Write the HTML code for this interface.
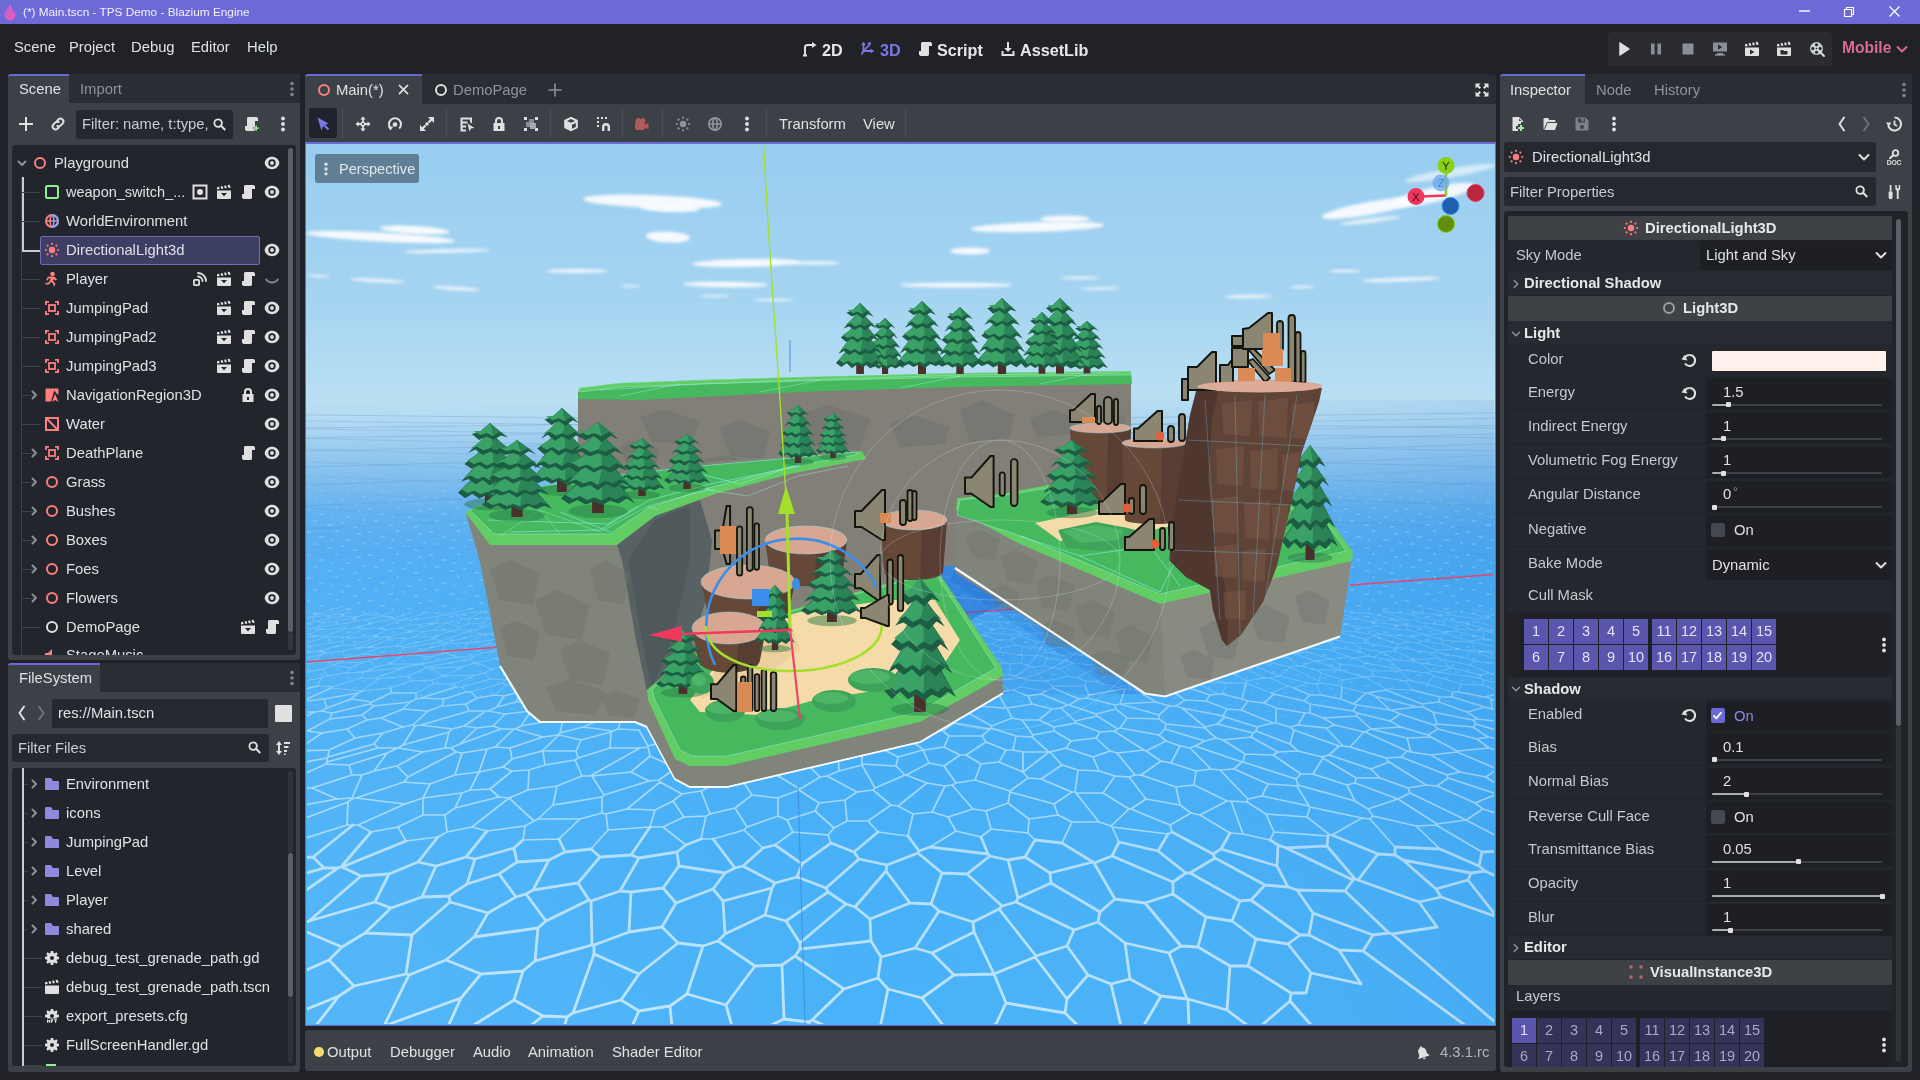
<!DOCTYPE html><html><head><meta charset="utf-8"><title>Blazium Engine</title><style>html,body{margin:0;padding:0}body{width:1920px;height:1080px;overflow:hidden;background:#202228;position:relative;font-family:"Liberation Sans",sans-serif}
.b{position:absolute;box-sizing:border-box}.g{font-size:14.500px;line-height:25px;text-align:center}.t{position:absolute;white-space:nowrap;line-height:20px;height:20px}.ic{position:absolute;display:block;overflow:visible}
#vp svg{position:absolute;left:1px;top:2px}#root{position:absolute;left:0;top:0;width:1920px;height:1080px;will-change:transform}</style></head><body><div id="root"><div class="b " style="left:0px;top:0px;width:1920px;height:24px;background:#6d6ad8;"></div>
<svg class="ic" style="left:1px;top:3px" width="16" height="18" viewBox="0 0 16 18"><path d="M8.500 0.500c.5 2.500-.5 4-2 5.500C4.500 8 3 10 3.500 12.500 4 15.500 6.500 17.500 9 17.500c3 0 5.500-2.500 5.500-5.500 0-2-1-3.500-2-4.500.2 1.500-.3 2.500-1 3C12 7 11 3 8.500.5z" fill="#e05cc0"/><path d="M8.500 5c.3 2-1 3-2 4.500C5.500 11 5.500 13 6.500 14.500 5 13 4.800 11 6 9.500 7 8 8 7 8.500 5z" fill="#9b4fd0"/></svg>
<div class="t " style="left:23px;top:2px;color:#f2f1fc;font-size:11.8px;">(*) Main.tscn - TPS Demo - Blazium Engine</div>
<svg class="ic" style="left:1797px;top:4px" width="110" height="16" viewBox="0 0 110 16"><path d="M2 7h11" stroke="#fff" stroke-width="1.400"/><path d="M47.500 5.500h7v7h-7zM49.500 5.500v-2h7v7h-2" fill="none" stroke="#fff" stroke-width="1.200"/><path d="M92.500 2.500l10 10M102.500 2.500l-10 10" stroke="#fff" stroke-width="1.200"/></svg>
<div class="t " style="left:14px;top:37px;color:#dfe1e4;font-size:14.8px;">Scene</div>
<div class="t " style="left:69px;top:37px;color:#dfe1e4;font-size:14.8px;">Project</div>
<div class="t " style="left:131px;top:37px;color:#dfe1e4;font-size:14.8px;">Debug</div>
<div class="t " style="left:191px;top:37px;color:#dfe1e4;font-size:14.8px;">Editor</div>
<div class="t " style="left:247px;top:37px;color:#dfe1e4;font-size:14.8px;">Help</div>
<svg class="ic" style="left:802.0px;top:41.0px" width="16" height="16" viewBox="0 0 16 16" ><path d="M3 15V6.500A2.500 2.500 0 0 1 5.500 4H11" fill="none" stroke="#e0e0e0" stroke-width="2"/><path d="M10 1l4.500 3L10 7zM1 13.500h4v2H1z" fill="#e0e0e0"/></svg>
<div class="t " style="left:822px;top:39.5px;color:#e6e7e9;font-size:16.2px;font-weight:bold">2D</div>
<svg class="ic" style="left:860.0px;top:41.0px" width="16" height="16" viewBox="0 0 16 16" ><g fill="none" stroke="#7b78e8" stroke-width="1.800"><path d="M3.500 2.500v7.500h8"/><path d="M3.500 10l-2 3.500M3.500 10L9.500 3.500"/></g><path d="M1.200 4L3.500.8 5.800 4zM10.500 7.700L14.500 10l-4 2.300zM7.200 2l4-1-1 4z" fill="#7b78e8"/></svg>
<div class="t " style="left:880px;top:39.5px;color:#7b78e8;font-size:16.2px;font-weight:bold">3D</div>
<svg class="ic" style="left:917.0px;top:41.0px" width="16" height="16" viewBox="0 0 16 16" ><path d="M6 1C4.9 1 4 1.9 4 3v7H2v2.2C2 13.7 3 15 4.5 15H10c1.1 0 2-.9 2-2V5h2.5V3c0-1.1-.9-2-2-2zm0 1.4h5.2c-.2.4-.2.8-.2 1.2V6H9v6.6c0 .6-.4 1-1 1s-1-.4-1-1V10H5.4V3c0-.3.3-.6.6-.6z" fill="#e0e0e0"/><path d="M6 1C4.9 1 4 1.9 4 3v7H2v2.5C2 13.9 3.1 15 4.5 15H10c1.1 0 2-.9 2-2V5h3V3c0-1.1-.9-2-2-2z" fill="#e0e0e0"/></svg>
<div class="t " style="left:937px;top:39.5px;color:#e6e7e9;font-size:16.2px;font-weight:bold">Script</div>
<svg class="ic" style="left:1000.0px;top:41.0px" width="16" height="16" viewBox="0 0 16 16" ><path d="M7 1h2v6h2.800L8 11 4.200 7H7zM1.500 10h2v3h9v-3h2v5h-13z" fill="#e0e0e0"/></svg>
<div class="t " style="left:1020px;top:39.5px;color:#e6e7e9;font-size:16.2px;font-weight:bold">AssetLib</div>
<div class="b " style="left:1608px;top:32px;width:224px;height:34px;background:#2a2c32;border-radius:4px"></div>
<svg class="ic" style="left:1615.5px;top:40.5px" width="16" height="16" viewBox="0 0 16 16" ><path d="M4 2l9 6-9 6z" fill="#e0e0e0" stroke="#e0e0e0" stroke-width="1.500" stroke-linejoin="round"/></svg>
<svg class="ic" style="left:1648.0px;top:40.5px" width="16" height="16" viewBox="0 0 16 16" ><path d="M3 2.500h3.600v11H3zM9.400 2.500H13v11H9.400z" fill="#8a8f96"/></svg>
<svg class="ic" style="left:1680.0px;top:40.5px" width="16" height="16" viewBox="0 0 16 16" ><rect x="2.500" y="2.500" width="11" height="11" rx="1" fill="#8a8f96"/></svg>
<svg class="ic" style="left:1712.0px;top:40.5px" width="16" height="16" viewBox="0 0 16 16" ><path d="M1 1.500h14v9H1zM6 3.500v5l4.500-2.500zM5 12h6v1.200h2v1.600H3v-1.600h2z" fill="#8a8f96" fill-rule="evenodd"/></svg>
<svg class="ic" style="left:1744.0px;top:40.5px" width="16" height="16" viewBox="0 0 16 16" ><path d="M1 6.500h14V14a1 1 0 0 1-1 1H2a1 1 0 0 1-1-1zM6 8.500v5l4.500-2.500z" fill="#e0e0e0" fill-rule="evenodd"/><path d="M1 5.500V3.200l2-.4.800 2.200zM4.500 2.500l2-.4.900 2.500-2 .5zM8 1.800l2-.4.900 2.500-2 .5zM11.500 1.100l2-.4L14.800 3.500l-2.300.6z" fill="#e0e0e0"/></svg>
<svg class="ic" style="left:1776.0px;top:40.5px" width="16" height="16" viewBox="0 0 16 16" ><path d="M1 6.500h14V14a1 1 0 0 1-1 1H2a1 1 0 0 1-1-1zM4.500 9v4.500h7V10H8L7 9z" fill="#e0e0e0" fill-rule="evenodd"/><path d="M1 5.500V3.200l2-.4.800 2.200zM4.500 2.500l2-.4.900 2.500-2 .5zM8 1.800l2-.4.900 2.500-2 .5zM11.500 1.100l2-.4L14.800 3.500l-2.300.6z" fill="#e0e0e0"/></svg>
<svg class="ic" style="left:1808.5px;top:40.5px" width="16" height="16" viewBox="0 0 16 16" ><circle cx="7.500" cy="7.500" r="6.500" fill="#c9ccd0"/><g fill="#202228"><circle cx="7.500" cy="3.800" r="1.500"/><circle cx="7.500" cy="11.200" r="1.500"/><circle cx="3.800" cy="7.500" r="1.500"/><circle cx="11.200" cy="7.500" r="1.500"/><circle cx="7.500" cy="7.500" r=".8"/></g><path d="M11.500 11.500l3.500 3.500" stroke="#e0e0e0" stroke-width="2" stroke-linecap="round"/></svg>
<div class="t " style="left:1842px;top:38px;color:#dc6a93;font-size:15.6px;font-weight:bold">Mobile</div>
<svg class="ic" style="left:1894.0px;top:40.5px" width="16" height="16" viewBox="0 0 16 16" ><path d="M3.500 6l4.500 4.500L12.500 6" fill="none" stroke="#dc6a93" stroke-width="2" stroke-linecap="round" stroke-linejoin="round"/></svg>
<div class="b " style="left:8px;top:74px;width:292px;height:586px;background:#3b4146;border-radius:3px"></div>
<div class="b " style="left:8px;top:74px;width:292px;height:29px;background:#2a2d33;border-radius:3px 3px 0 0"></div>
<div class="b " style="left:8px;top:74px;width:61px;height:29px;background:#3b4146;border-top:2px solid #6b69d6;box-sizing:border-box;border-radius:3px 0 0 0"></div>
<div class="t " style="left:19px;top:79px;color:#dfe1e4;font-size:14.8px;">Scene</div>
<div class="t " style="left:80px;top:79px;color:#8f949b;font-size:14.8px;">Import</div>
<svg class="ic" style="left:284.0px;top:81.0px" width="16" height="16" viewBox="0 0 16 16" ><g fill="#7f848b"><circle cx="8" cy="2.5" r="1.8"/><circle cx="8" cy="8" r="1.8"/><circle cx="8" cy="13.5" r="1.8"/></g></svg>
<svg class="ic" style="left:18.0px;top:116.0px" width="16" height="16" viewBox="0 0 16 16" ><path d="M7 1v6H1v2h6v6h2V9h6V7H9V1z" fill="#e0e0e0"/></svg>
<svg class="ic" style="left:50.0px;top:116.0px" width="16" height="16" viewBox="0 0 16 16" ><g fill="none" stroke="#e0e0e0" stroke-width="2" stroke-linecap="round"><path d="M7.2 4.6l1.4-1.4a3 3 0 0 1 4.2 4.2l-2 2a3 3 0 0 1-3.4.6"/><path d="M8.8 11.4l-1.4 1.4a3 3 0 0 1-4.2-4.2l2-2a3 3 0 0 1 3.4-.6"/></g></svg>
<div class="b " style="left:76px;top:110px;width:157px;height:29px;background:#25282e;border-radius:3px"></div>
<div class="t " style="left:82px;top:114px;color:#c8cbcf;font-size:14.8px;">Filter: name, t:type,</div>
<svg class="ic" style="left:211.5px;top:116.5px" width="15" height="15" viewBox="0 0 16 16" ><path d="M6.5 1.5a5 5 0 1 0 2.9 9.1l4 4 1.5-1.5-4-4A5 5 0 0 0 6.5 1.5zm0 2a3 3 0 0 1 0 6 3 3 0 0 1 0-6z" fill="#e0e0e0"/></svg>
<svg class="ic" style="left:243.0px;top:116.0px" width="16" height="16" viewBox="0 0 16 16" ><path d="M6 1C4.9 1 4 1.9 4 3v7H2v2.2C2 13.7 3 15 4.5 15H10c1.1 0 2-.9 2-2V5h2.5V3c0-1.1-.9-2-2-2zm0 1.4h5.2c-.2.4-.2.8-.2 1.2V6H9v6.6c0 .6-.4 1-1 1s-1-.4-1-1V10H5.4V3c0-.3.3-.6.6-.6z" fill="#e0e0e0"/><path d="M6 1C4.9 1 4 1.9 4 3v7H2v2.5C2 13.9 3.1 15 4.5 15H10c1.1 0 2-.9 2-2V5h3V3c0-1.1-.9-2-2-2z" fill="#e0e0e0"/><path d="M12.2 9.2v2h-2v1.8h2v2H14v-2h2v-1.800h-2v-2z" fill="#8eef97" stroke="#363b42" stroke-width=".3"/></svg>
<svg class="ic" style="left:275.0px;top:116.0px" width="16" height="16" viewBox="0 0 16 16" ><g fill="#e0e0e0"><circle cx="8" cy="2.5" r="1.9"/><circle cx="8" cy="8" r="1.9"/><circle cx="8" cy="13.5" r="1.9"/></g></svg>
<div class="b " style="left:12px;top:145px;width:284px;height:510px;background:#22252b;border-radius:3px"></div>
<div class="b " style="left:288px;top:148px;width:5px;height:484px;background:#5a5f66;border-radius:3px"></div>
<div class="b " style="left:288px;top:632px;width:5px;height:18px;background:#34383e;border-radius:3px"></div>
<div class="b " style="left:21px;top:177px;width:1px;height:478px;background:#3e434a;"></div>
<div class="b " style="left:21.5px;top:177px;width:2px;height:74px;background:#c9cbce;"></div>
<div class="b " style="left:22px;top:249.5px;width:18px;height:2px;background:#c9cbce;"></div>
<svg class="ic" style="left:14.0px;top:155.0px" width="16" height="16" viewBox="0 0 16 16" ><path d="M4.500 6.500l3.500 3.500L11.500 6.500" fill="none" stroke="#8c9097" stroke-width="2" stroke-linecap="round" stroke-linejoin="round"/></svg>
<svg class="ic" style="left:32.0px;top:155.0px" width="16" height="16" viewBox="0 0 16 16" ><circle cx="8" cy="8" r="5" fill="none" stroke="#fc7f7f" stroke-width="2"/></svg>
<div class="t " style="left:54px;top:153px;color:#dfe1e4;font-size:14.8px;">Playground</div>
<svg class="ic" style="left:263.5px;top:155.0px" width="16" height="16" viewBox="0 0 16 16" ><path d="M8 1.8C4.2 1.800 1.200 4.400.6 8c.6 3.600 3.600 6.200 7.400 6.200s6.800-2.600 7.400-6.200C14.800 4.400 11.800 1.800 8 1.800z" fill="#e0e0e0"/><circle cx="8" cy="8" r="3.700" fill="#22252b"/><circle cx="8" cy="8" r="1.9" fill="#e0e0e0"/></svg>
<div class="b " style="left:22px;top:192px;width:18px;height:1px;background:#3e434a;"></div>
<svg class="ic" style="left:44.0px;top:184.0px" width="16" height="16" viewBox="0 0 16 16" ><rect x="2" y="2" width="12" height="12" rx="1.500" fill="none" stroke="#8eef97" stroke-width="2"/></svg>
<div class="t " style="left:66px;top:182px;color:#dfe1e4;font-size:14.5px;">weapon_switch_...</div>
<svg class="ic" style="left:263.5px;top:184.0px" width="16" height="16" viewBox="0 0 16 16" ><path d="M8 1.8C4.2 1.800 1.200 4.400.6 8c.6 3.600 3.600 6.200 7.400 6.200s6.800-2.600 7.400-6.200C14.800 4.400 11.800 1.800 8 1.800z" fill="#e0e0e0"/><circle cx="8" cy="8" r="3.700" fill="#22252b"/><circle cx="8" cy="8" r="1.9" fill="#e0e0e0"/></svg>
<svg class="ic" style="left:239.5px;top:184.0px" width="16" height="16" viewBox="0 0 16 16" ><path d="M6 1C4.9 1 4 1.9 4 3v7H2v2.2C2 13.7 3 15 4.5 15H10c1.1 0 2-.9 2-2V5h2.5V3c0-1.1-.9-2-2-2zm0 1.4h5.2c-.2.4-.2.8-.2 1.2V6H9v6.6c0 .6-.4 1-1 1s-1-.4-1-1V10H5.4V3c0-.3.3-.6.6-.6z" fill="#e0e0e0"/><path d="M6 1C4.9 1 4 1.9 4 3v7H2v2.5C2 13.9 3.1 15 4.5 15H10c1.1 0 2-.9 2-2V5h3V3c0-1.1-.9-2-2-2z" fill="#e0e0e0"/></svg>
<svg class="ic" style="left:215.5px;top:184.0px" width="16" height="16" viewBox="0 0 16 16" ><path d="M1 6.500h14V14a1 1 0 0 1-1 1H2a1 1 0 0 1-1-1zM5 9l3 3.200L11 9z" fill="#e0e0e0" fill-rule="evenodd"/><path d="M1 5.500V3.200l2-.4.800 2.200zM4.500 2.500l2-.4.900 2.500-2 .5zM8 1.800l2-.4.900 2.500-2 .5zM11.500 1.100l2-.4L14.800 3.500l-2.300.6z" fill="#e0e0e0"/></svg>
<svg class="ic" style="left:191.5px;top:184.0px" width="16" height="16" viewBox="0 0 16 16" ><rect x="1.500" y="1.500" width="13" height="13" fill="none" stroke="#e0e0e0" stroke-width="2"/><circle cx="8" cy="8" r="3" fill="#e0e0e0"/></svg>
<div class="b " style="left:22px;top:221px;width:18px;height:1px;background:#3e434a;"></div>
<svg class="ic" style="left:44.0px;top:213.0px" width="16" height="16" viewBox="0 0 16 16" ><circle cx="8" cy="8" r="6" fill="none" stroke="#fc7f7f" stroke-width="2"/><path d="M8 2a6 6 0 0 1 0 12" fill="none" stroke="#8da5f3" stroke-width="2"/><path d="M2 8h6M8 2c-2.500 1.500-2.500 10.500 0 12" fill="none" stroke="#fc7f7f" stroke-width="1.600"/><path d="M8 8h6M8 2c2.500 1.500 2.500 10.500 0 12" fill="none" stroke="#8da5f3" stroke-width="1.600"/></svg>
<div class="t " style="left:66px;top:211px;color:#dfe1e4;font-size:14.8px;">WorldEnvironment</div>
<div class="b " style="left:40px;top:236px;width:220px;height:29px;background:#3c3e63;border:1px solid #6f6db2;box-sizing:border-box;border-radius:2px"></div>
<svg class="ic" style="left:44.0px;top:242.0px" width="16" height="16" viewBox="0 0 16 16" ><g fill="#fc7f7f" opacity="1"><circle cx="8" cy="8" r="3.200"/><circle cx="8" cy="1.800" r="1.100"/><circle cx="8" cy="14.200" r="1.100"/><circle cx="1.800" cy="8" r="1.100"/><circle cx="14.200" cy="8" r="1.100"/><circle cx="3.600" cy="3.600" r="1.100"/><circle cx="12.400" cy="3.600" r="1.100"/><circle cx="3.600" cy="12.400" r="1.100"/><circle cx="12.400" cy="12.400" r="1.100"/></g></svg>
<div class="t " style="left:66px;top:240px;color:#dfe1e4;font-size:14.8px;">DirectionalLight3d</div>
<svg class="ic" style="left:263.5px;top:242.0px" width="16" height="16" viewBox="0 0 16 16" ><path d="M8 1.8C4.2 1.800 1.200 4.400.6 8c.6 3.600 3.600 6.200 7.400 6.200s6.800-2.600 7.400-6.200C14.800 4.400 11.800 1.800 8 1.800z" fill="#e0e0e0"/><circle cx="8" cy="8" r="3.700" fill="#22252b"/><circle cx="8" cy="8" r="1.9" fill="#e0e0e0"/></svg>
<div class="b " style="left:22px;top:279px;width:18px;height:1px;background:#3e434a;"></div>
<svg class="ic" style="left:44.0px;top:271.0px" width="16" height="16" viewBox="0 0 16 16" ><g fill="#fc7f7f"><circle cx="8.500" cy="3" r="2.300"/><path d="M5 5.500l5.500.3 2.500 2.700-1.200 1.200-2-1.800-.8 2 2.500 2.600-1 2.500-1.600-.5.6-1.500-2.500-2-2 2.500H1.500v-1.700h2.700l1.800-2.600.5-2.200-1.800.6-1 2-1.500-.7 1.300-2.700z"/></g></svg>
<div class="t " style="left:66px;top:269px;color:#dfe1e4;font-size:14.8px;">Player</div>
<svg class="ic" style="left:263.5px;top:271.0px" width="16" height="16" viewBox="0 0 16 16" ><path d="M1 8.500c1.500 2.500 4 4 7 4s5.500-1.500 7-4l-1.600-1.200c-.5 1-1.300 1.800-2.200 2.400C10.200 10.300 9.100 10.500 8 10.500s-2.200-.2-3.200-.8C3.900 9.100 3.100 8.300 2.600 7.300z" fill="#7e848c"/></svg>
<svg class="ic" style="left:239.5px;top:271.0px" width="16" height="16" viewBox="0 0 16 16" ><path d="M6 1C4.9 1 4 1.9 4 3v7H2v2.2C2 13.7 3 15 4.5 15H10c1.1 0 2-.9 2-2V5h2.5V3c0-1.1-.9-2-2-2zm0 1.4h5.2c-.2.4-.2.8-.2 1.2V6H9v6.6c0 .6-.4 1-1 1s-1-.4-1-1V10H5.4V3c0-.3.3-.6.6-.6z" fill="#e0e0e0"/><path d="M6 1C4.9 1 4 1.9 4 3v7H2v2.5C2 13.9 3.1 15 4.5 15H10c1.1 0 2-.9 2-2V5h3V3c0-1.1-.9-2-2-2z" fill="#e0e0e0"/></svg>
<svg class="ic" style="left:215.5px;top:271.0px" width="16" height="16" viewBox="0 0 16 16" ><path d="M1 6.500h14V14a1 1 0 0 1-1 1H2a1 1 0 0 1-1-1zM5 9l3 3.200L11 9z" fill="#e0e0e0" fill-rule="evenodd"/><path d="M1 5.500V3.200l2-.4.800 2.200zM4.500 2.500l2-.4.900 2.500-2 .5zM8 1.800l2-.4.900 2.500-2 .5zM11.500 1.100l2-.4L14.800 3.500l-2.300.6z" fill="#e0e0e0"/></svg>
<svg class="ic" style="left:191.5px;top:271.0px" width="16" height="16" viewBox="0 0 16 16" ><g fill="none" stroke="#e0e0e0" stroke-width="1.800" stroke-linecap="round"><rect x="1.900" y="8.900" width="5.200" height="5.200" rx=".8"/><path d="M6 5.500A4.500 4.500 0 0 1 10.500 10M6 2a8 8 0 0 1 8 8"/></g></svg>
<div class="b " style="left:22px;top:308px;width:18px;height:1px;background:#3e434a;"></div>
<svg class="ic" style="left:44.0px;top:300.0px" width="16" height="16" viewBox="0 0 16 16" ><g fill="none" stroke="#fc7f7f" stroke-width="1.800"><path d="M1.900 5V1.900H5M11 1.900h3.100V5M14.100 11v3.100H11M5 14.100H1.900V11"/><rect x="5" y="5" width="6" height="6"/></g></svg>
<div class="t " style="left:66px;top:298px;color:#dfe1e4;font-size:14.8px;">JumpingPad</div>
<svg class="ic" style="left:263.5px;top:300.0px" width="16" height="16" viewBox="0 0 16 16" ><path d="M8 1.8C4.2 1.800 1.200 4.400.6 8c.6 3.600 3.600 6.200 7.400 6.200s6.800-2.600 7.400-6.200C14.800 4.400 11.800 1.800 8 1.800z" fill="#e0e0e0"/><circle cx="8" cy="8" r="3.700" fill="#22252b"/><circle cx="8" cy="8" r="1.9" fill="#e0e0e0"/></svg>
<svg class="ic" style="left:239.5px;top:300.0px" width="16" height="16" viewBox="0 0 16 16" ><path d="M6 1C4.9 1 4 1.9 4 3v7H2v2.2C2 13.7 3 15 4.5 15H10c1.1 0 2-.9 2-2V5h2.5V3c0-1.1-.9-2-2-2zm0 1.4h5.2c-.2.4-.2.8-.2 1.2V6H9v6.6c0 .6-.4 1-1 1s-1-.4-1-1V10H5.4V3c0-.3.3-.6.6-.6z" fill="#e0e0e0"/><path d="M6 1C4.9 1 4 1.9 4 3v7H2v2.5C2 13.9 3.1 15 4.5 15H10c1.1 0 2-.9 2-2V5h3V3c0-1.1-.9-2-2-2z" fill="#e0e0e0"/></svg>
<svg class="ic" style="left:215.5px;top:300.0px" width="16" height="16" viewBox="0 0 16 16" ><path d="M1 6.500h14V14a1 1 0 0 1-1 1H2a1 1 0 0 1-1-1zM5 9l3 3.200L11 9z" fill="#e0e0e0" fill-rule="evenodd"/><path d="M1 5.500V3.200l2-.4.800 2.200zM4.500 2.500l2-.4.900 2.500-2 .5zM8 1.800l2-.4.900 2.500-2 .5zM11.500 1.100l2-.4L14.800 3.500l-2.300.6z" fill="#e0e0e0"/></svg>
<div class="b " style="left:22px;top:337px;width:18px;height:1px;background:#3e434a;"></div>
<svg class="ic" style="left:44.0px;top:329.0px" width="16" height="16" viewBox="0 0 16 16" ><g fill="none" stroke="#fc7f7f" stroke-width="1.800"><path d="M1.900 5V1.900H5M11 1.900h3.100V5M14.100 11v3.100H11M5 14.100H1.900V11"/><rect x="5" y="5" width="6" height="6"/></g></svg>
<div class="t " style="left:66px;top:327px;color:#dfe1e4;font-size:14.8px;">JumpingPad2</div>
<svg class="ic" style="left:263.5px;top:329.0px" width="16" height="16" viewBox="0 0 16 16" ><path d="M8 1.8C4.2 1.800 1.200 4.400.6 8c.6 3.600 3.600 6.200 7.400 6.200s6.800-2.600 7.400-6.200C14.800 4.400 11.800 1.800 8 1.800z" fill="#e0e0e0"/><circle cx="8" cy="8" r="3.700" fill="#22252b"/><circle cx="8" cy="8" r="1.9" fill="#e0e0e0"/></svg>
<svg class="ic" style="left:239.5px;top:329.0px" width="16" height="16" viewBox="0 0 16 16" ><path d="M6 1C4.9 1 4 1.9 4 3v7H2v2.2C2 13.7 3 15 4.5 15H10c1.1 0 2-.9 2-2V5h2.5V3c0-1.1-.9-2-2-2zm0 1.4h5.2c-.2.4-.2.8-.2 1.2V6H9v6.6c0 .6-.4 1-1 1s-1-.4-1-1V10H5.4V3c0-.3.3-.6.6-.6z" fill="#e0e0e0"/><path d="M6 1C4.9 1 4 1.9 4 3v7H2v2.5C2 13.9 3.1 15 4.5 15H10c1.1 0 2-.9 2-2V5h3V3c0-1.1-.9-2-2-2z" fill="#e0e0e0"/></svg>
<svg class="ic" style="left:215.5px;top:329.0px" width="16" height="16" viewBox="0 0 16 16" ><path d="M1 6.500h14V14a1 1 0 0 1-1 1H2a1 1 0 0 1-1-1zM5 9l3 3.200L11 9z" fill="#e0e0e0" fill-rule="evenodd"/><path d="M1 5.500V3.200l2-.4.800 2.200zM4.500 2.500l2-.4.900 2.500-2 .5zM8 1.800l2-.4.900 2.500-2 .5zM11.500 1.100l2-.4L14.800 3.500l-2.300.6z" fill="#e0e0e0"/></svg>
<div class="b " style="left:22px;top:366px;width:18px;height:1px;background:#3e434a;"></div>
<svg class="ic" style="left:44.0px;top:358.0px" width="16" height="16" viewBox="0 0 16 16" ><g fill="none" stroke="#fc7f7f" stroke-width="1.800"><path d="M1.900 5V1.900H5M11 1.900h3.100V5M14.100 11v3.100H11M5 14.100H1.900V11"/><rect x="5" y="5" width="6" height="6"/></g></svg>
<div class="t " style="left:66px;top:356px;color:#dfe1e4;font-size:14.8px;">JumpingPad3</div>
<svg class="ic" style="left:263.5px;top:358.0px" width="16" height="16" viewBox="0 0 16 16" ><path d="M8 1.8C4.2 1.800 1.200 4.400.6 8c.6 3.600 3.600 6.200 7.400 6.200s6.800-2.600 7.400-6.200C14.800 4.400 11.800 1.800 8 1.800z" fill="#e0e0e0"/><circle cx="8" cy="8" r="3.700" fill="#22252b"/><circle cx="8" cy="8" r="1.9" fill="#e0e0e0"/></svg>
<svg class="ic" style="left:239.5px;top:358.0px" width="16" height="16" viewBox="0 0 16 16" ><path d="M6 1C4.9 1 4 1.9 4 3v7H2v2.2C2 13.7 3 15 4.5 15H10c1.1 0 2-.9 2-2V5h2.5V3c0-1.1-.9-2-2-2zm0 1.4h5.2c-.2.4-.2.8-.2 1.2V6H9v6.6c0 .6-.4 1-1 1s-1-.4-1-1V10H5.4V3c0-.3.3-.6.6-.6z" fill="#e0e0e0"/><path d="M6 1C4.9 1 4 1.9 4 3v7H2v2.5C2 13.9 3.1 15 4.5 15H10c1.1 0 2-.9 2-2V5h3V3c0-1.1-.9-2-2-2z" fill="#e0e0e0"/></svg>
<svg class="ic" style="left:215.5px;top:358.0px" width="16" height="16" viewBox="0 0 16 16" ><path d="M1 6.500h14V14a1 1 0 0 1-1 1H2a1 1 0 0 1-1-1zM5 9l3 3.200L11 9z" fill="#e0e0e0" fill-rule="evenodd"/><path d="M1 5.500V3.200l2-.4.800 2.200zM4.500 2.500l2-.4.900 2.500-2 .5zM8 1.800l2-.4.900 2.500-2 .5zM11.500 1.100l2-.4L14.800 3.500l-2.300.6z" fill="#e0e0e0"/></svg>
<div class="b " style="left:22px;top:395px;width:12px;height:1px;background:#3e434a;"></div>
<svg class="ic" style="left:26.0px;top:387.0px" width="16" height="16" viewBox="0 0 16 16" ><path d="M6.500 4.500L10 8 6.500 11.500" fill="none" stroke="#8c9097" stroke-width="2" stroke-linecap="round" stroke-linejoin="round"/></svg>
<svg class="ic" style="left:44.0px;top:387.0px" width="16" height="16" viewBox="0 0 16 16" ><path d="M1.500 1.500h13v6.200L13 7l-2.800-3.500L7 14.500H1.500z" fill="#fc7f7f"/><path d="M11 7l3.500 8-3.500-2-3 2z" fill="#fc7f7f"/></svg>
<div class="t " style="left:66px;top:385px;color:#dfe1e4;font-size:14.8px;">NavigationRegion3D</div>
<svg class="ic" style="left:263.5px;top:387.0px" width="16" height="16" viewBox="0 0 16 16" ><path d="M8 1.8C4.2 1.800 1.200 4.400.6 8c.6 3.600 3.600 6.200 7.400 6.200s6.800-2.600 7.400-6.200C14.800 4.400 11.800 1.800 8 1.800z" fill="#e0e0e0"/><circle cx="8" cy="8" r="3.700" fill="#22252b"/><circle cx="8" cy="8" r="1.9" fill="#e0e0e0"/></svg>
<svg class="ic" style="left:239.5px;top:387.0px" width="16" height="16" viewBox="0 0 16 16" ><path d="M8 1a4 4 0 0 0-4 4v2H2.500v8h11V7H12V5a4 4 0 0 0-4-4zm0 2a2 2 0 0 1 2 2v2H6V5a2 2 0 0 1 2-2zm-1 7h2v3H7z" fill="#e0e0e0" fill-rule="evenodd"/></svg>
<div class="b " style="left:22px;top:424px;width:18px;height:1px;background:#3e434a;"></div>
<svg class="ic" style="left:44.0px;top:416.0px" width="16" height="16" viewBox="0 0 16 16" ><g fill="none" stroke="#fc7f7f" stroke-width="2"><rect x="2" y="2" width="12" height="12"/><path d="M2.500 2.500l11 11"/></g></svg>
<div class="t " style="left:66px;top:414px;color:#dfe1e4;font-size:14.8px;">Water</div>
<svg class="ic" style="left:263.5px;top:416.0px" width="16" height="16" viewBox="0 0 16 16" ><path d="M8 1.8C4.2 1.800 1.200 4.400.6 8c.6 3.600 3.600 6.200 7.400 6.200s6.800-2.600 7.400-6.200C14.800 4.400 11.800 1.800 8 1.800z" fill="#e0e0e0"/><circle cx="8" cy="8" r="3.700" fill="#22252b"/><circle cx="8" cy="8" r="1.9" fill="#e0e0e0"/></svg>
<div class="b " style="left:22px;top:453px;width:12px;height:1px;background:#3e434a;"></div>
<svg class="ic" style="left:26.0px;top:445.0px" width="16" height="16" viewBox="0 0 16 16" ><path d="M6.500 4.500L10 8 6.500 11.500" fill="none" stroke="#8c9097" stroke-width="2" stroke-linecap="round" stroke-linejoin="round"/></svg>
<svg class="ic" style="left:44.0px;top:445.0px" width="16" height="16" viewBox="0 0 16 16" ><g fill="none" stroke="#fc7f7f" stroke-width="1.800"><path d="M1.900 5V1.900H5M11 1.900h3.100V5M14.100 11v3.100H11M5 14.100H1.900V11"/><rect x="5" y="5" width="6" height="6"/></g></svg>
<div class="t " style="left:66px;top:443px;color:#dfe1e4;font-size:14.8px;">DeathPlane</div>
<svg class="ic" style="left:263.5px;top:445.0px" width="16" height="16" viewBox="0 0 16 16" ><path d="M8 1.8C4.2 1.800 1.200 4.400.6 8c.6 3.600 3.600 6.200 7.400 6.200s6.800-2.600 7.400-6.200C14.800 4.400 11.800 1.800 8 1.800z" fill="#e0e0e0"/><circle cx="8" cy="8" r="3.700" fill="#22252b"/><circle cx="8" cy="8" r="1.9" fill="#e0e0e0"/></svg>
<svg class="ic" style="left:239.5px;top:445.0px" width="16" height="16" viewBox="0 0 16 16" ><path d="M6 1C4.9 1 4 1.9 4 3v7H2v2.2C2 13.7 3 15 4.5 15H10c1.1 0 2-.9 2-2V5h2.5V3c0-1.1-.9-2-2-2zm0 1.4h5.2c-.2.4-.2.8-.2 1.2V6H9v6.6c0 .6-.4 1-1 1s-1-.4-1-1V10H5.4V3c0-.3.3-.6.6-.6z" fill="#e0e0e0"/><path d="M6 1C4.9 1 4 1.9 4 3v7H2v2.5C2 13.9 3.1 15 4.5 15H10c1.1 0 2-.9 2-2V5h3V3c0-1.1-.9-2-2-2z" fill="#e0e0e0"/></svg>
<div class="b " style="left:22px;top:482px;width:12px;height:1px;background:#3e434a;"></div>
<svg class="ic" style="left:26.0px;top:474.0px" width="16" height="16" viewBox="0 0 16 16" ><path d="M6.500 4.500L10 8 6.500 11.500" fill="none" stroke="#8c9097" stroke-width="2" stroke-linecap="round" stroke-linejoin="round"/></svg>
<svg class="ic" style="left:44.0px;top:474.0px" width="16" height="16" viewBox="0 0 16 16" ><circle cx="8" cy="8" r="5" fill="none" stroke="#fc7f7f" stroke-width="2"/></svg>
<div class="t " style="left:66px;top:472px;color:#dfe1e4;font-size:14.8px;">Grass</div>
<svg class="ic" style="left:263.5px;top:474.0px" width="16" height="16" viewBox="0 0 16 16" ><path d="M8 1.8C4.2 1.800 1.200 4.400.6 8c.6 3.600 3.600 6.200 7.400 6.200s6.800-2.600 7.400-6.200C14.800 4.400 11.800 1.800 8 1.800z" fill="#e0e0e0"/><circle cx="8" cy="8" r="3.700" fill="#22252b"/><circle cx="8" cy="8" r="1.9" fill="#e0e0e0"/></svg>
<div class="b " style="left:22px;top:511px;width:12px;height:1px;background:#3e434a;"></div>
<svg class="ic" style="left:26.0px;top:503.0px" width="16" height="16" viewBox="0 0 16 16" ><path d="M6.500 4.500L10 8 6.500 11.500" fill="none" stroke="#8c9097" stroke-width="2" stroke-linecap="round" stroke-linejoin="round"/></svg>
<svg class="ic" style="left:44.0px;top:503.0px" width="16" height="16" viewBox="0 0 16 16" ><circle cx="8" cy="8" r="5" fill="none" stroke="#fc7f7f" stroke-width="2"/></svg>
<div class="t " style="left:66px;top:501px;color:#dfe1e4;font-size:14.8px;">Bushes</div>
<svg class="ic" style="left:263.5px;top:503.0px" width="16" height="16" viewBox="0 0 16 16" ><path d="M8 1.8C4.2 1.800 1.200 4.400.6 8c.6 3.600 3.600 6.200 7.400 6.200s6.800-2.600 7.400-6.200C14.800 4.400 11.800 1.800 8 1.800z" fill="#e0e0e0"/><circle cx="8" cy="8" r="3.700" fill="#22252b"/><circle cx="8" cy="8" r="1.9" fill="#e0e0e0"/></svg>
<div class="b " style="left:22px;top:540px;width:12px;height:1px;background:#3e434a;"></div>
<svg class="ic" style="left:26.0px;top:532.0px" width="16" height="16" viewBox="0 0 16 16" ><path d="M6.500 4.500L10 8 6.500 11.500" fill="none" stroke="#8c9097" stroke-width="2" stroke-linecap="round" stroke-linejoin="round"/></svg>
<svg class="ic" style="left:44.0px;top:532.0px" width="16" height="16" viewBox="0 0 16 16" ><circle cx="8" cy="8" r="5" fill="none" stroke="#fc7f7f" stroke-width="2"/></svg>
<div class="t " style="left:66px;top:530px;color:#dfe1e4;font-size:14.8px;">Boxes</div>
<svg class="ic" style="left:263.5px;top:532.0px" width="16" height="16" viewBox="0 0 16 16" ><path d="M8 1.8C4.2 1.800 1.200 4.400.6 8c.6 3.600 3.600 6.200 7.400 6.200s6.800-2.600 7.400-6.200C14.800 4.400 11.800 1.800 8 1.800z" fill="#e0e0e0"/><circle cx="8" cy="8" r="3.700" fill="#22252b"/><circle cx="8" cy="8" r="1.9" fill="#e0e0e0"/></svg>
<div class="b " style="left:22px;top:569px;width:12px;height:1px;background:#3e434a;"></div>
<svg class="ic" style="left:26.0px;top:561.0px" width="16" height="16" viewBox="0 0 16 16" ><path d="M6.500 4.500L10 8 6.500 11.500" fill="none" stroke="#8c9097" stroke-width="2" stroke-linecap="round" stroke-linejoin="round"/></svg>
<svg class="ic" style="left:44.0px;top:561.0px" width="16" height="16" viewBox="0 0 16 16" ><circle cx="8" cy="8" r="5" fill="none" stroke="#fc7f7f" stroke-width="2"/></svg>
<div class="t " style="left:66px;top:559px;color:#dfe1e4;font-size:14.8px;">Foes</div>
<svg class="ic" style="left:263.5px;top:561.0px" width="16" height="16" viewBox="0 0 16 16" ><path d="M8 1.8C4.2 1.800 1.200 4.400.6 8c.6 3.600 3.600 6.200 7.400 6.200s6.800-2.600 7.400-6.200C14.800 4.400 11.800 1.800 8 1.800z" fill="#e0e0e0"/><circle cx="8" cy="8" r="3.700" fill="#22252b"/><circle cx="8" cy="8" r="1.9" fill="#e0e0e0"/></svg>
<div class="b " style="left:22px;top:598px;width:12px;height:1px;background:#3e434a;"></div>
<svg class="ic" style="left:26.0px;top:590.0px" width="16" height="16" viewBox="0 0 16 16" ><path d="M6.500 4.500L10 8 6.500 11.500" fill="none" stroke="#8c9097" stroke-width="2" stroke-linecap="round" stroke-linejoin="round"/></svg>
<svg class="ic" style="left:44.0px;top:590.0px" width="16" height="16" viewBox="0 0 16 16" ><circle cx="8" cy="8" r="5" fill="none" stroke="#fc7f7f" stroke-width="2"/></svg>
<div class="t " style="left:66px;top:588px;color:#dfe1e4;font-size:14.8px;">Flowers</div>
<svg class="ic" style="left:263.5px;top:590.0px" width="16" height="16" viewBox="0 0 16 16" ><path d="M8 1.8C4.2 1.800 1.200 4.400.6 8c.6 3.600 3.600 6.200 7.400 6.200s6.800-2.600 7.400-6.200C14.800 4.400 11.800 1.800 8 1.800z" fill="#e0e0e0"/><circle cx="8" cy="8" r="3.700" fill="#22252b"/><circle cx="8" cy="8" r="1.9" fill="#e0e0e0"/></svg>
<div class="b " style="left:22px;top:627px;width:18px;height:1px;background:#3e434a;"></div>
<svg class="ic" style="left:44.0px;top:619.0px" width="16" height="16" viewBox="0 0 16 16" ><circle cx="8" cy="8" r="5" fill="none" stroke="#e0e0e0" stroke-width="2"/></svg>
<div class="t " style="left:66px;top:617px;color:#dfe1e4;font-size:14.8px;">DemoPage</div>
<svg class="ic" style="left:263.5px;top:619.0px" width="16" height="16" viewBox="0 0 16 16" ><path d="M6 1C4.9 1 4 1.9 4 3v7H2v2.2C2 13.7 3 15 4.5 15H10c1.1 0 2-.9 2-2V5h2.5V3c0-1.1-.9-2-2-2zm0 1.4h5.2c-.2.4-.2.8-.2 1.2V6H9v6.6c0 .6-.4 1-1 1s-1-.4-1-1V10H5.4V3c0-.3.3-.6.6-.6z" fill="#e0e0e0"/><path d="M6 1C4.9 1 4 1.9 4 3v7H2v2.5C2 13.9 3.1 15 4.5 15H10c1.1 0 2-.9 2-2V5h3V3c0-1.1-.9-2-2-2z" fill="#e0e0e0"/></svg>
<svg class="ic" style="left:239.5px;top:619.0px" width="16" height="16" viewBox="0 0 16 16" ><path d="M1 6.500h14V14a1 1 0 0 1-1 1H2a1 1 0 0 1-1-1zM5 9l3 3.200L11 9z" fill="#e0e0e0" fill-rule="evenodd"/><path d="M1 5.500V3.200l2-.4.800 2.200zM4.500 2.500l2-.4.900 2.500-2 .5zM8 1.800l2-.4.900 2.500-2 .5zM11.500 1.100l2-.4L14.800 3.500l-2.300.6z" fill="#e0e0e0"/></svg>
<div class="b" style="left:12px;top:645px;width:276px;height:10px;overflow:hidden"><div class="t" style="left:54px;top:0px;color:#dfe1e4;font-size:14.800px">StageMusic</div><svg class="ic" style="left:32px;top:3px" width="16" height="16" viewBox="0 0 16 16"><path d="M1 5h3l4-4v14l-4-4H1z" fill="#fc7f7f"/></svg></div>
<div class="b " style="left:22px;top:656px;width:18px;height:0px;background:#3e434a;"></div>
<div class="b " style="left:8px;top:663px;width:292px;height:409px;background:#3b4146;border-radius:3px"></div>
<div class="b " style="left:8px;top:663px;width:292px;height:29px;background:#2a2d33;border-radius:3px 3px 0 0"></div>
<div class="b " style="left:8px;top:663px;width:92px;height:29px;background:#3b4146;border-top:2px solid #6b69d6;box-sizing:border-box;border-radius:3px 0 0 0"></div>
<div class="t " style="left:19px;top:668px;color:#dfe1e4;font-size:14.8px;">FileSystem</div>
<svg class="ic" style="left:284.0px;top:670.0px" width="16" height="16" viewBox="0 0 16 16" ><g fill="#7f848b"><circle cx="8" cy="2.5" r="1.8"/><circle cx="8" cy="8" r="1.8"/><circle cx="8" cy="13.5" r="1.8"/></g></svg>
<svg class="ic" style="left:14.0px;top:705.0px" width="16" height="16" viewBox="0 0 16 16" ><path d="M10 1.5L5.5 8l4.500 6.500" fill="none" stroke="#e0e0e0" stroke-width="2" stroke-linecap="round" stroke-linejoin="round"/></svg>
<svg class="ic" style="left:33.0px;top:705.0px" width="16" height="16" viewBox="0 0 16 16" ><path d="M6 1.5L10.500 8 6 14.500" fill="none" stroke="#6d7279" stroke-width="2" stroke-linecap="round" stroke-linejoin="round"/></svg>
<div class="b " style="left:52px;top:699px;width:216px;height:29px;background:#25282e;border-radius:3px"></div>
<div class="t " style="left:58px;top:703px;color:#dfe1e4;font-size:14.8px;">res://Main.tscn</div>
<div class="b " style="left:275px;top:705px;width:17px;height:17px;background:#e0e0e0;border-radius:1px"></div>
<div class="b " style="left:12px;top:734px;width:256.5px;height:28px;background:#25282e;border-radius:3px"></div>
<div class="t " style="left:18px;top:737.5px;color:#c8cbcf;font-size:14.8px;">Filter Files</div>
<svg class="ic" style="left:246.5px;top:740.0px" width="15" height="15" viewBox="0 0 16 16" ><path d="M6.5 1.5a5 5 0 1 0 2.9 9.1l4 4 1.5-1.5-4-4A5 5 0 0 0 6.5 1.5zm0 2a3 3 0 0 1 0 6 3 3 0 0 1 0-6z" fill="#e0e0e0"/></svg>
<svg class="ic" style="left:275.0px;top:739.5px" width="16" height="16" viewBox="0 0 16 16" ><path d="M4 1L1 5h2v6H1l3 4 3-4H5V5h2z" fill="#e0e0e0"/><path d="M9 2h6v2H9zM9 6h4.500v2H9zM9 10h3v2H9zM9 13.500h1.600v1.600H9z" fill="#e0e0e0"/></svg>
<div class="b " style="left:12px;top:768px;width:284px;height:298px;background:#22252b;border-radius:3px"></div>
<div class="b " style="left:21.5px;top:768px;width:2px;height:298px;background:#c9cbce;"></div>
<div class="b " style="left:288px;top:771px;width:5px;height:82px;background:#2f3338;border-radius:3px"></div>
<div class="b " style="left:288px;top:853px;width:5px;height:144px;background:#5a5f66;border-radius:3px"></div>
<div class="b " style="left:288px;top:997px;width:5px;height:66px;background:#2f3338;border-radius:3px"></div>
<div class="b " style="left:24px;top:784px;width:4px;height:1px;background:#3e434a;"></div>
<svg class="ic" style="left:26.0px;top:776.0px" width="16" height="16" viewBox="0 0 16 16" ><path d="M6.500 4.500L10 8 6.500 11.500" fill="none" stroke="#8c9097" stroke-width="2" stroke-linecap="round" stroke-linejoin="round"/></svg>
<svg class="ic" style="left:44.0px;top:776.0px" width="16" height="16" viewBox="0 0 16 16" ><path d="M2 2a1 1 0 0 0-1 1v10a1 1 0 0 0 1 1h12a1 1 0 0 0 1-1V6a1 1 0 0 0-1-1H9L7.500 2.600A1.200 1.200 0 0 0 6.500 2z" fill="#8d89dc"/></svg>
<div class="t " style="left:66px;top:774px;color:#dfe1e4;font-size:14.8px;">Environment</div>
<div class="b " style="left:24px;top:813px;width:4px;height:1px;background:#3e434a;"></div>
<svg class="ic" style="left:26.0px;top:805.0px" width="16" height="16" viewBox="0 0 16 16" ><path d="M6.500 4.500L10 8 6.500 11.500" fill="none" stroke="#8c9097" stroke-width="2" stroke-linecap="round" stroke-linejoin="round"/></svg>
<svg class="ic" style="left:44.0px;top:805.0px" width="16" height="16" viewBox="0 0 16 16" ><path d="M2 2a1 1 0 0 0-1 1v10a1 1 0 0 0 1 1h12a1 1 0 0 0 1-1V6a1 1 0 0 0-1-1H9L7.500 2.600A1.200 1.200 0 0 0 6.500 2z" fill="#8d89dc"/></svg>
<div class="t " style="left:66px;top:803px;color:#dfe1e4;font-size:14.8px;">icons</div>
<div class="b " style="left:24px;top:842px;width:4px;height:1px;background:#3e434a;"></div>
<svg class="ic" style="left:26.0px;top:834.0px" width="16" height="16" viewBox="0 0 16 16" ><path d="M6.500 4.500L10 8 6.500 11.500" fill="none" stroke="#8c9097" stroke-width="2" stroke-linecap="round" stroke-linejoin="round"/></svg>
<svg class="ic" style="left:44.0px;top:834.0px" width="16" height="16" viewBox="0 0 16 16" ><path d="M2 2a1 1 0 0 0-1 1v10a1 1 0 0 0 1 1h12a1 1 0 0 0 1-1V6a1 1 0 0 0-1-1H9L7.500 2.600A1.200 1.200 0 0 0 6.500 2z" fill="#8d89dc"/></svg>
<div class="t " style="left:66px;top:832px;color:#dfe1e4;font-size:14.8px;">JumpingPad</div>
<div class="b " style="left:24px;top:871px;width:4px;height:1px;background:#3e434a;"></div>
<svg class="ic" style="left:26.0px;top:863.0px" width="16" height="16" viewBox="0 0 16 16" ><path d="M6.500 4.500L10 8 6.500 11.500" fill="none" stroke="#8c9097" stroke-width="2" stroke-linecap="round" stroke-linejoin="round"/></svg>
<svg class="ic" style="left:44.0px;top:863.0px" width="16" height="16" viewBox="0 0 16 16" ><path d="M2 2a1 1 0 0 0-1 1v10a1 1 0 0 0 1 1h12a1 1 0 0 0 1-1V6a1 1 0 0 0-1-1H9L7.500 2.600A1.200 1.200 0 0 0 6.500 2z" fill="#8d89dc"/></svg>
<div class="t " style="left:66px;top:861px;color:#dfe1e4;font-size:14.8px;">Level</div>
<div class="b " style="left:24px;top:900px;width:4px;height:1px;background:#3e434a;"></div>
<svg class="ic" style="left:26.0px;top:892.0px" width="16" height="16" viewBox="0 0 16 16" ><path d="M6.500 4.500L10 8 6.500 11.500" fill="none" stroke="#8c9097" stroke-width="2" stroke-linecap="round" stroke-linejoin="round"/></svg>
<svg class="ic" style="left:44.0px;top:892.0px" width="16" height="16" viewBox="0 0 16 16" ><path d="M2 2a1 1 0 0 0-1 1v10a1 1 0 0 0 1 1h12a1 1 0 0 0 1-1V6a1 1 0 0 0-1-1H9L7.500 2.600A1.200 1.200 0 0 0 6.500 2z" fill="#8d89dc"/></svg>
<div class="t " style="left:66px;top:890px;color:#dfe1e4;font-size:14.8px;">Player</div>
<div class="b " style="left:24px;top:929px;width:4px;height:1px;background:#3e434a;"></div>
<svg class="ic" style="left:26.0px;top:921.0px" width="16" height="16" viewBox="0 0 16 16" ><path d="M6.500 4.500L10 8 6.500 11.500" fill="none" stroke="#8c9097" stroke-width="2" stroke-linecap="round" stroke-linejoin="round"/></svg>
<svg class="ic" style="left:44.0px;top:921.0px" width="16" height="16" viewBox="0 0 16 16" ><path d="M2 2a1 1 0 0 0-1 1v10a1 1 0 0 0 1 1h12a1 1 0 0 0 1-1V6a1 1 0 0 0-1-1H9L7.500 2.600A1.200 1.200 0 0 0 6.500 2z" fill="#8d89dc"/></svg>
<div class="t " style="left:66px;top:919px;color:#dfe1e4;font-size:14.8px;">shared</div>
<div class="b " style="left:24px;top:958px;width:18px;height:1px;background:#3e434a;"></div>
<svg class="ic" style="left:44.0px;top:950.0px" width="16" height="16" viewBox="0 0 16 16" ><path d="M6.800 1l-.4 2-1 .4L3.700 2.300 2.300 3.700l1.100 1.700-.4 1L1 6.800v2.400l2 .4.400 1-1.100 1.700 1.400 1.400 1.700-1.100 1 .4.400 2h2.400l.4-2 1-.4 1.700 1.100 1.400-1.400-1.100-1.700.4-1 2-.4V6.800l-2-.4-.4-1 1.100-1.700-1.400-1.400-1.700 1.100-1-.4-.4-2zM8 6a2 2 0 0 1 0 4 2 2 0 0 1 0-4z" fill="#e0e0e0" fill-rule="evenodd"/></svg>
<div class="t " style="left:66px;top:948px;color:#dfe1e4;font-size:14.8px;">debug_test_grenade_path.gd</div>
<div class="b " style="left:24px;top:987px;width:18px;height:1px;background:#3e434a;"></div>
<svg class="ic" style="left:44.0px;top:979.0px" width="16" height="16" viewBox="0 0 16 16" ><path d="M1 6.500h14V14a1 1 0 0 1-1 1H2a1 1 0 0 1-1-1z" fill="#e0e0e0"/><path d="M1 5.500V3.200l2-.4.800 2.200zM4.500 2.500l2-.4.900 2.500-2 .5zM8 1.800l2-.4.900 2.500-2 .5zM11.500 1.100l2-.4L14.800 3.500l-2.300.6z" fill="#e0e0e0"/></svg>
<div class="t " style="left:66px;top:977px;color:#dfe1e4;font-size:14.8px;">debug_test_grenade_path.tscn</div>
<div class="b " style="left:24px;top:1016px;width:18px;height:1px;background:#3e434a;"></div>
<svg class="ic" style="left:44.0px;top:1008.0px" width="16" height="16" viewBox="0 0 16 16" ><path d="M6.800 1l-.4 2-1 .4L3.700 2.300 2.300 3.700l1.100 1.700-.4 1L1 6.800v2.400l2 .4.400 1-1.100 1.700 1.400 1.400 1.700-1.100 1 .4.400 2h2.400l.4-2 1-.4 1.700 1.100 1.400-1.400-1.100-1.700.4-1 2-.4V6.800l-2-.4-.4-1 1.100-1.700-1.400-1.400-1.700 1.100-1-.4-.4-2zM8 6a2 2 0 0 1 0 4 2 2 0 0 1 0-4z" fill="#e0e0e0" fill-rule="evenodd"/><path d="M2 10.500h12V15H2z" fill="#22252b"/><path d="M3 11.200l1.600 1.400 1.600-1.400v3.600H5v-1.600l-.4.400-.4-.4v1.600H3zM7 11.200h2.200v1H8v.4h1v1H8v1.200H7zM10 11.200h3.200v1h-1v2.600h-1.200v-2.600h-1z" fill="#e0e0e0"/></svg>
<div class="t " style="left:66px;top:1006px;color:#dfe1e4;font-size:14.8px;">export_presets.cfg</div>
<div class="b " style="left:24px;top:1045px;width:18px;height:1px;background:#3e434a;"></div>
<svg class="ic" style="left:44.0px;top:1037.0px" width="16" height="16" viewBox="0 0 16 16" ><path d="M6.800 1l-.4 2-1 .4L3.700 2.300 2.300 3.700l1.100 1.700-.4 1L1 6.800v2.400l2 .4.400 1-1.100 1.700 1.400 1.400 1.700-1.100 1 .4.400 2h2.400l.4-2 1-.4 1.700 1.100 1.400-1.400-1.100-1.700.4-1 2-.4V6.800l-2-.4-.4-1 1.100-1.700-1.400-1.400-1.700 1.100-1-.4-.4-2zM8 6a2 2 0 0 1 0 4 2 2 0 0 1 0-4z" fill="#e0e0e0" fill-rule="evenodd"/></svg>
<div class="t " style="left:66px;top:1035px;color:#dfe1e4;font-size:14.8px;">FullScreenHandler.gd</div>
<div class="b " style="left:24px;top:1065px;width:18px;height:1px;background:#3e434a;"></div>
<div class="b " style="left:46px;top:1064px;width:10px;height:1.5px;background:#8eef97;"></div>
<div class="b " style="left:305px;top:74px;width:1191px;height:30px;background:#2a2d33;border-radius:3px 3px 0 0"></div>
<div class="b " style="left:305px;top:74px;width:117px;height:30px;background:#3b4146;border-top:2px solid #6b69d6;box-sizing:border-box;border-radius:3px 0 0 0"></div>
<svg class="ic" style="left:316.0px;top:81.5px" width="16" height="16" viewBox="0 0 16 16" ><circle cx="8" cy="8" r="5" fill="none" stroke="#fc7f7f" stroke-width="2"/></svg>
<div class="t " style="left:336px;top:79.5px;color:#dfe1e4;font-size:14.8px;">Main(*)</div>
<svg class="ic" style="left:396.5px;top:83.0px" width="13" height="13" viewBox="0 0 16 16" ><path d="M3 3l10 10M13 3L3 13" stroke="#e0e0e0" stroke-width="2" stroke-linecap="round"/></svg>
<svg class="ic" style="left:432.5px;top:81.5px" width="16" height="16" viewBox="0 0 16 16" ><circle cx="8" cy="8" r="5" fill="none" stroke="#e0e0e0" stroke-width="2"/></svg>
<div class="t " style="left:453px;top:79.5px;color:#8f949b;font-size:14.8px;">DemoPage</div>
<svg class="ic" style="left:547.0px;top:81.5px" width="16" height="16" viewBox="0 0 16 16" ><path d="M8 1.500v13M1.500 8h13" stroke="#8a8f96" stroke-width="1.600"/></svg>
<svg class="ic" style="left:1474.0px;top:81.5px" width="16" height="16" viewBox="0 0 16 16" ><path d="M1.500 1.500h5L4.800 3.200 7 5.400 5.400 7 3.200 4.800 1.500 6.500zM14.500 1.500v5L12.800 4.800 10.600 7 9 5.400l2.200-2.200L9.500 1.500zM1.500 14.500v-5l1.700 1.700L5.400 9 7 10.600 4.800 12.800l1.700 1.700zM14.500 14.500h-5l1.700-1.700L9 10.600 10.600 9l2.200 2.200 1.700-1.700z" fill="#e0e0e0"/></svg>
<div class="b " style="left:305px;top:104px;width:1191px;height:38px;background:#3b4146;"></div>
<div class="b " style="left:309px;top:108px;width:28px;height:30px;background:#20222c;border-radius:3px"></div>
<svg class="ic" style="left:315.0px;top:115.5px" width="16" height="16" viewBox="0 0 16 16" ><path d="M2.500 1.500l4 13 2-5 5-2z" fill="#7b78e8"/><path d="M8 8l5.500 5.500" stroke="#7b78e8" stroke-width="2.200"/></svg>
<svg class="ic" style="left:355.0px;top:115.5px" width="16" height="16" viewBox="0 0 16 16" ><path d="M8 0.500L5.200 3.500h5.600zM8 15.500L5.200 12.500h5.600zM0.500 8L3.500 5.200v5.600zM15.500 8L12.500 5.200v5.600z" fill="#e0e0e0"/><path d="M8 3v10M3 8h10" stroke="#e0e0e0" stroke-width="1.800"/><circle cx="8" cy="8" r="2.600" fill="#e0e0e0"/><circle cx="8" cy="8" r="1.100" fill="#3b4146"/></svg>
<svg class="ic" style="left:386.5px;top:115.5px" width="16" height="16" viewBox="0 0 16 16" ><path d="M3.800 12.500A6 6 0 1 1 12.200 12.500" fill="none" stroke="#e0e0e0" stroke-width="2"/><path d="M0.800 10.500h5.500L3.500 14.500z" fill="#e0e0e0"/><circle cx="8" cy="8.500" r="2.300" fill="#e0e0e0"/></svg>
<svg class="ic" style="left:419.0px;top:115.5px" width="16" height="16" viewBox="0 0 16 16" ><path d="M9 1h6v6l-2.200-2.200-2.500 2.500-1.600-1.600 2.500-2.500zM7 15H1V9l2.200 2.200 2.500-2.500 1.600 1.600-2.500 2.500z" fill="#e0e0e0"/><circle cx="8" cy="8" r="1.800" fill="#e0e0e0"/></svg>
<svg class="ic" style="left:458.5px;top:115.5px" width="16" height="16" viewBox="0 0 16 16" ><path d="M1.500 1.500h11.500v6l-2-1.600V3.500H3.500v2h5v2h-5v2h3.500v2H3.500v2H7v2H1.500z" fill="#e0e0e0"/><path d="M8.500 7.500l2 8 1.500-3 3.500-.5z" fill="#e0e0e0"/></svg>
<svg class="ic" style="left:491.0px;top:115.5px" width="16" height="16" viewBox="0 0 16 16" ><path d="M8 1a4 4 0 0 0-4 4v2H2.500v8h11V7H12V5a4 4 0 0 0-4-4zm0 2a2 2 0 0 1 2 2v2H6V5a2 2 0 0 1 2-2zm-1 7h2v3H7z" fill="#e0e0e0" fill-rule="evenodd"/></svg>
<svg class="ic" style="left:523.0px;top:115.5px" width="16" height="16" viewBox="0 0 16 16" ><path d="M1 1h3v3H1zM12 1h3v3h-3zM1 12h3v3H1zM12 12h3v3h-3z" fill="#e0e0e0"/><path d="M6 3h5v5H8v3H3V6h3z" fill="#8a8f96"/><path d="M7 7h6v6H7z" fill="#b0b4b9" opacity=".9"/><path d="M5 1.500h6v1.200H5zM13.300 5h1.200v6h-1.200zM5 13.300h6v1.200H5zM1.500 5h1.200v6H1.500z" fill="#e0e0e0" opacity=".0"/></svg>
<svg class="ic" style="left:563.0px;top:115.5px" width="16" height="16" viewBox="0 0 16 16" ><path d="M8 .8L1.200 4v8L8 15.200 14.800 12V4zM8 3l4 1.900-4 1.900-4-1.900zM9 8.700l3.800-1.800v4L9 12.700z" fill="#e0e0e0" fill-rule="evenodd"/></svg>
<svg class="ic" style="left:596.0px;top:115.5px" width="16" height="16" viewBox="0 0 16 16" ><path d="M1 1h2v2H1zM1 5h2v2H1zM5 1h2v2H5zM1 9h2v2H1zM9 1h2v2H9z" fill="#e0e0e0"/><path d="M6 15v-4a4 4 0 0 1 8 0v4h-2.400v-4a1.600 1.600 0 0 0-3.200 0v4z" fill="#e0e0e0"/></svg>
<svg class="ic" style="left:634.0px;top:115.5px" width="16" height="16" viewBox="0 0 16 16" ><path d="M4.500 2a3 3 0 0 0-2.600 4.500A2 2 0 0 0 1 8.200V12a2 2 0 0 0 2 2h6a2 2 0 0 0 2-2v-.5l3.500 2V6.700L11 8.700v-.5a2 2 0 0 0-.5-1.400A3 3 0 0 0 9.500 2 3 3 0 0 0 7 3.300 3 3 0 0 0 4.500 2z" fill="#b05a5a"/></svg>
<svg class="ic" style="left:675.0px;top:115.5px" width="16" height="16" viewBox="0 0 16 16" ><g fill="#8f949a" opacity="1"><circle cx="8" cy="8" r="3.200"/><circle cx="8" cy="1.800" r="1.100"/><circle cx="8" cy="14.200" r="1.100"/><circle cx="1.800" cy="8" r="1.100"/><circle cx="14.200" cy="8" r="1.100"/><circle cx="3.600" cy="3.600" r="1.100"/><circle cx="12.400" cy="3.600" r="1.100"/><circle cx="3.600" cy="12.400" r="1.100"/><circle cx="12.400" cy="12.400" r="1.100"/></g></svg>
<svg class="ic" style="left:707.0px;top:115.5px" width="16" height="16" viewBox="0 0 16 16" ><g fill="none" stroke="#8f949a" stroke-width="1.700"><circle cx="8" cy="8" r="6.200"/><path d="M1.800 8h12.400M8 1.800c-3 2-3 10.400 0 12.400M8 1.800c3 2 3 10.400 0 12.400"/></g></svg>
<svg class="ic" style="left:738.5px;top:115.5px" width="16" height="16" viewBox="0 0 16 16" ><g fill="#e0e0e0"><circle cx="8" cy="2.5" r="1.9"/><circle cx="8" cy="8" r="1.9"/><circle cx="8" cy="13.5" r="1.9"/></g></svg>
<div class="b " style="left:342px;top:108px;width:1px;height:30px;background:#4a5057;"></div>
<div class="b " style="left:446px;top:108px;width:1px;height:30px;background:#4a5057;"></div>
<div class="b " style="left:550px;top:108px;width:1px;height:30px;background:#4a5057;"></div>
<div class="b " style="left:622px;top:108px;width:1px;height:30px;background:#4a5057;"></div>
<div class="b " style="left:662px;top:108px;width:1px;height:30px;background:#4a5057;"></div>
<div class="b " style="left:766px;top:108px;width:1px;height:30px;background:#4a5057;"></div>
<div class="b " style="left:905px;top:108px;width:1px;height:30px;background:#4a5057;"></div>
<div class="t " style="left:779px;top:113.5px;color:#dfe1e4;font-size:14.8px;">Transform</div>
<div class="t " style="left:863px;top:113.5px;color:#dfe1e4;font-size:14.8px;">View</div>
<div class="b" id="vp" style="left:305px;top:142px;width:1191px;height:884px;background:#6b69d6">
<svg width="1189" height="881" viewBox="306 144 1189 881">
<defs>
<linearGradient id="bg" x1="0" y1="144" x2="0" y2="1024" gradientUnits="userSpaceOnUse">
<stop offset="0" stop-color="#98cdf0"/><stop offset="0.177" stop-color="#a5d4f1"/><stop offset="0.2875" stop-color="#b9dff3"/>
<stop offset="0.314" stop-color="#add8f2"/><stop offset="0.344" stop-color="#95c9ef"/><stop offset="0.382" stop-color="#77baee"/><stop offset="0.419" stop-color="#5aaef0"/><stop offset="0.458" stop-color="#4daaf2"/><stop offset="0.495" stop-color="#49abf4"/><stop offset="0.575" stop-color="#46adf5"/><stop offset="0.8" stop-color="#47b0f7"/><stop offset="1" stop-color="#49b2f8"/>
</linearGradient>
<linearGradient id="hz" x1="307" y1="0" x2="1494" y2="0" gradientUnits="userSpaceOnUse"><stop offset="0" stop-color="#fff" stop-opacity=".06"/><stop offset="0.5" stop-color="#fff" stop-opacity="0"/><stop offset="1" stop-color="#1a60c0" stop-opacity=".08"/></linearGradient>
<pattern id="dots" width="61" height="23" patternUnits="userSpaceOnUse"><path d="M2 3h4M14 8h5M30 2h3M41 11h5M52 5h4M8 15h4M22 19h5M36 17h3M48 21h4M57 14h3M26 11h2" stroke="#d8eefc" stroke-width="1" opacity=".6"/></pattern>
<linearGradient id="dfade" x1="0" y1="450" x2="0" y2="760" gradientUnits="userSpaceOnUse"><stop offset="0" stop-color="#fff" stop-opacity="0"/><stop offset="0.25" stop-color="#fff" stop-opacity=".7"/><stop offset="0.6" stop-color="#fff" stop-opacity=".6"/><stop offset="1" stop-color="#fff" stop-opacity="0"/></linearGradient>
<mask id="dm" maskUnits="userSpaceOnUse" x="307" y="144" width="1187" height="880"><rect x="307" y="450" width="1187" height="310" fill="url(#dfade)"/></mask>
<linearGradient id="wfade" x1="0" y1="470" x2="0" y2="1024" gradientUnits="userSpaceOnUse">
<stop offset="0" stop-color="#fff" stop-opacity="0"/><stop offset="0.25" stop-color="#fff" stop-opacity="0.35"/><stop offset="0.5" stop-color="#fff" stop-opacity="0.8"/><stop offset="1" stop-color="#fff" stop-opacity="1"/>
</linearGradient>
<mask id="wm" maskUnits="userSpaceOnUse" x="307" y="144" width="1187" height="880"><rect x="307" y="470" width="1187" height="560" fill="url(#wfade)"/></mask>
<filter id="bl" x="-20%" y="-50%" width="140%" height="200%"><feGaussianBlur stdDeviation="1.400"/></filter>
<filter id="bl3" x="-20%" y="-20%" width="140%" height="140%"><feGaussianBlur stdDeviation="3"/></filter>
</defs>
<rect x="306" y="144" width="1189" height="881" fill="url(#bg)"/>
<g>
<ellipse cx="380.5" cy="237.0" rx="74.6" ry="4.5" fill="#fbfcfe" opacity="0.95" transform="rotate(3.1 380.5 237.0)" filter="url(#bl)"/>
<ellipse cx="415.0" cy="230.0" rx="35.1" ry="4.0" fill="#fbfcfe" opacity="0.95" transform="rotate(3.3 415.0 230.0)" filter="url(#bl)"/>
<ellipse cx="447.0" cy="251.0" rx="43.0" ry="2.0" fill="#fbfcfe" opacity="0.8" transform="rotate(-1.3 447.0 251.0)" filter="url(#bl)"/>
<ellipse cx="377.5" cy="280.5" rx="27.5" ry="1.8" fill="#fbfcfe" opacity="0.8" transform="rotate(3.1 377.5 280.5)" filter="url(#bl)"/>
<ellipse cx="456.5" cy="288.5" rx="23.5" ry="1.8" fill="#fbfcfe" opacity="0.8" transform="rotate(3.7 456.5 288.5)" filter="url(#bl)"/>
<ellipse cx="318.5" cy="276.0" rx="11.5" ry="1.5" fill="#fbfcfe" opacity="0.7" transform="rotate(5.0 318.5 276.0)" filter="url(#bl)"/>
<ellipse cx="652.5" cy="201.5" rx="69.5" ry="6.5" fill="#fbfcfe" opacity="0.95" transform="rotate(2.1 652.5 201.5)" filter="url(#bl)"/>
<ellipse cx="670.0" cy="208.0" rx="30.0" ry="4.0" fill="#fbfcfe" opacity="0.95" transform="rotate(1.9 670.0 208.0)" filter="url(#bl)"/>
<ellipse cx="668.0" cy="237.0" rx="22.0" ry="5.5" fill="#fbfcfe" opacity="0.95" transform="rotate(2.6 668.0 237.0)" filter="url(#bl)"/>
<ellipse cx="577.0" cy="271.0" rx="31.0" ry="2.0" fill="#fbfcfe" opacity="0.85" transform="rotate(0.0 577.0 271.0)" filter="url(#bl)"/>
<ellipse cx="746.0" cy="263.0" rx="54.0" ry="4.0" fill="#fbfcfe" opacity="0.95" transform="rotate(-1.1 746.0 263.0)" filter="url(#bl)"/>
<ellipse cx="815.0" cy="263.0" rx="25.0" ry="2.0" fill="#fbfcfe" opacity="0.8" transform="rotate(0.0 815.0 263.0)" filter="url(#bl)"/>
<ellipse cx="725.5" cy="284.5" rx="42.5" ry="2.8" fill="#fbfcfe" opacity="0.95" transform="rotate(0.7 725.5 284.5)" filter="url(#bl)"/>
<ellipse cx="773.5" cy="300.0" rx="19.5" ry="1.5" fill="#fbfcfe" opacity="0.7" transform="rotate(0.0 773.5 300.0)" filter="url(#bl)"/>
<ellipse cx="715.0" cy="296.0" rx="15.0" ry="1.5" fill="#fbfcfe" opacity="0.6" transform="rotate(0.0 715.0 296.0)" filter="url(#bl)"/>
<ellipse cx="630.0" cy="286.0" rx="10.0" ry="1.5" fill="#fbfcfe" opacity="0.6" transform="rotate(0.0 630.0 286.0)" filter="url(#bl)"/>
<ellipse cx="1037.5" cy="227.0" rx="66.5" ry="5.0" fill="#fbfcfe" opacity="0.95" transform="rotate(-1.7 1037.5 227.0)" filter="url(#bl)"/>
<ellipse cx="1065.0" cy="219.0" rx="25.0" ry="3.5" fill="#fbfcfe" opacity="0.95" transform="rotate(0.0 1065.0 219.0)" filter="url(#bl)"/>
<ellipse cx="970.0" cy="251.0" rx="20.0" ry="3.5" fill="#fbfcfe" opacity="0.95" transform="rotate(0.0 970.0 251.0)" filter="url(#bl)"/>
<ellipse cx="956.0" cy="285.0" rx="56.0" ry="2.5" fill="#fbfcfe" opacity="0.9" transform="rotate(0.0 956.0 285.0)" filter="url(#bl)"/>
<ellipse cx="1080.0" cy="278.0" rx="20.0" ry="1.5" fill="#fbfcfe" opacity="0.7" transform="rotate(0.0 1080.0 278.0)" filter="url(#bl)"/>
<ellipse cx="1100.0" cy="288.5" rx="20.0" ry="1.5" fill="#fbfcfe" opacity="0.7" transform="rotate(-1.4 1100.0 288.5)" filter="url(#bl)"/>
<ellipse cx="1248.5" cy="296.5" rx="23.5" ry="1.8" fill="#fbfcfe" opacity="0.8" transform="rotate(-1.2 1248.5 296.5)" filter="url(#bl)"/>
<ellipse cx="1302.5" cy="287.0" rx="12.5" ry="1.5" fill="#fbfcfe" opacity="0.7" transform="rotate(0.0 1302.5 287.0)" filter="url(#bl)"/>
<ellipse cx="1344.5" cy="271.0" rx="15.5" ry="1.5" fill="#fbfcfe" opacity="0.8" transform="rotate(0.0 1344.5 271.0)" filter="url(#bl)"/>
<ellipse cx="1401.0" cy="279.5" rx="39.0" ry="2.0" fill="#fbfcfe" opacity="0.85" transform="rotate(-2.2 1401.0 279.5)" filter="url(#bl)"/>
<ellipse cx="1371.0" cy="208.0" rx="49.8" ry="6.5" fill="#fbfcfe" opacity="0.95" transform="rotate(-10.4 1371.0 208.0)" filter="url(#bl)"/>
<ellipse cx="1432.5" cy="195.0" rx="43.7" ry="7.5" fill="#fbfcfe" opacity="0.9" transform="rotate(-13.2 1432.5 195.0)" filter="url(#bl)"/>
<ellipse cx="1450.5" cy="173.0" rx="46.2" ry="4.5" fill="#fbfcfe" opacity="0.6" transform="rotate(-10.0 1450.5 173.0)" filter="url(#bl)"/>
<ellipse cx="1370.0" cy="220.5" rx="30.2" ry="2.5" fill="#fbfcfe" opacity="0.7" transform="rotate(-6.7 1370.0 220.5)" filter="url(#bl)"/>
</g>
<g mask="url(#wm)" stroke="#b4e0fb" fill="none" stroke-linecap="round">
<path d="M1443 644l-22 -3M1443 644l15 5M1417 643l4 -2M1417 643l20 7M1458 649l-21 1M1343 624l-7 -4M973 637l-16 1M973 637l7 7M980 644l-4 3M978 635l-5 2M978 635l-18 -6M960 629l-5 -1M991 656l-15 2M991 656l15 7M1006 663l-18 4M993 653l-17 -6M993 653l-2 3M1010 664l-0 11M1010 664l11 -1M1032 667l-11 -4M1032 667l-16 9M1016 676l-6 -1M1010 664l-4 -1M1010 675l-16 0M950 623l5 5M950 623l-1 0M470 619l20 -1M470 619l-2 5M490 618l-8 5M468 624l14 -1M410 625l25 -2M410 625l1 -5M435 623l1 -0M436 623l3 -7M439 616l-28 4M1343 624l2 0M1345 624l-6 7M1301 633l29 7M1309 642l19 -0M1330 640l-2 2M1336 640l-6 0M1336 640l-1 -6M1336 620l2 -1M1417 643l-8 -1M1421 641l-9 -4M1409 642l-21 -7M1388 635l10 -0M1412 637l-14 -2M1443 644l-1 -4M1442 640l-17 -5M1425 635l-1 -1M1412 637l12 -3M300 645l12 1M326 637l-26 8M326 637l21 -0M347 637l3 1M350 638l-7 3M312 646l31 -5M1309 642l-9 3M1300 645l-9 -2M1072 645l8 1M1032 667l1 -0M1021 663l2 -8M1023 655l18 1M1033 667l11 -1M1044 666l3 -8M1047 658l-6 -2M1075 635l-22 2M1053 637l1 4M1072 645l-9 0M1063 645l-9 -4M978 635l5 -0M980 644l13 -0M993 644l5 -4M998 640l-15 -5M999 652l2 -4M999 652l22 3M1001 648l15 -3M1021 655l2 -8M1023 647l-7 -2M993 653l6 -1M993 644l8 4M1023 655l-2 -0M1010 640l-12 -0M1010 640l6 5M1033 647l4 -5M1033 647l-10 -0M1037 642l-16 -6M1010 640l11 -4M1052 686l1 2M1052 686l-6 -5M1046 691l-26 -4M1046 691l7 -3M1044 681l2 0M1044 681l-17 -1M1027 680l-7 7M1033 667l11 14M1016 676l11 4M1009 690l4 -0M1020 687l-7 3M993 676l16 14M1052 686l33 -0M1044 666l16 3M1046 681l22 -5M1068 676l-8 -7M1086 681l-1 5M1086 681l-9 -3M1068 676l9 2M1066 661l-19 -3M1066 661l7 2M1060 669l13 -6M470 619l-3 -0M468 624l-8 3M467 619l-5 0M462 619l-15 4M460 627l-13 -4M435 623l-24 8M436 623l10 -0M411 631l12 1M423 632l11 -2M434 630l12 -7M474 630l14 -4M474 630l-2 0M488 626l-6 -3M460 627l-4 3M472 630l-16 0M434 630l17 1M447 623l-1 -0M451 631l5 -1M490 618l6 -1M467 619l15 -7M482 612l16 -2M1207 674l12 -3M1246 683l0 0M1246 683l25 10M1222 694l5 -11M1227 683l19 0M948 615l6 -4M948 615l19 3M968 613l-7 -2M968 613l3 4M967 618l4 -1M950 623l8 -1M958 622l9 -4M1025 614l9 6M1025 614l-0 -0M1032 613l-7 1M1227 683l-2 -0M1225 683l-30 -1M1218 694l-23 -12M1439 658l-8 -5M1439 658l5 2M1444 660l26 5M1435 652l31 6M1435 652l-4 1M1470 665l4 -4M1466 658l8 3M1458 649l12 2M1470 651l-4 7M1437 650l-2 2M1504 664l-30 -3M1503 670l-13 4M1490 674l-1 -1M1489 673l-19 -8M1470 651l1 0M1510 664l-39 -13M1344 611l-4 2M308 651l4 -5M308 651l-43 6M308 651l2 1M310 652l-23 8M504 645l-14 7M504 645l-16 -1M488 644l-13 5M475 649l7 4M482 653l8 -1M410 625l-11 3M411 631l0 -0M399 628l12 3M401 620l1 0M401 620l-21 8M411 620l-9 0M380 628l7 2M399 628l-12 2M380 628l-17 1M363 629l-16 8M350 638l24 -2M387 630l-13 6M401 620l-8 -1M363 629l-6 -1M393 619l-22 4M357 628l14 -5M1333 647l-5 -5M1333 647l-2 3M1300 645l6 3M1306 648l25 2M1219 671l12 2M1232 666l-1 7M1207 674l18 9M1246 683l1 -2M1231 673l16 8M1255 656l3 4M1247 663l11 -3M1071 654l-5 2M1071 654l-10 -7M1066 656l-20 -4M1061 647l-15 3M1046 652l-0 -2M1085 650l-3 5M1085 650l-5 -4M1082 655l-11 -1M1063 645l-2 2M1066 661l-0 -5M1041 656l5 -4M1033 647l13 3M1037 642l17 -1M1043 633l-6 -0M1043 633l10 -4M1037 633l-7 -9M1030 624l22 3M1053 637l-10 -4M1022 634l15 -1M1022 634l-1 1M1021 636l0 -1M1034 620l-6 3M1028 623l2 1M1082 655l15 6M1077 678l19 -11M1073 663l21 2M1094 665l2 2M1097 661l1 1M1094 665l4 -3M1098 662l12 -0M423 632l-9 5M451 631l-17 6M434 637l-20 0M411 631l-24 6M391 638l-4 -1M391 638l15 1M414 637l-8 2M492 640l-25 3M492 640l-4 4M475 649l-10 0M465 649l2 -6M480 634l5 -0M480 634l-35 9M485 634l-19 9M445 643l0 1M466 643l-21 1M475 612l-18 3M474 608l-32 7M457 615l-15 0M442 615l-0 0M462 619l-5 -4M482 612l-7 -0M439 616l3 -1M515 651l-25 1M474 630l6 4M485 634l5 -0M490 634l10 -4M492 640l10 -3M467 643l-1 0M490 634l12 3M1025 614l-9 -5M992 614l2 0M992 614l-10 -3M1003 609l-5 5M998 614l-4 0M968 613l14 -2M971 617l0 0M971 617l21 -3M1025 614l-14 1M1011 615l-13 -1M1271 693l17 -7M1288 686l6 2M1157 688l-21 2M1157 688l15 3M1517 658l-38 -7M1508 652l-29 -1M1471 651l4 -1M1475 650l4 1M1442 640l29 2M1475 650l-4 -8M1409 642l-12 2M1431 653l-33 -6M1397 644l1 3M1489 673l-8 2M1444 660l5 7M1481 675l-29 -7M1449 667l3 1M1414 660l-0 1M1414 660l25 -2M1414 661l6 2M1449 667l-29 -4M1338 619l19 0M1340 613l16 6M1356 619l1 0M1344 611l15 2M1356 619l3 -6M1419 618l24 3M1419 618l-4 2M1415 620l9 3M1424 623l20 2M1444 625l-1 -4M1359 613l8 -0M1367 613l1 -0M1368 613l2 -2M1490 674l42 9M321 655l-34 7M321 655l-5 7M316 662l-29 6M474 663l2 0M474 663l-12 4M476 663l16 6M462 667l-17 9M445 676l30 -1M492 669l-7 4M475 675l10 -2M391 638l-21 9M370 647l8 1M406 639l-10 7M378 648l18 -2M374 636l4 1M387 637l-1 -0M378 637l8 -0M370 647l-13 1M386 637l-29 11M393 619l1 -1M371 623l-6 -3M365 620l19 -4M384 616l10 2M402 620l28 -8M394 618l19 -6M384 616l0 -1M384 615l10 -3M326 637l-1 -1M357 628l-12 1M345 629l-20 7M290 637l20 -3M292 641l21 -5M310 634l3 2M325 636l-12 0M312 617l-0 -0M312 617l-1 -0M312 617l2 5M314 622l-29 6M311 617l-34 10M311 617l-26 3M1255 656l33 2M1258 660l32 7M1290 667l8 -1M1288 658l10 8M1290 667l0 0M1290 667l29 14M1317 670l-16 -4M1317 670l4 3M1321 673l-2 8M1298 666l3 0M1316 684l5 11M1316 684l5 -1M1321 683l20 3M1342 687l-1 -1M1308 683l-14 5M1308 683l8 1M1290 667l-10 9M1319 681l2 2M1280 676l28 7M1321 673l22 7M1343 680l-2 6M1366 693l-24 -6M1331 659l-0 -0M1331 659l-16 2M1331 659l-24 -7M1315 661l0 0M1315 661l-20 -7M1307 652l-12 2M1306 648l1 4M1331 650l18 7M1349 657l-18 2M1288 654l7 0M1288 654l-0 4M1301 666l14 -5M1275 650l13 4M1247 663l32 13M1247 663l-8 3M1239 666l26 12M1279 676l-9 2M1270 678l-5 0M1247 663l0 -0M1280 676l-1 -0M1232 666l7 -0M1247 681l18 -3M1288 686l-18 -8M971 617l13 5M994 614l2 8M984 622l12 -0M1096 667l2 1M1098 668l31 4M434 639l-33 7M434 639l7 2M441 642l-37 6M441 642l-0 -1M404 648l-3 -2M434 637l0 2M396 646l5 0M472 630l-31 11M445 643l-4 -1M471 659l2 -2M471 659l-45 8M473 657l-16 -0M426 667l-4 -3M422 664l35 -7M473 657l9 -4M465 649l-20 4M457 657l-12 -4M445 644l-3 10M445 644l-37 10M408 654l22 3M430 657l12 -3M445 644l0 -0M445 653l-3 1M331 688l1 -1M331 688l31 3M362 691l16 -12M378 679l-2 -1M332 687l29 -9M376 678l-15 -0M442 615l-3 -4M1176 689l13 -1M1176 689l-10 -15M1189 688l1 -7M1195 682l-5 -1M1395 651l-13 1M1395 651l-1 -3M1394 648l-27 -5M1382 652l0 -0M1382 652l-22 -4M1367 643l-15 0M1360 648l-8 -5M1414 660l-19 -9M1414 661l-18 -1M1396 660l-14 -8M1398 647l-4 1M1336 640l16 3M1333 647l27 4M1360 651l0 -3M1363 639l12 -3M1363 639l-23 -7M1340 632l-0 -1M1340 631l17 1M1357 632l18 3M1375 635l0 1M1397 644l-22 -8M1367 643l-4 -4M1335 634l5 -2M1339 631l1 -0M1354 626l-9 -2M1354 626l3 6M1368 628l11 6M1368 628l-14 -2M1379 634l-4 1M1379 634l9 1M1502 693l-19 -8M1458 692l3 -8M1461 684l22 1M1529 690l-46 -10M1483 685l0 -5M1481 675l-1 3M1483 680l-3 -2M1452 668l-15 4M1480 678l-43 -6M1420 663l11 8M1437 672l-6 -1M1357 619l15 3M1367 613l11 7M1372 622l6 -2M1398 620l-30 -7M1398 620l-1 1M1378 620l19 1M1426 627l-2 -4M1426 627l-18 -1M1415 620l-8 -0M1407 620l-9 0M1408 626l-11 -5M1407 620l-26 -9M1413 615l9 -2M1413 615l-31 -4M1407 610l15 3M1419 618l-6 -3M1472 609l20 5M1460 611l21 5M1492 614l0 1M1481 616l11 -1M1423 613l-0 -6M1423 613l14 2M1437 615l13 -0M1427 608l20 5M1447 613l3 2M1422 613l1 -0M1443 621l4 -1M1447 620l-10 -5M1492 614l8 -0M318 686l3 -8M304 681l17 -3M332 687l-14 -1M346 673l-18 3M346 673l17 -1M328 676l-7 2M363 672l-2 6M323 669l5 7M323 669l-20 4M411 681l21 -1M411 681l-3 -5M408 676l18 -8M443 676l-11 4M443 676l-11 -8M426 668l6 0M362 691l29 -3M378 679l30 -3M391 688l20 -7M445 676l-2 0M475 675l-21 9M433 684l21 0M433 684l-1 -4M462 667l-30 1M471 659l3 4M426 667l-0 1M511 664l-8 3M503 667l-11 2M476 663l26 -6M408 654l-3 0M404 648l-5 6M405 654l-6 -0M378 648l-14 6M364 654l20 2M399 654l-15 2M333 665l18 3M333 665l5 -2M338 663l26 -1M351 668l13 -6M323 669l10 -4M346 673l5 -5M316 662l24 -1M340 661l-2 2M340 661l5 -3M345 658l19 -4M384 656l-15 5M369 661l-5 1M343 651l13 -3M343 651l-17 2M356 648l-2 -3M354 645l-12 -0M342 645l-22 6M326 653l-6 -2M345 658l-2 -7M357 648l-1 -0M321 655l5 -2M378 637l-24 8M343 641l-1 4M310 652l10 -1M384 615l-21 0M363 615l8 -3M363 615l-6 2M351 612l-9 2M342 614l1 2M357 617l-14 -1M312 617l30 -3M314 622l3 -1M343 616l-26 5M345 629l-1 -1M310 634l8 -4M344 628l-26 2M291 631l24 -3M315 628l3 2M976 624l5 -0M976 624l-1 2M981 624l12 6M975 626l11 7M993 630l-5 3M986 633l2 -0M958 622l18 2M984 622l-3 2M960 629l15 -3M983 635l3 -2M1021 635l-33 -2M999 622l3 6M999 622l17 0M1016 622l8 1M1024 623l-10 7M1014 630l-12 -2M996 622l3 0M993 630l9 -2M1011 615l5 7M1028 623l-4 0M1022 634l-8 -4M1097 682l26 7M1097 682l10 -7M1107 675l20 4M1127 679l3 10M1130 689l-5 0M1123 689l2 0M1086 681l11 1M1098 668l9 7M1137 676l-10 3M1136 690l-6 -1M420 664l-0 -0M420 664l-14 3M420 664l-31 -0M406 667l-43 5M389 664l-12 3M363 672l14 -5M422 664l-2 -0M430 657l-10 7M376 678l30 -11M405 654l-16 10M363 672l0 0M369 661l8 6M1458 611l-11 2M1426 627l17 5M1444 625l14 4M1443 632l12 -1M1458 629l-3 2M1454 621l-7 -1M1454 621l19 9M1458 629l15 1M1471 642l1 -0M1503 648l-31 -6M1425 635l19 -2M1444 633l26 8M1472 642l-2 -1M1386 690l-0 -1M1386 689l26 1M1377 626l17 3M1377 626l-4 -4M1373 622l34 4M1394 629l14 1M1408 630l-1 -4M1368 628l9 -2M1398 635l-4 -6M1372 622l1 0M1408 626l-1 0M1424 634l-16 -4M1444 633l-1 -1M1459 622l-5 -1M1459 622l19 -0M1450 615l27 4M1477 619l1 3M1481 616l2 2M1477 619l6 -1M1491 630l7 -2M1491 630l-32 -8M1478 622l20 6M1492 615l18 4M433 684l-17 9M466 692l-4 -5M462 687l-6 -0M490 679l-5 -6M490 679l-28 8M454 684l2 3M280 615l25 -3M305 612l2 -0M354 621l-6 2M354 621l0 -3M348 623l-30 4M354 618l-31 5M323 623l-5 4M365 620l-11 1M344 628l4 -5M357 617l-3 1M315 628l3 -1M317 621l6 2M1511 643l-26 -4M1514 641l-28 -10M1486 631l-3 0M1483 631l1 7M1484 638l1 1M1470 641l15 -2M1490 631l31 5M1490 631l-4 0M1490 631l1 -1M1473 630l10 1M1455 631l29 7M1331 659l9 5M1315 661l25 9M1340 664l0 6M1343 680l21 -3M1386 689l-21 -12M1364 677l1 0M1317 670l23 0M1364 677l-24 -7M1340 670l0 0M1360 651l7 5M1349 657l6 1M1355 658l12 -2M1396 660l-8 -0M1382 652l-8 5M1388 660l-14 -3M1367 656l7 1M1412 690l-6 -9M1365 677l8 -1M1406 681l-33 -5M1483 618l19 4M522 675l-17 5M505 680l-2 3M525 686l-19 -1M506 685l-3 -2M490 679l15 1M471 692l32 -9M495 695l11 -10M515 693l10 -7M312 617l2 -2M353 609l-39 6M305 612l10 2M314 615l1 -1M1453 692l-26 -8M1406 681l3 -1M1427 684l-18 -4M1461 684l-27 -8M1427 684l7 -8M1431 671l-3 2M1428 673l6 3M315 614l30 -8M1400 671l1 -1M1400 671l-28 0M1365 663l34 6M1365 663l-1 4M1399 669l2 1M1364 667l8 4M1409 680l-9 -9M1428 673l-27 -3M1373 676l-1 -5M1355 658l10 5M1388 660l11 9M1340 664l24 3" stroke-width="0.9" opacity=".8"/>
<path d="M1497 769l-11 8M1497 769l-40 -17M1457 752l-26 3M1431 755l29 17M1460 772l26 5M1486 777l18 12M1475 803l22 -9M1475 803l-38 -17M1437 786l11 -8M1448 778l49 16M1483 809l51 16M1483 809l-8 -6M1447 775l1 3M1447 775l13 -3M1438 729l39 10M1438 729l-4 -4M1434 725l3 -1M1437 724l36 3M1473 727l15 10M1488 737l-11 2M1457 751l-26 -14M1457 751l32 -3M1489 748l-12 -9M1438 729l-10 6M1428 735l3 2M1483 809l-17 11M1466 820l0 0M1466 820l46 24M1364 732l-29 -7M1364 732l-14 15M1343 746l7 1M1343 746l-17 -18M1326 728l9 -3M802 759l18 18M820 777l-20 12M800 789l-32 -19M1407 738l-36 -9M1407 738l4 14M1407 751l4 1M1407 751l-42 -19M1365 732l6 -3M1428 735l-27 -8M1431 737l-24 1M1401 727l-30 2M1371 729l0 0M1457 751l0 1M1431 755l-20 -3M1401 757l46 18M1401 757l6 -6M1386 758l15 -1M1386 758l-36 -11M1364 732l1 -0M1489 748l36 11M1488 737l27 5M1231 801l16 1M1231 801l12 33M1274 832l-8 -18M1274 832l-4 8M1243 834l27 6M1266 814l-19 -12M1386 758l3 4M1437 786l-11 -1M1426 785l-37 -23M1466 820l-56 -27M1426 785l-18 3M1410 793l-2 -5M1437 824l29 -4M1437 824l-1 1M1436 825l46 27M1227 801l-33 -16M1227 801l4 0M1194 785l2 -14M1196 771l15 -2M1248 799l-1 3M1248 799l-28 -29M1220 770l-9 -1M1161 761l10 2M1161 761l-15 -10M1171 763l9 -17M1146 751l20 -10M1166 741l14 5M1196 771l-25 -8M1211 769l-21 -21M1190 748l-10 -2M1110 751l-14 -13M1110 751l-17 6M1071 741l25 -3M1071 741l-5 7M1093 757l-27 -9M1033 735l21 -4M1033 735l-11 -15M1039 720l-17 -0M1039 720l15 7M1054 727l-0 4M1127 718l32 1M1127 718l-7 10M1120 728l39 7M1165 729l-6 6M1165 729l1 -5M1166 724l-7 -5M606 814l2 16M606 814l21 -5M627 809l28 1M608 830l42 -3M655 810l-5 17M1398 799l0 -0M1398 799l-30 10M1398 799l-43 -16M1368 809l-13 -8M1355 801l-8 -16M1347 785l8 -2M1437 824l-39 -25M1410 793l-12 6M1373 816l43 10M1373 816l-5 -7M1436 825l-20 1M1356 778l24 0M1356 778l-33 -20M1329 755l-7 2M1329 755l42 14M1371 769l9 9M1322 757l1 1M1408 788l-28 -10M1355 783l1 -5M1313 774l10 -16M1313 774l34 11M1339 746l-10 9M1339 746l4 0M1389 762l-18 7M1416 826l24 23M1373 816l-3 3M1370 819l25 28M1310 807l-3 10M1310 807l52 11M1362 818l-30 17M1307 817l23 18M1330 835l2 0M1309 806l-47 -10M1309 806l1 1M1266 814l41 3M1262 796l-14 3M1370 819l-8 -1M1328 836l-54 -4M1328 836l2 -1M1069 705l27 9M1069 705l10 -6M1079 699l8 -1M1087 698l28 7M1096 714l20 -5M1115 705l1 4M1127 718l-11 -9M1159 719l-0 -4M1120 704l39 11M1120 704l-5 1M1068 705l-27 -11M1068 705l1 -0M1041 694l5 -3M1079 699l-26 -11M1032 704l-4 -8M1032 704l-25 4M1006 708l1 -0M1006 708l-8 -15M1028 696l-15 -6M998 693l11 -3M1061 708l7 -3M1061 708l-9 1M1052 709l-20 -5M1041 694l-13 2M1012 718l-5 -10M1012 718l10 2M1052 709l-13 11M992 726l20 -8M992 726l-24 -13M968 713l6 -7M974 706l32 2M1075 721l22 -5M1075 721l1 2M1076 723l24 9M1100 732l14 -1M1097 716l21 13M1118 729l-4 2M1061 708l14 13M1096 714l1 2M1054 727l22 -4M1071 741l-17 -10M1096 738l4 -6M1144 750l-30 -19M1144 750l-27 3M1117 753l-7 -2M1120 728l-2 1M1144 750l2 1M1159 735l7 6M1087 698l2 -3M1089 695l-4 -9M1165 729l40 12M1190 748l5 -2M1205 741l-10 5M1166 724l39 4M1205 728l11 10M1205 741l11 -3M1227 801l-27 14M1243 834l-13 -1M1200 815l30 18M1050 752l16 -4M1050 752l-1 0M1032 737l17 15M1032 737l1 -2M1049 752l-0 0M954 723l-11 8M954 723l36 6M949 736l33 -0M949 736l-6 -5M982 736l8 -7M992 726l-1 2M1032 737l-16 -1M1016 736l-25 -8M954 723l-1 -8M953 715l15 -2M991 728l-1 1M1276 708l29 5M1276 708l0 15M1305 713l-7 12M1276 723l14 4M1298 725l-8 2M1339 746l-45 -16M1326 728l-28 -3M1294 730l-4 -3M1264 703l10 -9M1264 703l-16 -2M1248 701l-6 -2M1242 699l4 -16M1274 694l-3 -1M1273 723l-32 -13M1273 723l3 0M1241 710l7 -9M1276 708l-12 -5M1222 694l20 5M1335 725l-12 -7M1305 713l5 -0M1323 718l-13 -5M1371 729l-14 -13M1323 718l34 -2M1294 730l-4 14M1273 723l-16 4M1257 727l-1 4M1290 744l-34 -13M1322 757l-24 -6M1290 744l8 7M1309 806l-12 -20M1262 796l6 -12M1297 786l-29 -2M1355 801l-57 -16M1297 786l1 -1M1220 770l14 -1M1268 784l-34 -15M1195 746l47 16M1234 769l8 -7M608 830l-17 19M650 827l-0 -0M606 814l-4 -1M559 839l21 -20M602 813l-22 6M742 780l10 15M742 780l-20 1M752 795l-17 13M735 808l-25 6M722 781l-21 10M710 814l-9 -23M627 809l33 -27M655 810l18 -9M660 782l22 12M673 801l9 -7M1222 694l-4 -0M1522 718l-30 -9M1535 711l-44 -12M1492 709l-1 -10M1502 693l-17 4M1491 699l-6 -2M1517 724l-39 -5M1519 737l-43 -13M1478 719l-5 1M1476 724l-3 -4M1467 712l11 7M1467 712l18 -5M1492 709l-7 -2M1473 727l3 -3M1423 707l10 5M1423 707l-1 -3M1433 712l40 8M1467 712l-28 -10M1422 704l17 -2M1437 724l-4 -12M742 780l6 -4M1417 707l-42 -11M1417 707l6 0M1422 704l-36 -14M1375 696l-8 -3M1386 690l-19 3M929 763l-23 12M929 763l-6 -13M896 766l2 -9M896 766l9 9M905 775l1 -0M898 757l25 -7M960 755l-16 -8M960 755l-16 11M944 747l-20 3M944 766l-15 -3M924 750l-1 -0M974 706l-3 -2M945 786l-13 26M945 786l-18 -3M927 783l-29 23M932 812l-19 2M913 814l-15 -8M944 766l12 17M906 775l21 8M956 783l-4 2M952 785l-7 1M905 775l-30 13M875 788l-2 2M873 790l18 15M891 805l7 1M1194 785l-18 2M1161 761l-20 14M1141 775l35 12M1117 753l18 22M1141 775l-6 -0M878 832l30 4M868 821l10 11M868 821l23 -16M913 814l-5 22M1049 752l-26 20M1049 752l-26 -0M1023 752l0 20M1016 736l-3 14M1023 752l-10 -2M1182 708l23 19M1182 708l41 8M1223 716l2 1M1225 717l-8 7M1205 727l12 -3M1205 728l0 -1M1159 715l10 -9M1176 706l-7 0M1176 706l6 2M1241 710l-14 -1M1227 709l-4 7M1257 727l-32 -10M1253 733l3 -2M1253 733l-36 -9M1120 704l0 0M1169 706l-13 -4M1120 704l36 -2M1298 751l-20 1M1253 733l-2 4M1278 752l-27 -15M1216 738l7 2M1223 740l28 -3M1274 694l30 7M1294 688l16 7M1310 695l-6 6M1310 713l0 -9M1304 701l6 3M1227 709l-21 -8M1218 694l-8 1M1206 701l4 -6M1176 706l9 -6M1206 701l-21 -1M1156 702l-20 -12M1185 700l-13 -9M543 751l2 14M543 751l33 0M575 760l-30 5M575 760l3 -2M576 751l2 7M398 827l-27 5M398 827l8 14M857 792l16 -2M857 792l-12 8M868 821l-21 -0M847 821l-2 -21M831 843l-3 -8M828 835l-35 -3M775 845l18 -13M847 821l-13 7M834 828l-6 7M778 798l0 18M778 798l21 -8M799 790l20 13M778 816l9 4M787 820l28 -9M819 803l-4 8M752 795l26 3M747 827l-12 -19M747 827l31 -11M800 789l-1 1M820 777l7 -1M857 792l-30 -16M845 800l-26 3M747 827l-3 3M744 830l19 18M793 832l-6 -12M834 828l-19 -17M1341 699l-20 -4M1341 699l1 -12M1310 695l11 -0M1366 693l-12 11M1354 704l-13 -5M952 785l21 24M932 812l16 5M948 817l25 -8M930 847l26 -16M948 817l8 14M1093 757l6 14M1050 752l12 13M1099 771l-21 -1M1062 765l16 5M1099 771l16 5M1076 793l-1 -1M1076 793l27 -0M1075 792l3 -22M1115 776l-12 17M1135 775l-6 2M1115 776l14 1M986 742l20 8M986 742l-20 13M1006 750l-7 12M999 762l-18 2M966 755l15 9M982 736l4 6M1013 750l-7 0M960 755l6 0M944 747l5 -11M1023 772l-24 -10M1023 772l0 -0M975 780l-19 3M975 780l6 -16M1273 755l-28 -1M1273 755l28 19M1301 774l-5 5M1296 779l-53 -17M1243 762l2 -8M1278 752l-5 3M1223 740l22 14M1313 774l-12 0M1298 785l-2 -6M1242 762l1 -0M559 839l-36 1M686 845l-23 -18M701 839l5 -23M706 816l-22 1M663 827l21 -10M650 827l13 -0M744 830l-31 9M710 814l-4 2M713 839l-12 -0M701 791l-19 3M673 801l11 16M1357 705l-4 6M1357 705l33 5M1390 721l-33 -8M1390 721l10 -7M1357 713l-4 -2M1400 714l-9 -4M1391 710l-1 -0M1354 704l3 1M1310 704l43 7M1375 696l15 14M1367 693l-1 -0M1401 727l-11 -6M1357 716l-0 -3M1434 725l-34 -11M1417 707l-26 3M1210 695l-21 -7M1172 691l4 -2M1485 707l-33 -10M1485 697l-27 -5M1458 692l-5 0M1453 692l-1 5M1439 702l1 -5M1440 697l12 -0M318 686l-36 8M351 699l7 -6M351 699l-24 9M327 708l-3 -9M358 693l-34 6M331 688l-24 11M307 699l-24 -0M362 691l-0 0M362 691l-4 2M324 699l-17 2M307 699l-0 2M321 711l-6 1M321 711l6 -3M315 712l-30 -0M307 701l-22 11M307 731l-6 1M307 731l23 -12M321 711l11 2M315 712l-28 13M330 719l2 -6M509 798l25 23M509 798l19 -8M528 790l29 -4M557 786l-4 19M553 805l-15 14M538 819l-4 2M582 776l-7 -16M582 776l-25 10M545 765l-16 5M529 770l-1 20M602 797l-49 8M602 797l2 -2M604 795l-12 -19M582 776l8 -0M590 776l2 -0M602 813l0 -16M580 819l-42 -0M525 826l-2 14M525 826l9 -5M403 745l12 -19M403 745l46 -13M415 726l6 -1M421 725l31 4M449 732l3 -3M398 827l25 -12M371 832l-13 -7M405 804l-47 21M405 804l18 -6M423 815l-0 -17M306 838l41 -13M347 825l6 0M358 825l-5 0M405 804l-49 -6M348 802l4 -3M348 802l-1 23M356 798l-4 1M306 838l-28 3M348 802l-79 30M282 809l55 -10M337 799l15 -1M352 798l-0 1M421 725l48 -14M452 729l12 -3M464 726l22 -15M469 711l17 0M415 726l-2 -1M428 711l-15 14M428 711l14 -5M469 711l-3 -7M442 706l24 -2M595 712l-32 8M561 711l0 8M563 720l-2 -1M533 711l-2 0M531 711l-10 15M521 726l40 -7M1089 695l34 -6M1120 704l5 -15M1072 792l-31 -13M1072 792l-18 12M1054 804l-44 -12M1028 778l-18 13M1028 778l13 1M1010 791l0 1M1075 792l-3 0M1062 765l-21 14M1076 793l23 29M1072 822l27 0M1072 822l-14 -7M1058 815l-4 -11M1029 819l29 -4M1029 819l-21 -16M1008 803l2 -11M975 780l35 11M1023 772l5 6M986 811l-13 -2M986 811l22 -8M1176 787l4 18M1129 777l17 22M1146 799l34 6M1200 815l-9 -2M1191 813l-11 -8M472 827l-25 5M472 827l15 4M438 837l9 -5M509 798l-37 29M509 798l0 -0M525 826l-38 5M406 841l32 -4M423 815l22 -0M445 815l2 17M1028 833l7 7M1028 833l-37 -4M991 829l-10 8M1072 822l-10 21M1029 819l-1 14M986 811l5 18M956 831l25 6M322 733l-26 18M322 733l25 -4M347 729l8 9M355 738l-26 12M329 750l-33 1M322 733l-15 -2M282 809l26 -21M337 799l-25 -11M312 788l-4 0M308 788l-18 -3M404 782l4 -5M404 782l26 2M408 777l48 -25M430 784l25 -9M455 775l7 -22M462 753l-6 -1M356 798l48 -16M423 798l-0 0M423 798l7 -14M397 766l26 -14M397 766l11 11M423 752l22 -4M445 748l6 0M451 748l5 4M487 749l-8 23M487 749l-25 4M479 772l-24 3M1440 697l-28 -7M391 688l0 5M416 693l-25 0M351 699l21 3M391 693l-19 9M332 713l38 -9M372 702l-2 2M604 795l45 -14M592 776l39 -4M631 772l18 9M660 782l-1 -2M659 780l-10 1M578 758l32 -10M590 776l50 -28M610 748l30 0M501 729l-41 15M501 729l-8 -3M460 744l17 -16M493 726l-16 2M445 748l4 -16M451 748l9 -4M464 726l13 2M505 714l-17 -3M505 714l-12 12M488 711l-2 0M543 751l-1 0M542 751l-30 8M529 770l-17 1M512 759l-9 8M512 771l-9 -4M514 729l-19 18M514 729l1 -0M515 729l28 8M543 737l-33 11M510 748l-15 -1M487 749l8 -2M501 729l13 -0M531 711l-26 3M521 726l-6 3M512 759l-2 -11M479 772l0 -0M479 772l24 -5M504 696l-7 11M504 696l11 -3M521 693l-6 0M521 693l-5 9M516 702l-19 5M495 695l9 1M495 695l-18 3M488 711l9 -4M466 704l11 -6M466 692l-22 7M456 687l-35 11M421 698l23 1M471 692l-5 0M471 692l6 6M442 706l2 -7M416 699l0 -6M416 699l5 -1M516 702l19 -2M533 711l9 -9M1170 825l-39 -16M1170 825l2 7M1172 832l-4 2M1168 834l-56 -7M1111 826l1 1M1111 826l18 -17M1129 809l2 -0M1146 799l-15 10M1191 813l-21 12M1119 842l-7 -15M1099 822l12 4M1103 793l26 16M403 745l-5 3M423 752l-25 -4M398 748l0 -0M403 709l-22 9M403 709l7 -7M410 702l-36 4M374 706l-12 9M362 715l5 5M367 720l14 -2M428 711l-25 -2M413 725l-10 2M403 727l-22 -9M416 699l-6 3M370 704l4 2M330 719l32 -4M347 729l20 -9M355 738l28 -5M383 733l20 -6M607 717l9 -0M583 727l30 4M583 727l-23 6M560 733l-2 2M581 740l30 -8M581 740l-22 -5M559 735l-1 -0M611 732l2 -1M607 717l-24 10M618 729l-5 2M618 729l3 -9M616 717l5 3M563 720l-3 13M543 737l15 -2M576 751l5 -11M610 748l1 -16M542 751l17 -16M621 720l33 -6M631 772l19 -16M640 748l8 -1M648 747l2 9M659 780l17 -12M650 756l26 12M455 808l7 -15M455 808l44 -11M499 797l-9 -8M490 789l-20 1M462 793l8 -3M445 815l10 -7M423 798l39 -5M509 798l-10 -1M512 771l-22 18M479 772l-9 18M838 751l1 20M862 748l0 16M839 771l23 -6M862 764l-0 1M827 776l12 -5M875 788l-13 -23M896 766l-34 -2M943 731l-21 -4M327 762l51 -14M327 762l0 -4M327 758l1 -1M328 757l46 -13M374 744l4 4M279 767l48 -9M289 781l37 -17M326 764l1 -2M329 750l-1 7M383 733l-9 11M398 748l-20 -0M387 753l-38 12M387 753l-13 18M349 765l3 10M352 775l10 -0M362 775l12 -4M326 764l23 1M398 748l-11 5M397 766l-23 5M312 788l40 -13M352 798l10 -23M656 744l-8 2M648 746l-9 -16M648 747l0 -1M618 729l21 1M898 757l-23 -12M924 750l-20 -14" stroke-width="1.700"/>
<path d="M1506 851l-24 1M1035 957l-41 17M1035 957l32 42M1006 1003l-12 -29M1006 1003l59 10M994 974l-0 0M1067 999l-2 14M1104 1051l-39 -38M996 1024l59 63M996 1024l10 -21M1485 871l-6 -5M1485 871l-14 2M1479 866l-39 -17M1471 873l-68 -13M1440 849l-45 -2M1395 847l-0 8M1403 860l-8 -5M1664 956l-179 -85M1482 852l-3 14M1441 897l56 20M1441 897l-5 -8M1436 889l32 -9M1497 917l-29 -37M1419 902l18 25M1419 902l22 -5M1378 854l17 1M1378 854l-20 26M1358 880l61 22M1403 860l33 29M1471 873l-3 7M1378 854l-46 -19M1270 840l8 5M1278 845l-1 21M1277 866l-56 -17M1230 833l-9 16M591 849l9 8M650 827l-19 28M600 857l31 -2M591 849l-26 3M565 852l-6 -13M1161 996l-25 43M1161 996l-31 -17M1111 984l19 -5M1111 984l13 55M1088 975l23 9M1088 975l-21 24M1327 846l-41 2M1327 846l28 33M1286 848l67 32M1355 879l-2 1M1328 836l-1 10M1278 845l8 3M1358 880l-3 -1M1277 866l11 21M1345 891l8 -11M1345 891l-48 -1M1288 887l9 3M1437 927l-45 7M1392 934l-3 -1M1389 933l-44 -42M854 852l24 -20M854 852l5 7M859 859l28 6M887 865l31 -12M908 836l11 15M919 851l-1 2M910 903l-24 -32M910 903l-40 16M886 871l-31 36M870 919l-15 -12M600 857l-22 26M549 860l16 -8M549 860l-16 30M533 890l45 -7M1088 975l-21 -29M1035 957l1 -1M1036 956l31 -10M1125 943l5 36M1125 943l-27 -21M1098 922l-24 8M1067 946l7 -16M1098 922l2 -10M1100 912l-49 -29M1016 902l58 28M1016 902l2 -4M1051 883l-33 15M887 865l-1 6M918 853l24 20M910 903l21 1M931 904l11 -31M1016 902l-14 4M1036 956l-37 -47M999 909l3 -3M289 1060l50 -64M237 1038l102 -42M375 902l-66 19M375 902l14 -28M309 921l52 -45M361 876l28 -2M341 867l30 -35M341 867l1 -0M342 867l64 -26M263 886l61 -18M272 914l66 -46M324 868l14 -0M309 921l-9 4M341 867l-3 1M361 876l-19 -9M1125 943l44 10M1161 996l26 3M1187 999l-18 -46M1115 899l-15 13M1115 899l30 4M1145 903l36 43M1169 953l12 -7M1145 903l28 -9M1198 947l-17 -1M1198 947l8 -30M1206 917l-33 -23M1389 933l-16 2M1297 890l16 23M1313 913l60 22M1689 1188l-326 -237M1689 1188l-297 -254M1363 951l10 -16M831 843l-29 21M802 864l-27 -19M854 852l-23 -9M763 848l12 -3M930 847l-11 4M1265 885l-14 15M1265 885l-50 -27M1251 900l-11 1M1240 901l-50 -28M1215 858l-25 15M1221 849l-8 5M1265 885l23 2M1215 858l-2 -4M996 1024l-38 19M994 974l-40 1M922 998l32 -23M922 998l34 44M859 859l-33 29M802 864l-5 13M797 877l29 11M549 860l-32 2M517 862l-18 12M499 874l17 23M533 890l-7 4M516 897l10 -3M517 862l-3 -14M514 848l9 -8M499 874l-32 10M467 884l8 -25M514 848l-39 11M686 845l15 -6M631 855l8 3M639 858l38 -6M677 852l9 -7M763 848l-20 18M797 877l-22 6M775 883l-32 -17M713 839l22 29M743 866l-8 2M677 852l2 14M679 866l46 7M735 868l-10 5M1112 856l7 -14M1112 856l61 26M1119 842l39 9M1158 851l28 22M1173 882l13 -9M1115 899l-21 -36M1094 863l18 -7M1173 894l0 -12M1206 917l26 4M1232 921l8 -20M1190 873l-4 -0M1094 863l-1 -1M1051 883l-1 -10M1050 873l43 -11M974 932l-42 21M974 932l-1 -10M973 922l-34 -11M939 911l-24 37M915 948l17 5M994 974l-20 -42M954 975l-22 -22M999 909l-26 13M931 904l8 7M942 873l25 1M967 874l35 32M871 941l10 16M871 941l-1 -22M881 957l34 -9M881 957l-3 21M922 998l-34 -9M888 989l-10 -11M313 857l40 -32M313 857l-24 1M289 858l17 -20M324 868l-11 -11M1187 999l1 0M1188 999l2 59M1291 993l-1 8M1291 993l-43 -27M1290 1001l-35 30M1248 966l-18 -0M1230 966l-3 44M1255 1031l-28 -21M1306 993l-15 0M1417 1146l-127 -145M1198 947l32 19M1256 939l-24 -18M1256 939l-8 27M1188 999l39 11M1300 935l-12 9M1300 935l9 -0M1309 935l30 15M1288 944l23 29M1339 950l22 34M1361 984l-50 -11M1256 939l32 5M1251 900l49 35M1313 913l-4 22M1363 951l-24 -1M1306 993l5 -20M812 1054l-3 -32M876 1048l-64 -28M809 1022l3 -2M784 1019l-21 10M784 1019l25 3M844 989l34 -11M844 989l-32 31M888 989l-12 59M855 907l-9 -3M826 888l2 4M846 904l-18 -12M775 883l-3 5M772 888l-49 13M725 873l-12 16M713 889l10 12M487 831l-21 26M438 837l-20 25M466 857l-30 9M436 866l-18 -4M475 859l-9 -2M389 874l29 -12M422 897l14 -31M422 897l27 -1M467 884l-18 12M422 897l-31 11M391 908l-16 -6M1025 857l10 -17M1025 857l-17 3M981 837l7 17M1008 860l-18 -4M990 856l-2 -2M1050 873l-25 -16M1062 843l31 19M1062 843l-27 -3M1018 898l-10 -38M930 847l58 7M967 874l23 -18M1213 854l-41 -22M1158 851l10 -17M639 974l-18 26M639 974l39 -31M639 1011l-18 -11M639 1011l31 -5M670 1006l17 -12M687 994l16 -48M678 943l25 3M594 954l45 20M594 954l-21 59M573 1013l48 -13M676 1070l-6 -64M622 1048l17 -37M732 1026l-6 -21M726 1005l-39 -11M589 900l-43 21M589 900l2 1M591 901l1 44M538 928l8 -7M538 928l-3 33M535 961l57 -16M578 883l11 17M526 894l20 27M639 858l-19 33M620 891l-29 10M662 927l14 -24M662 927l-33 5M629 932l2 -40M676 903l-13 -15M663 888l-32 4M594 954l-0 -9M594 945l35 -13M678 943l-16 -16M594 945l-2 -0M620 891l11 1M679 866l-16 22M713 889l-37 14M755 966l-37 -25M755 966l27 -1M782 965l13 -9M786 921l14 22M786 921l-21 -6M795 956l5 -7M765 915l-40 19M800 949l-0 -6M725 934l-7 7M726 1005l29 -39M703 946l15 -5M784 1019l-2 -54M844 989l-49 -33M846 904l-46 39M828 892l-42 29M772 888l-7 27M871 941l-71 8M723 901l2 33M457 1082l86 -66M560 1043l7 -26M543 1016l24 1M573 1013l-6 4M535 961l-12 10M514 1000l9 -29M514 1000l29 16M379 1035l5 -9M384 1026l77 -28M461 998l-16 35M514 1000l-53 33M523 971l-42 3M481 974l-20 24M384 1026l25 -51M481 974l-35 -14M409 975l37 -15M538 928l-64 9M446 960l28 -23M516 897l-28 16M474 937l14 -24M449 896l1 6M450 902l38 11M354 986l-25 -26M354 986l52 -12M406 974l6 -39M412 935l-47 -2M329 960l13 -13M365 933l-23 14M291 977l38 -17M339 996l15 -10M409 975l-3 -1M450 902l-38 33M391 908l-26 25M302 930l40 17" stroke-width="2.800" stroke="#bfe4fb"/>
</g>
<rect x="307" y="400" width="1187" height="624" fill="url(#hz)"/>
<rect x="307" y="450" width="1187" height="310" fill="url(#dots)" mask="url(#dm)"/>
<g stroke="#3d5f8c" stroke-width=".8" fill="none">
<path d="M305 428L2900 395" opacity="0.22"/>
<path d="M1496 428L-1500 395" opacity="0.22"/>
<path d="M305 438L2900 395" opacity="0.20"/>
<path d="M1496 438L-1500 395" opacity="0.20"/>
<path d="M305 451L2900 395" opacity="0.18"/>
<path d="M1496 451L-1500 395" opacity="0.18"/>
<path d="M305 467L2900 395" opacity="0.17"/>
<path d="M1496 467L-1500 395" opacity="0.17"/>
<path d="M305 485L2900 395" opacity="0.15"/>
<path d="M1496 485L-1500 395" opacity="0.15"/>
<path d="M305 506L2900 395" opacity="0.13"/>
<path d="M1496 506L-1500 395" opacity="0.13"/>
<path d="M305 529L2900 395" opacity="0.11"/>
<path d="M1496 529L-1500 395" opacity="0.11"/>
<path d="M305 555L2900 395" opacity="0.09"/>
<path d="M1496 555L-1500 395" opacity="0.09"/>
<path d="M305 583L2900 395" opacity="0.08"/>
<path d="M1496 583L-1500 395" opacity="0.08"/>
<path d="M305 614L2900 395" opacity="0.06"/>
<path d="M1496 614L-1500 395" opacity="0.06"/>
<path d="M305 648L2900 395" opacity="0.04"/>
<path d="M1496 648L-1500 395" opacity="0.04"/>
</g>
<path d="M307 662L500 647M947 614L1030 608M1350 585L1494 574.500" stroke="#e8466a" stroke-width="1.300"/>
<path d="M798 786L805 1024" stroke="#3f86e0" stroke-width="1.200" opacity=".7"/>
<polygon points="936.0,566.0 958.0,566.0 1152.0,694.0 1003.0,694.0 1001.0,671.0 953.0,629.0 938.0,585.0" fill="#2468d0" opacity=".14"/>
<polygon points="936.0,566.0 958.0,566.0 1010.0,600.0 953.0,629.0 938.0,585.0" fill="#1f5fc8" opacity=".4"/>
<polygon points="958.0,566.0 1152.0,694.0 1120.0,694.0 950.0,580.0" fill="#1f5fc8" opacity=".18"/>
<polygon points="578.0,392.0 1131.0,376.0 1131.0,560.0 578.0,560.0" fill="#817f77" />
<polygon points="640.0,417.0 664.0,410.0 700.0,420.5 691.0,445.0 652.0,441.5" fill="#6b706a" opacity=".45"/>
<polygon points="720.0,428.0 740.0,420.0 770.0,432.0 762.5,460.0 730.0,456.0" fill="#6b706a" opacity=".45"/>
<polygon points="800.0,414.0 828.0,405.0 870.0,418.5 859.5,450.0 814.0,445.5" fill="#6b706a" opacity=".45"/>
<polygon points="890.0,423.0 914.0,415.0 950.0,427.0 941.0,455.0 902.0,451.0" fill="#6b706a" opacity=".45"/>
<polygon points="960.0,410.0 982.0,400.0 1015.0,415.0 1006.8,450.0 971.0,445.0" fill="#6b706a" opacity=".45"/>
<polygon points="1030.0,419.0 1054.0,410.0 1090.0,423.5 1081.0,455.0 1042.0,450.5" fill="#6b706a" opacity=".45"/>
<polygon points="1090.0,412.0 1104.0,400.0 1125.0,418.0 1119.8,460.0 1097.0,454.0" fill="#6b706a" opacity=".45"/>
<polygon points="700.0,461.0 724.0,455.0 760.0,464.0 751.0,485.0 712.0,482.0" fill="#6b706a" opacity=".45"/>
<polygon points="900.0,467.0 928.0,460.0 970.0,470.5 959.5,495.0 914.0,491.5" fill="#6b706a" opacity=".45"/>
<polygon points="1000.0,468.0 1024.0,460.0 1060.0,472.0 1051.0,500.0 1012.0,496.0" fill="#6b706a" opacity=".45"/>
<polygon points="620.0,446.0 636.0,440.0 660.0,449.0 654.0,470.0 628.0,467.0" fill="#6b706a" opacity=".45"/>
<polygon points="579.0,388.0 620.0,383.0 700.0,380.0 800.0,377.0 960.0,373.0 1131.0,371.0 1132.0,384.0 960.0,387.0 800.0,392.0 700.0,397.0 640.0,400.0 578.0,399.0" fill="#46b85e" />
<polygon points="579.0,388.0 620.0,383.0 700.0,380.0 800.0,377.0 960.0,373.0 1131.0,371.0 1131.0,375.0 960.0,377.0 800.0,381.0 700.0,384.0 620.0,387.0 580.0,392.0" fill="#62cc65" stroke="#a6f2ee" stroke-width=".8" stroke-opacity=".55"/>
<rect x="1083.6" y="365.5" width="6.7" height="8.5" fill="#4a2f2b"/>
<polygon points="1087.0,343.6 1098.5,356.4 1108.0,368.3 1103.3,366.3 1098.7,369.2 1094.0,366.8 1089.3,369.6 1084.7,366.8 1080.0,369.2 1075.3,366.4 1070.7,368.6 1066.0,365.4 1075.5,356.4" fill="#1c5d44" />
<polygon points="1087.0,343.6 1097.5,356.0 1105.5,365.4 1101.4,363.8 1097.3,366.1 1093.2,364.5 1089.1,366.8 1084.9,364.9 1080.8,366.4 1076.7,364.1 1072.6,365.7 1068.5,363.4 1076.5,356.0" fill="#2b8457" />
<polygon points="1087.0,343.6 1089.5,356.4 1089.1,366.8 1084.9,364.9 1080.8,366.4 1076.7,364.1 1072.6,365.7 1068.5,363.4 1076.5,356.0" fill="#3aa167" />
<polygon points="1087.0,338.0 1097.4,348.9 1105.9,358.4 1101.2,356.6 1096.5,359.5 1091.7,357.2 1087.0,360.1 1082.3,357.6 1077.5,359.9 1072.8,356.6 1068.1,358.4 1076.6,348.9" fill="#1c5d44" />
<polygon points="1087.0,338.0 1096.5,348.5 1103.7,356.0 1099.5,354.5 1095.3,356.8 1091.2,355.3 1087.0,357.6 1082.8,355.3 1078.7,356.8 1074.5,354.5 1070.3,356.0 1077.5,348.5" fill="#2b8457" />
<polygon points="1087.0,338.0 1089.3,348.9 1087.0,357.6 1082.8,355.3 1078.7,356.8 1074.5,354.5 1070.3,356.0 1077.5,348.5" fill="#3aa167" />
<polygon points="1087.0,332.3 1096.2,341.4 1103.8,349.3 1099.0,346.9 1094.2,350.6 1089.4,347.9 1084.6,350.6 1079.8,347.4 1075.0,350.0 1070.2,347.1 1077.8,341.4" fill="#1c5d44" />
<polygon points="1087.0,332.3 1095.4,341.1 1101.8,346.7 1097.5,345.2 1093.3,347.6 1089.1,346.1 1084.9,348.1 1080.7,345.7 1076.5,347.1 1072.2,344.8 1078.6,341.1" fill="#2b8457" />
<polygon points="1087.0,332.3 1089.0,341.4 1089.1,346.1 1084.9,348.1 1080.7,345.7 1076.5,347.1 1072.2,344.8 1078.6,341.1" fill="#3aa167" />
<polygon points="1087.0,326.7 1094.9,333.9 1101.5,340.5 1096.6,338.2 1091.8,340.8 1087.0,339.7 1082.2,341.7 1077.4,338.5 1072.5,339.8 1079.1,333.9" fill="#1c5d44" />
<polygon points="1087.0,326.7 1094.2,333.6 1099.7,337.4 1095.5,336.0 1091.2,338.4 1087.0,337.0 1082.8,338.4 1078.5,336.0 1074.3,337.4 1079.8,333.6" fill="#2b8457" />
<polygon points="1087.0,326.7 1088.7,333.9 1087.0,337.0 1082.8,338.4 1078.5,336.0 1074.3,337.4 1079.8,333.6" fill="#3aa167" />
<polygon points="1087.0,321.0 1093.5,326.5 1098.9,331.1 1094.1,328.7 1089.4,331.9 1084.6,329.9 1079.9,331.4 1075.1,328.4 1080.5,326.5" fill="#1c5d44" />
<polygon points="1087.0,321.0 1092.9,326.1 1097.5,328.0 1093.3,326.8 1089.1,329.3 1084.9,327.4 1080.7,328.7 1076.5,326.1 1081.1,326.1" fill="#2b8457" />
<polygon points="1087.0,321.0 1088.4,326.5 1089.1,329.3 1084.9,327.4 1080.7,328.7 1076.5,326.1 1081.1,326.1" fill="#3aa167" />
<rect x="1056.0" y="361.8" width="8.0" height="12.2" fill="#4a2f2b"/>
<polygon points="1060.0,330.4 1073.8,348.8 1085.0,365.4 1079.4,361.8 1073.9,367.2 1068.3,363.6 1062.8,368.1 1057.2,364.5 1051.7,367.5 1046.1,363.2 1040.6,366.7 1035.0,362.0 1046.2,348.8" fill="#1c5d44" />
<polygon points="1060.0,330.4 1072.5,348.2 1082.0,361.6 1077.1,359.4 1072.2,362.6 1067.3,360.4 1062.4,363.6 1057.6,360.9 1052.7,363.1 1047.8,359.9 1042.9,362.1 1038.0,358.9 1047.5,348.2" fill="#2b8457" />
<polygon points="1060.0,330.4 1063.0,348.8 1062.4,363.6 1057.6,360.9 1052.7,363.1 1047.8,359.9 1042.9,362.1 1038.0,358.9 1047.5,348.2" fill="#3aa167" />
<polygon points="1060.0,322.3 1072.4,338.0 1082.5,352.9 1076.9,348.8 1071.3,353.6 1065.6,349.8 1060.0,355.0 1054.4,350.9 1048.7,353.0 1043.1,349.2 1037.5,351.5 1047.6,338.0" fill="#1c5d44" />
<polygon points="1060.0,322.3 1071.3,337.5 1079.8,348.2 1074.9,346.1 1069.9,349.4 1065.0,347.2 1060.0,350.5 1055.0,347.2 1050.1,349.4 1045.1,346.1 1040.2,348.2 1048.7,337.5" fill="#2b8457" />
<polygon points="1060.0,322.3 1062.7,338.0 1060.0,350.5 1055.0,347.2 1050.1,349.4 1045.1,346.1 1040.2,348.2 1048.7,337.5" fill="#3aa167" />
<polygon points="1060.0,314.2 1071.0,327.3 1080.0,338.8 1074.3,335.2 1068.6,340.6 1062.9,337.0 1057.1,340.2 1051.4,336.4 1045.7,340.2 1040.0,334.6 1049.0,327.3" fill="#1c5d44" />
<polygon points="1060.0,314.2 1070.0,326.8 1077.6,334.8 1072.6,332.8 1067.5,336.1 1062.5,334.1 1057.5,336.8 1052.5,333.4 1047.4,335.5 1042.4,332.1 1050.0,326.8" fill="#2b8457" />
<polygon points="1060.0,314.2 1062.4,327.3 1062.5,334.1 1057.5,336.8 1052.5,333.4 1047.4,335.5 1042.4,332.1 1050.0,326.8" fill="#3aa167" />
<polygon points="1060.0,306.1 1069.5,316.6 1077.2,325.4 1071.5,322.8 1065.7,326.7 1060.0,324.1 1054.3,326.4 1048.5,323.2 1042.8,325.5 1050.5,316.6" fill="#1c5d44" />
<polygon points="1060.0,306.1 1068.6,316.0 1075.1,321.5 1070.1,319.5 1065.0,323.0 1060.0,321.0 1055.0,323.0 1049.9,319.5 1044.9,321.5 1051.4,316.0" fill="#2b8457" />
<polygon points="1060.0,306.1 1062.1,316.6 1060.0,321.0 1055.0,323.0 1049.9,319.5 1044.9,321.5 1051.4,316.0" fill="#3aa167" />
<polygon points="1060.0,298.0 1067.8,305.8 1074.1,312.1 1068.5,309.7 1062.8,313.7 1057.2,309.7 1051.5,312.9 1045.9,308.0 1052.2,305.8" fill="#1c5d44" />
<polygon points="1060.0,298.0 1067.1,305.3 1072.4,308.1 1067.5,306.3 1062.5,309.9 1057.5,307.2 1052.5,309.0 1047.6,305.4 1052.9,305.3" fill="#2b8457" />
<polygon points="1060.0,298.0 1061.7,305.8 1062.5,309.9 1057.5,307.2 1052.5,309.0 1047.6,305.4 1052.9,305.3" fill="#3aa167" />
<rect x="882.0" y="365.0" width="6.1" height="9.0" fill="#4a2f2b"/>
<polygon points="885.0,341.9 895.5,355.4 904.0,368.3 899.8,365.9 895.6,368.6 891.3,366.6 887.1,369.0 882.9,366.1 878.7,368.8 874.4,366.1 870.2,368.6 866.0,364.7 874.5,355.4" fill="#1c5d44" />
<polygon points="885.0,341.9 894.5,355.0 901.7,364.9 898.0,363.2 894.3,365.6 890.6,364.0 886.9,366.4 883.1,364.3 879.4,366.0 875.7,363.6 872.0,365.2 868.3,362.8 875.5,355.0" fill="#2b8457" />
<polygon points="885.0,341.9 887.3,355.4 886.9,366.4 883.1,364.3 879.4,366.0 875.7,363.6 872.0,365.2 868.3,362.8 875.5,355.0" fill="#3aa167" />
<polygon points="885.0,335.9 894.4,347.5 902.1,357.6 897.9,355.8 893.6,359.3 889.3,356.6 885.0,359.6 880.7,356.9 876.4,359.2 872.1,355.2 867.9,357.8 875.6,347.5" fill="#1c5d44" />
<polygon points="885.0,335.9 893.6,347.1 900.1,355.0 896.3,353.4 892.5,355.8 888.8,354.2 885.0,356.7 881.2,354.2 877.5,355.8 873.7,353.4 869.9,355.0 876.4,347.1" fill="#2b8457" />
<polygon points="885.0,335.9 887.1,347.5 885.0,356.7 881.2,354.2 877.5,355.8 873.7,353.4 869.9,355.0 876.4,347.1" fill="#3aa167" />
<polygon points="885.0,329.9 893.3,339.6 900.2,347.7 895.8,346.3 891.5,348.7 887.2,347.1 882.8,350.0 878.5,346.6 874.2,348.6 869.8,345.3 876.7,339.6" fill="#1c5d44" />
<polygon points="885.0,329.9 892.6,339.2 898.4,345.1 894.5,343.6 890.7,346.1 886.9,344.6 883.1,346.6 879.3,344.1 875.5,345.6 871.6,343.1 877.4,339.2" fill="#2b8457" />
<polygon points="885.0,329.9 886.8,339.6 886.9,344.6 883.1,346.6 879.3,344.1 875.5,345.6 871.6,343.1 877.4,339.2" fill="#3aa167" />
<polygon points="885.0,324.0 892.2,331.7 898.1,338.7 893.7,335.7 889.4,339.5 885.0,337.0 880.6,339.6 876.3,336.0 871.9,338.0 877.8,331.7" fill="#1c5d44" />
<polygon points="885.0,324.0 891.5,331.3 896.5,335.3 892.7,333.8 888.8,336.4 885.0,335.0 881.2,336.4 877.3,333.8 873.5,335.3 878.5,331.3" fill="#2b8457" />
<polygon points="885.0,324.0 886.6,331.7 885.0,335.0 881.2,336.4 877.3,333.8 873.5,335.3 878.5,331.3" fill="#3aa167" />
<polygon points="885.0,318.0 890.9,323.8 895.7,328.8 891.4,326.2 887.1,329.6 882.9,327.1 878.6,328.8 874.3,325.6 879.1,323.8" fill="#1c5d44" />
<polygon points="885.0,318.0 890.4,323.4 894.5,325.4 890.7,324.1 886.9,326.8 883.1,324.8 879.3,326.1 875.5,323.4 879.6,323.4" fill="#2b8457" />
<polygon points="885.0,318.0 886.3,323.8 886.9,326.8 883.1,324.8 879.3,326.1 875.5,323.4 879.6,323.4" fill="#3aa167" />
<rect x="956.3" y="363.3" width="7.4" height="10.7" fill="#4a2f2b"/>
<polygon points="960.0,335.6 972.6,351.8 983.0,366.1 977.9,363.7 972.8,368.1 967.7,364.3 962.6,368.1 957.4,365.7 952.3,367.4 947.2,364.2 942.1,366.8 937.0,363.4 947.4,351.8" fill="#1c5d44" />
<polygon points="960.0,335.6 971.5,351.3 980.2,363.1 975.7,361.1 971.2,364.0 966.7,362.0 962.2,364.9 957.8,362.4 953.3,364.4 948.8,361.5 944.3,363.5 939.8,360.7 948.5,351.3" fill="#2b8457" />
<polygon points="960.0,335.6 962.8,351.8 962.2,364.9 957.8,362.4 953.3,364.4 948.8,361.5 944.3,363.5 939.8,360.7 948.5,351.3" fill="#3aa167" />
<polygon points="960.0,328.4 971.4,342.3 980.7,355.1 975.6,352.0 970.4,355.2 965.2,352.8 960.0,356.6 954.8,353.6 949.6,356.3 944.4,352.5 939.3,355.3 948.6,342.3" fill="#1c5d44" />
<polygon points="960.0,328.4 970.4,341.8 978.3,351.3 973.7,349.4 969.1,352.3 964.6,350.4 960.0,353.3 955.4,350.4 950.9,352.3 946.3,349.4 941.7,351.3 949.6,341.8" fill="#2b8457" />
<polygon points="960.0,328.4 962.5,342.3 960.0,353.3 955.4,350.4 950.9,352.3 946.3,349.4 941.7,351.3 949.6,341.8" fill="#3aa167" />
<polygon points="960.0,321.3 970.1,332.8 978.4,343.1 973.1,340.9 967.9,343.7 962.6,342.1 957.4,344.5 952.1,341.4 946.9,344.1 941.6,339.9 949.9,332.8" fill="#1c5d44" />
<polygon points="960.0,321.3 969.2,332.4 976.2,339.5 971.5,337.6 966.9,340.6 962.3,338.8 957.7,341.2 953.1,338.2 948.5,340.1 943.8,337.1 950.8,332.4" fill="#2b8457" />
<polygon points="960.0,321.3 962.2,332.8 962.3,338.8 957.7,341.2 953.1,338.2 948.5,340.1 943.8,337.1 950.8,332.4" fill="#3aa167" />
<polygon points="960.0,314.1 968.7,323.4 975.8,331.9 970.6,328.9 965.3,332.4 960.0,329.9 954.7,332.6 949.4,328.8 944.2,331.8 951.3,323.4" fill="#1c5d44" />
<polygon points="960.0,314.1 967.9,322.9 973.9,327.7 969.3,325.9 964.6,329.0 960.0,327.3 955.4,329.0 950.7,325.9 946.1,327.7 952.1,322.9" fill="#2b8457" />
<polygon points="960.0,314.1 961.9,323.4 960.0,327.3 955.4,329.0 950.7,325.9 946.1,327.7 952.1,322.9" fill="#3aa167" />
<polygon points="960.0,307.0 967.2,313.9 973.0,319.1 967.8,317.3 962.6,320.9 957.4,318.3 952.2,320.7 947.0,316.8 952.8,313.9" fill="#1c5d44" />
<polygon points="960.0,307.0 966.5,313.4 971.4,315.9 966.9,314.3 962.3,317.5 957.7,315.1 953.1,316.7 948.6,313.5 953.5,313.4" fill="#2b8457" />
<polygon points="960.0,307.0 961.6,313.9 962.3,317.5 957.7,315.1 953.1,316.7 948.6,313.5 953.5,313.4" fill="#3aa167" />
<rect x="1038.6" y="364.1" width="6.7" height="9.9" fill="#4a2f2b"/>
<polygon points="1042.0,338.4 1053.5,353.4 1063.0,366.7 1058.3,364.2 1053.7,367.6 1049.0,364.9 1044.3,368.9 1039.7,365.6 1035.0,367.9 1030.3,365.0 1025.7,368.0 1021.0,363.6 1030.5,353.4" fill="#1c5d44" />
<polygon points="1042.0,338.4 1052.5,353.0 1060.5,363.9 1056.4,362.1 1052.3,364.7 1048.2,362.9 1044.1,365.5 1039.9,363.3 1035.8,365.1 1031.7,362.5 1027.6,364.3 1023.5,361.6 1031.5,353.0" fill="#2b8457" />
<polygon points="1042.0,338.4 1044.5,353.4 1044.1,365.5 1039.9,363.3 1035.8,365.1 1031.7,362.5 1027.6,364.3 1023.5,361.6 1031.5,353.0" fill="#3aa167" />
<polygon points="1042.0,331.8 1052.4,344.7 1060.9,356.0 1056.2,354.3 1051.5,357.7 1046.7,354.3 1042.0,357.9 1037.3,354.5 1032.5,356.7 1027.8,354.0 1023.1,356.1 1031.6,344.7" fill="#1c5d44" />
<polygon points="1042.0,331.8 1051.5,344.2 1058.7,353.0 1054.5,351.2 1050.3,353.9 1046.2,352.1 1042.0,354.8 1037.8,352.1 1033.7,353.9 1029.5,351.2 1025.3,353.0 1032.5,344.2" fill="#2b8457" />
<polygon points="1042.0,331.8 1044.3,344.7 1042.0,354.8 1037.8,352.1 1033.7,353.9 1029.5,351.2 1025.3,353.0 1032.5,344.2" fill="#3aa167" />
<polygon points="1042.0,325.2 1051.2,335.9 1058.8,344.8 1054.0,343.4 1049.2,346.7 1044.4,343.6 1039.6,346.8 1034.8,343.9 1030.0,345.9 1025.2,342.5 1032.8,335.9" fill="#1c5d44" />
<polygon points="1042.0,325.2 1050.4,335.5 1056.8,342.1 1052.5,340.4 1048.3,343.1 1044.1,341.4 1039.9,343.7 1035.7,340.9 1031.5,342.6 1027.2,339.8 1033.6,335.5" fill="#2b8457" />
<polygon points="1042.0,325.2 1044.0,335.9 1044.1,341.4 1039.9,343.7 1035.7,340.9 1031.5,342.6 1027.2,339.8 1033.6,335.5" fill="#3aa167" />
<polygon points="1042.0,318.6 1049.9,327.1 1056.5,334.1 1051.6,332.7 1046.8,335.7 1042.0,333.1 1037.2,335.6 1032.4,332.4 1027.5,334.5 1034.1,327.1" fill="#1c5d44" />
<polygon points="1042.0,318.6 1049.2,326.7 1054.7,331.1 1050.5,329.5 1046.2,332.4 1042.0,330.8 1037.8,332.4 1033.5,329.5 1029.3,331.1 1034.8,326.7" fill="#2b8457" />
<polygon points="1042.0,318.6 1043.7,327.1 1042.0,330.8 1037.8,332.4 1033.5,329.5 1029.3,331.1 1034.8,326.7" fill="#3aa167" />
<polygon points="1042.0,312.0 1048.5,318.4 1053.9,323.7 1049.1,321.0 1044.4,325.4 1039.6,321.7 1034.9,324.4 1030.1,321.0 1035.5,318.4" fill="#1c5d44" />
<polygon points="1042.0,312.0 1047.9,317.9 1052.5,320.2 1048.3,318.7 1044.1,321.7 1039.9,319.5 1035.7,321.0 1031.5,318.0 1036.1,317.9" fill="#2b8457" />
<polygon points="1042.0,312.0 1043.4,318.4 1044.1,321.7 1039.9,319.5 1035.7,321.0 1031.5,318.0 1036.1,317.9" fill="#3aa167" />
<rect x="856.2" y="362.6" width="7.7" height="11.4" fill="#4a2f2b"/>
<polygon points="860.0,333.3 873.2,350.4 884.0,366.4 878.7,363.0 873.3,367.6 868.0,363.8 862.7,367.4 857.3,364.3 852.0,368.3 846.7,363.2 841.3,366.9 836.0,363.1 846.8,350.4" fill="#1c5d44" />
<polygon points="860.0,333.3 872.0,349.9 881.1,362.4 876.4,360.3 871.7,363.4 867.0,361.3 862.3,364.3 857.7,361.8 853.0,363.8 848.3,360.8 843.6,362.9 838.9,359.9 848.0,349.9" fill="#2b8457" />
<polygon points="860.0,333.3 862.9,350.4 862.3,364.3 857.7,361.8 853.0,363.8 848.3,360.8 843.6,362.9 838.9,359.9 848.0,349.9" fill="#3aa167" />
<polygon points="860.0,325.7 871.9,340.4 881.6,353.7 876.2,350.7 870.8,354.3 865.4,352.5 860.0,355.4 854.6,351.8 849.2,354.9 843.8,350.9 838.4,353.9 848.1,340.4" fill="#1c5d44" />
<polygon points="860.0,325.7 870.8,339.9 879.0,349.9 874.3,347.9 869.5,351.0 864.8,349.0 860.0,352.0 855.2,349.0 850.5,351.0 845.7,347.9 841.0,349.9 849.2,339.9" fill="#2b8457" />
<polygon points="860.0,325.7 862.6,340.4 860.0,352.0 855.2,349.0 850.5,351.0 845.7,347.9 841.0,349.9 849.2,339.9" fill="#3aa167" />
<polygon points="860.0,318.1 870.5,330.4 879.2,340.9 873.7,338.2 868.2,342.0 862.7,339.3 857.3,342.5 851.8,338.4 846.3,341.9 840.8,337.6 849.5,330.4" fill="#1c5d44" />
<polygon points="860.0,318.1 869.6,329.9 876.9,337.4 872.0,335.5 867.2,338.6 862.4,336.7 857.6,339.2 852.8,336.1 848.0,338.0 843.1,334.9 850.4,329.9" fill="#2b8457" />
<polygon points="860.0,318.1 862.3,330.4 862.4,336.7 857.6,339.2 852.8,336.1 848.0,338.0 843.1,334.9 850.4,329.9" fill="#3aa167" />
<polygon points="860.0,310.6 869.1,320.3 876.5,328.6 871.0,325.4 865.5,330.2 860.0,326.9 854.5,330.1 849.0,326.5 843.5,328.6 850.9,320.3" fill="#1c5d44" />
<polygon points="860.0,310.6 868.3,319.8 874.5,324.9 869.7,323.1 864.8,326.3 860.0,324.5 855.2,326.3 850.3,323.1 845.5,324.9 851.7,319.8" fill="#2b8457" />
<polygon points="860.0,310.6 862.0,320.3 860.0,324.5 855.2,326.3 850.3,323.1 845.5,324.9 851.7,319.8" fill="#3aa167" />
<polygon points="860.0,303.0 867.5,310.3 873.6,316.6 868.1,314.3 862.7,318.5 857.3,314.3 851.9,316.5 846.4,312.8 852.5,310.3" fill="#1c5d44" />
<polygon points="860.0,303.0 866.8,309.8 871.9,312.4 867.2,310.7 862.4,314.1 857.6,311.6 852.8,313.3 848.1,309.9 853.2,309.8" fill="#2b8457" />
<polygon points="860.0,303.0 861.6,310.3 862.4,314.1 857.6,311.6 852.8,313.3 848.1,309.9 853.2,309.8" fill="#3aa167" />
<rect x="918.0" y="362.3" width="8.0" height="11.7" fill="#4a2f2b"/>
<polygon points="922.0,332.1 935.8,349.8 947.0,365.4 941.4,363.1 935.9,366.3 930.3,364.1 924.8,367.9 919.2,364.3 913.7,366.9 908.1,363.9 902.6,367.1 897.0,363.1 908.2,349.8" fill="#1c5d44" />
<polygon points="922.0,332.1 934.5,349.3 944.0,362.1 939.1,359.9 934.2,363.1 929.3,360.9 924.4,364.0 919.6,361.4 914.7,363.5 909.8,360.4 904.9,362.6 900.0,359.5 909.5,349.3" fill="#2b8457" />
<polygon points="922.0,332.1 925.0,349.8 924.4,364.0 919.6,361.4 914.7,363.5 909.8,360.4 904.9,362.6 900.0,359.5 909.5,349.3" fill="#3aa167" />
<polygon points="922.0,324.4 934.4,339.5 944.5,352.7 938.9,350.8 933.3,354.4 927.6,351.1 922.0,354.7 916.4,351.3 910.7,354.3 905.1,350.2 899.5,353.8 909.6,339.5" fill="#1c5d44" />
<polygon points="922.0,324.4 933.3,338.9 941.8,349.2 936.9,347.2 931.9,350.3 927.0,348.3 922.0,351.4 917.0,348.3 912.1,350.3 907.1,347.2 902.2,349.2 910.7,338.9" fill="#2b8457" />
<polygon points="922.0,324.4 924.7,339.5 922.0,351.4 917.0,348.3 912.1,350.3 907.1,347.2 902.2,349.2 910.7,338.9" fill="#3aa167" />
<polygon points="922.0,316.6 933.0,329.2 942.0,340.5 936.3,337.4 930.6,342.0 924.9,338.2 919.1,341.8 913.4,338.6 907.7,341.1 902.0,336.5 911.0,329.2" fill="#1c5d44" />
<polygon points="922.0,316.6 932.0,328.6 939.6,336.4 934.6,334.4 929.5,337.6 924.5,335.6 919.5,338.3 914.5,335.0 909.4,337.0 904.4,333.8 912.0,328.6" fill="#2b8457" />
<polygon points="922.0,316.6 924.4,329.2 924.5,335.6 919.5,338.3 914.5,335.0 909.4,337.0 904.4,333.8 912.0,328.6" fill="#3aa167" />
<polygon points="922.0,308.8 931.5,318.8 939.2,327.1 933.5,324.2 927.7,328.8 922.0,326.2 916.3,328.9 910.5,324.9 904.8,327.7 912.5,318.8" fill="#1c5d44" />
<polygon points="922.0,308.8 930.6,318.3 937.1,323.5 932.1,321.6 927.0,325.0 922.0,323.1 917.0,325.0 911.9,321.6 906.9,323.5 913.4,318.3" fill="#2b8457" />
<polygon points="922.0,308.8 924.1,318.8 922.0,323.1 917.0,325.0 911.9,321.6 906.9,323.5 913.4,318.3" fill="#3aa167" />
<polygon points="922.0,301.0 929.8,308.5 936.1,315.0 930.5,312.5 924.8,315.8 919.2,313.1 913.5,315.0 907.9,311.0 914.2,308.5" fill="#1c5d44" />
<polygon points="922.0,301.0 929.1,308.0 934.4,310.7 929.5,308.9 924.5,312.4 919.5,309.8 914.5,311.6 909.6,308.1 914.9,308.0" fill="#2b8457" />
<polygon points="922.0,301.0 923.7,308.5 924.5,312.4 919.5,309.8 914.5,311.6 909.6,308.1 914.9,308.0" fill="#3aa167" />
<rect x="997.8" y="361.8" width="8.3" height="12.2" fill="#4a2f2b"/>
<polygon points="1002.0,330.4 1016.3,348.8 1028.0,364.9 1022.2,362.6 1016.4,367.2 1010.7,364.1 1004.9,367.1 999.1,364.5 993.3,367.6 987.6,363.7 981.8,366.2 976.0,361.6 987.7,348.8" fill="#1c5d44" />
<polygon points="1002.0,330.4 1015.0,348.2 1024.9,361.6 1019.8,359.4 1014.7,362.6 1009.6,360.4 1004.5,363.6 999.5,360.9 994.4,363.1 989.3,359.9 984.2,362.1 979.1,358.9 989.0,348.2" fill="#2b8457" />
<polygon points="1002.0,330.4 1005.1,348.8 1004.5,363.6 999.5,360.9 994.4,363.1 989.3,359.9 984.2,362.1 979.1,358.9 989.0,348.2" fill="#3aa167" />
<polygon points="1002.0,322.3 1014.9,338.0 1025.4,352.8 1019.6,348.7 1013.7,353.9 1007.9,350.2 1002.0,354.2 996.1,350.8 990.3,352.8 984.4,348.9 978.6,352.7 989.1,338.0" fill="#1c5d44" />
<polygon points="1002.0,322.3 1013.7,337.5 1022.6,348.2 1017.5,346.1 1012.3,349.4 1007.2,347.2 1002.0,350.5 996.8,347.2 991.7,349.4 986.5,346.1 981.4,348.2 990.3,337.5" fill="#2b8457" />
<polygon points="1002.0,322.3 1004.8,338.0 1002.0,350.5 996.8,347.2 991.7,349.4 986.5,346.1 981.4,348.2 990.3,337.5" fill="#3aa167" />
<polygon points="1002.0,314.2 1013.4,327.3 1022.8,338.3 1016.8,335.5 1010.9,339.8 1005.0,336.9 999.0,341.1 993.1,336.3 987.2,339.3 981.2,335.7 990.6,327.3" fill="#1c5d44" />
<polygon points="1002.0,314.2 1012.4,326.8 1020.3,334.8 1015.1,332.8 1009.8,336.1 1004.6,334.1 999.4,336.8 994.2,333.4 988.9,335.5 983.7,332.1 991.6,326.8" fill="#2b8457" />
<polygon points="1002.0,314.2 1004.5,327.3 1004.6,334.1 999.4,336.8 994.2,333.4 988.9,335.5 983.7,332.1 991.6,326.8" fill="#3aa167" />
<polygon points="1002.0,306.1 1011.8,316.6 1019.9,325.0 1013.9,323.0 1008.0,326.4 1002.0,323.6 996.0,326.8 990.1,322.3 984.1,324.9 992.2,316.6" fill="#1c5d44" />
<polygon points="1002.0,306.1 1010.9,316.0 1017.7,321.5 1012.5,319.5 1007.2,323.0 1002.0,321.0 996.8,323.0 991.5,319.5 986.3,321.5 993.1,316.0" fill="#2b8457" />
<polygon points="1002.0,306.1 1004.1,316.6 1002.0,321.0 996.8,323.0 991.5,319.5 986.3,321.5 993.1,316.0" fill="#3aa167" />
<polygon points="1002.0,298.0 1010.1,305.8 1016.7,311.5 1010.8,309.7 1004.9,314.1 999.1,310.5 993.2,313.7 987.3,308.2 993.9,305.8" fill="#1c5d44" />
<polygon points="1002.0,298.0 1009.4,305.3 1014.9,308.1 1009.8,306.3 1004.6,309.9 999.4,307.2 994.2,309.0 989.1,305.4 994.6,305.3" fill="#2b8457" />
<polygon points="1002.0,298.0 1003.8,305.8 1004.6,309.9 999.4,307.2 994.2,309.0 989.1,305.4 994.6,305.3" fill="#3aa167" />
<path d="M790 340V372" stroke="#4f8fe0" stroke-width="1"/>
<polygon points="600.0,478.0 700.0,466.0 780.0,458.0 864.0,450.0 866.0,470.0 790.0,484.0 715.0,500.0 700.0,520.0 578.0,520.0 578.0,480.0" fill="#6b706a" />
<polygon points="466.0,514.0 480.0,562.0 500.0,665.0 527.0,710.0 540.0,721.0 635.0,721.0 647.0,726.0 675.0,778.0 690.0,786.0 727.0,786.0 920.0,741.0 1002.0,692.0 1001.0,671.0 953.0,629.0 940.0,585.0 938.0,566.0 1131.0,560.0 1131.0,430.0 866.0,450.0 600.0,470.0" fill="#81847a" />
<polygon points="866.0,452.0 1131.0,430.0 1131.0,566.0 938.0,566.0 930.0,580.0 900.0,600.0 700.0,600.0 660.0,560.0 655.0,514.0 715.0,492.0 790.0,472.0" fill="#817f77" />
<polygon points="655.0,516.0 700.0,500.0 712.0,540.0 706.0,600.0 690.0,650.0 668.0,680.0 648.0,696.0 636.0,640.0 622.0,560.0 617.0,545.0" fill="#586264" />
<polygon points="655.0,520.0 690.0,506.0 690.0,560.0 672.0,640.0 652.0,688.0 642.0,640.0 628.0,560.0" fill="#4b5659" opacity=".7"/>
<polygon points="490.0,569.0 510.0,560.0 540.0,573.5 532.5,605.0 500.0,600.5" fill="#6b706a" opacity=".4"/>
<polygon points="535.0,600.0 557.0,590.0 590.0,605.0 581.8,640.0 546.0,635.0" fill="#6b706a" opacity=".4"/>
<polygon points="500.0,628.0 516.0,620.0 540.0,632.0 534.0,660.0 508.0,656.0" fill="#6b706a" opacity=".4"/>
<polygon points="560.0,649.0 580.0,640.0 610.0,653.5 602.5,685.0 570.0,680.5" fill="#6b706a" opacity=".4"/>
<polygon points="590.0,569.0 606.0,560.0 630.0,573.5 624.0,605.0 598.0,600.5" fill="#6b706a" opacity=".4"/>
<polygon points="545.0,687.0 569.0,680.0 605.0,690.5 596.0,715.0 557.0,711.5" fill="#6b706a" opacity=".4"/>
<polygon points="600.0,695.6 616.0,690.0 640.0,698.4 634.0,718.0 608.0,715.2" fill="#6b706a" opacity=".4"/>
<polygon points="465.0,512.0 520.0,490.0 600.0,477.0 700.0,466.0 780.0,459.0 862.0,451.0 866.0,459.0 790.0,474.0 715.0,494.0 655.0,516.0 617.0,545.0 490.0,545.0" fill="#62cc65" />
<polygon points="470.0,510.0 520.0,490.0 600.0,477.0 700.0,466.0 780.0,459.0 858.0,452.0 855.0,455.0 785.0,468.0 708.0,488.0 648.0,508.0 610.0,534.0 494.0,534.0" fill="#46b85e" stroke="#a6f2ee" stroke-width=".8" stroke-opacity=".55"/>
<g stroke="#8ff0e8" stroke-width=".8" fill="none" opacity=".7"><path d="M488 520l120 4 30-18M510 532l90-2 50-30 60-16 90-18M560 512l50 20M700 474l40 10 60-20"/></g>
<g stroke="#a6f2ee" stroke-width=".8" fill="none" opacity=".5"><path d="M500 536l40-26 60 22 48-26 60-16 40 6 50-20 50-10M540 510l20 24M648 506l10 4M700 488l14 2M600 390l100-6 100-4 160-5 160-2M620 396l60-12M760 392l60-12M900 388l60-12M1040 384l50-10M665 700l30 52 34 2 88-20 100-24 78-44M700 756l40-30 60 10 80-30M960 508l66 28 136 56 180-42M1066 556l60-30 40 60M1200 584l60-50 60 20"/></g>
<ellipse cx="562.0" cy="490.3" rx="24.8" ry="5.6" fill="#2a7d48" opacity=".5"/>
<rect x="557.0" y="478.6" width="9.9" height="13.4" fill="#4a2f2b"/>
<polygon points="562.0,443.8 579.0,464.1 593.0,483.4 586.1,479.3 579.2,483.2 572.3,480.6 565.4,484.5 558.6,480.6 551.7,483.8 544.8,480.1 537.9,483.2 531.0,479.2 545.0,464.1" fill="#1c5d44" />
<polygon points="562.0,443.8 577.5,463.5 589.3,478.3 583.2,475.8 577.2,479.4 571.1,476.9 565.0,480.5 559.0,477.5 552.9,480.0 546.8,476.4 540.8,478.9 534.7,475.3 546.5,463.5" fill="#2b8457" />
<polygon points="562.0,443.8 565.7,464.1 565.0,480.5 559.0,477.5 552.9,480.0 546.8,476.4 540.8,478.9 534.7,475.3 546.5,463.5" fill="#3aa167" />
<polygon points="562.0,434.9 577.4,452.3 590.0,467.2 583.0,465.0 576.0,468.7 569.0,466.4 562.0,470.7 555.0,466.5 548.0,468.5 541.0,465.0 534.0,468.2 546.6,452.3" fill="#1c5d44" />
<polygon points="562.0,434.9 576.0,451.7 586.6,463.5 580.5,461.1 574.3,464.8 568.2,462.4 562.0,466.0 555.8,462.4 549.7,464.8 543.5,461.1 537.4,463.5 548.0,451.7" fill="#2b8457" />
<polygon points="562.0,434.9 565.4,452.3 562.0,466.0 555.8,462.4 549.7,464.8 543.5,461.1 537.4,463.5 548.0,451.7" fill="#3aa167" />
<polygon points="562.0,425.9 575.6,440.4 586.8,452.8 579.7,450.0 572.6,454.3 565.5,451.8 558.5,455.7 551.4,450.1 544.3,454.4 537.2,448.6 548.4,440.4" fill="#1c5d44" />
<polygon points="562.0,425.9 574.4,439.8 583.8,448.7 577.6,446.4 571.3,450.2 565.1,447.9 558.9,450.9 552.7,447.1 546.4,449.4 540.2,445.7 549.6,439.8" fill="#2b8457" />
<polygon points="562.0,425.9 565.0,440.4 565.1,447.9 558.9,450.9 552.7,447.1 546.4,449.4 540.2,445.7 549.6,439.8" fill="#3aa167" />
<polygon points="562.0,417.0 573.7,428.5 583.3,438.9 576.2,435.5 569.1,439.9 562.0,436.4 554.9,440.7 547.8,434.7 540.7,439.0 550.3,428.5" fill="#1c5d44" />
<polygon points="562.0,417.0 572.7,427.9 580.8,433.9 574.5,431.8 568.3,435.6 562.0,433.4 555.7,435.6 549.5,431.8 543.2,433.9 551.3,427.9" fill="#2b8457" />
<polygon points="562.0,417.0 564.6,428.5 562.0,433.4 555.7,435.6 549.5,431.8 543.2,433.9 551.3,427.9" fill="#3aa167" />
<polygon points="562.0,408.0 571.6,416.7 579.5,423.0 572.5,420.3 565.5,425.8 558.5,421.0 551.5,425.1 544.5,419.4 552.4,416.7" fill="#1c5d44" />
<polygon points="562.0,408.0 570.8,416.0 577.4,419.2 571.3,417.1 565.1,421.2 558.9,418.1 552.7,420.2 546.6,416.1 553.2,416.0" fill="#2b8457" />
<polygon points="562.0,408.0 564.1,416.7 565.1,421.2 558.9,418.1 552.7,420.2 546.6,416.1 553.2,416.0" fill="#3aa167" />
<ellipse cx="798.0" cy="461.8" rx="16.0" ry="3.6" fill="#2a7d48" opacity=".5"/>
<rect x="794.8" y="453.7" width="6.4" height="9.3" fill="#4a2f2b"/>
<polygon points="798.0,429.7 809.0,443.8 818.0,456.3 813.6,454.3 809.1,457.0 804.7,455.4 800.2,457.8 795.8,455.7 791.3,458.2 786.9,454.0 782.4,457.0 778.0,453.3 787.0,443.8" fill="#1c5d44" />
<polygon points="798.0,429.7 808.0,443.3 815.6,453.5 811.7,451.8 807.8,454.3 803.9,452.6 800.0,455.1 796.0,453.0 792.1,454.7 788.2,452.2 784.3,453.9 780.4,451.4 788.0,443.3" fill="#2b8457" />
<polygon points="798.0,429.7 800.4,443.8 800.0,455.1 796.0,453.0 792.1,454.7 788.2,452.2 784.3,453.9 780.4,451.4 788.0,443.3" fill="#3aa167" />
<polygon points="798.0,423.6 807.9,435.6 816.0,446.8 811.5,443.8 807.0,447.0 802.5,445.0 798.0,448.4 793.5,444.8 789.0,447.8 784.5,444.5 780.0,446.9 788.1,435.6" fill="#1c5d44" />
<polygon points="798.0,423.6 807.0,435.1 813.9,443.3 809.9,441.7 805.9,444.2 802.0,442.5 798.0,445.1 794.0,442.5 790.1,444.2 786.1,441.7 782.1,443.3 789.0,435.1" fill="#2b8457" />
<polygon points="798.0,423.6 800.2,435.6 798.0,445.1 794.0,442.5 790.1,444.2 786.1,441.7 782.1,443.3 789.0,435.1" fill="#3aa167" />
<polygon points="798.0,417.4 806.8,427.4 814.0,435.7 809.4,433.8 804.8,437.6 800.3,434.7 795.7,437.9 791.2,434.8 786.6,436.3 782.0,433.1 789.2,427.4" fill="#1c5d44" />
<polygon points="798.0,417.4 806.0,426.9 812.1,433.1 808.0,431.5 804.0,434.1 800.0,432.5 796.0,434.6 792.0,432.0 788.0,433.6 783.9,431.0 790.0,426.9" fill="#2b8457" />
<polygon points="798.0,417.4 799.9,427.4 800.0,432.5 796.0,434.6 792.0,432.0 788.0,433.6 783.9,431.0 790.0,426.9" fill="#3aa167" />
<polygon points="798.0,411.2 805.6,419.2 811.8,426.5 807.2,423.5 802.6,427.6 798.0,425.2 793.4,426.7 788.8,423.7 784.2,426.4 790.4,419.2" fill="#1c5d44" />
<polygon points="798.0,411.2 804.9,418.8 810.1,422.9 806.1,421.4 802.0,424.1 798.0,422.6 794.0,424.1 789.9,421.4 785.9,422.9 791.1,418.8" fill="#2b8457" />
<polygon points="798.0,411.2 799.7,419.2 798.0,422.6 794.0,424.1 789.9,421.4 785.9,422.9 791.1,418.8" fill="#3aa167" />
<polygon points="798.0,405.0 804.2,411.0 809.3,415.6 804.8,413.3 800.3,416.9 795.7,413.8 791.2,417.0 786.7,412.6 791.8,411.0" fill="#1c5d44" />
<polygon points="798.0,405.0 803.7,410.6 808.0,412.7 804.0,411.3 800.0,414.1 796.0,412.0 792.0,413.4 788.0,410.6 792.3,410.6" fill="#2b8457" />
<polygon points="798.0,405.0 799.4,411.0 800.0,414.1 796.0,412.0 792.0,413.4 788.0,410.6 792.3,410.6" fill="#3aa167" />
<ellipse cx="833.0" cy="457.1" rx="13.6" ry="3.1" fill="#2a7d48" opacity=".5"/>
<rect x="830.3" y="450.8" width="5.4" height="7.2" fill="#4a2f2b"/>
<polygon points="833.0,432.2 842.4,443.1 850.0,452.8 846.2,451.1 842.4,454.0 838.7,451.9 834.9,454.4 831.1,451.9 827.3,453.9 823.6,451.3 819.8,453.7 816.0,450.5 823.6,443.1" fill="#1c5d44" />
<polygon points="833.0,432.2 841.5,442.7 848.0,450.7 844.6,449.3 841.3,451.3 838.0,449.9 834.7,451.9 831.3,450.2 828.0,451.6 824.7,449.6 821.4,451.0 818.0,449.0 824.5,442.7" fill="#2b8457" />
<polygon points="833.0,432.2 835.0,443.1 834.7,451.9 831.3,450.2 828.0,451.6 824.7,449.6 821.4,451.0 818.0,449.0 824.5,442.7" fill="#3aa167" />
<polygon points="833.0,427.4 841.4,436.7 848.3,444.9 844.5,443.1 840.7,445.8 836.8,444.1 833.0,446.8 829.2,444.1 825.3,446.1 821.5,443.2 817.7,444.9 824.6,436.7" fill="#1c5d44" />
<polygon points="833.0,427.4 840.7,436.4 846.5,442.7 843.1,441.5 839.7,443.4 836.4,442.1 833.0,444.1 829.6,442.1 826.3,443.4 822.9,441.5 819.5,442.7 825.3,436.4" fill="#2b8457" />
<polygon points="833.0,427.4 834.8,436.7 833.0,444.1 829.6,442.1 826.3,443.4 822.9,441.5 819.5,442.7 825.3,436.4" fill="#3aa167" />
<polygon points="833.0,422.6 840.5,430.4 846.6,437.3 842.7,435.5 838.8,438.2 834.9,436.3 831.1,438.2 827.2,436.0 823.3,437.5 819.4,434.8 825.5,430.4" fill="#1c5d44" />
<polygon points="833.0,422.6 839.8,430.0 844.9,434.8 841.5,433.6 838.1,435.6 834.7,434.4 831.3,436.0 827.9,434.0 824.5,435.2 821.1,433.2 826.2,430.0" fill="#2b8457" />
<polygon points="833.0,422.6 834.6,430.4 834.7,434.4 831.3,436.0 827.9,434.0 824.5,435.2 821.1,433.2 826.2,430.0" fill="#3aa167" />
<polygon points="833.0,417.8 839.4,424.0 844.7,429.3 840.8,427.7 836.9,430.4 833.0,428.8 829.1,430.4 825.2,428.0 821.3,429.4 826.6,424.0" fill="#1c5d44" />
<polygon points="833.0,417.8 838.9,423.7 843.3,426.9 839.9,425.7 836.4,427.8 833.0,426.6 829.6,427.8 826.1,425.7 822.7,426.9 827.1,423.7" fill="#2b8457" />
<polygon points="833.0,417.8 834.4,424.0 833.0,426.6 829.6,427.8 826.1,425.7 822.7,426.9 827.1,423.7" fill="#3aa167" />
<polygon points="833.0,413.0 838.3,417.6 842.6,421.3 838.8,419.9 834.9,422.4 831.1,420.7 827.2,421.7 823.4,419.0 827.7,417.6" fill="#1c5d44" />
<polygon points="833.0,413.0 837.8,417.3 841.5,419.0 838.1,417.9 834.7,420.1 831.3,418.4 827.9,419.5 824.5,417.4 828.2,417.3" fill="#2b8457" />
<polygon points="833.0,413.0 834.2,417.6 834.7,420.1 831.3,418.4 827.9,419.5 824.5,417.4 828.2,417.3" fill="#3aa167" />
<ellipse cx="642.0" cy="494.8" rx="18.4" ry="4.1" fill="#2a7d48" opacity=".5"/>
<rect x="638.3" y="486.7" width="7.4" height="9.3" fill="#4a2f2b"/>
<polygon points="642.0,462.7 654.6,476.8 665.0,489.3 659.9,487.3 654.8,490.2 649.7,488.4 644.6,491.2 639.4,488.8 634.3,490.4 629.2,487.6 624.1,490.0 619.0,487.4 629.4,476.8" fill="#1c5d44" />
<polygon points="642.0,462.7 653.5,476.3 662.2,486.5 657.7,484.8 653.2,487.3 648.7,485.6 644.2,488.1 639.8,486.0 635.3,487.7 630.8,485.2 626.3,486.9 621.8,484.4 630.5,476.3" fill="#2b8457" />
<polygon points="642.0,462.7 644.8,476.8 644.2,488.1 639.8,486.0 635.3,487.7 630.8,485.2 626.3,486.9 621.8,484.4 630.5,476.3" fill="#3aa167" />
<polygon points="642.0,456.6 653.4,468.6 662.7,479.2 657.6,477.5 652.4,480.7 647.2,477.8 642.0,481.2 636.8,478.0 631.6,480.3 626.4,477.0 621.3,479.4 630.6,468.6" fill="#1c5d44" />
<polygon points="642.0,456.6 652.4,468.1 660.3,476.3 655.7,474.7 651.1,477.2 646.6,475.5 642.0,478.1 637.4,475.5 632.9,477.2 628.3,474.7 623.7,476.3 631.6,468.1" fill="#2b8457" />
<polygon points="642.0,456.6 644.5,468.6 642.0,478.1 637.4,475.5 632.9,477.2 628.3,474.7 623.7,476.3 631.6,468.1" fill="#3aa167" />
<polygon points="642.0,450.4 652.1,460.4 660.4,469.1 655.1,466.3 649.9,469.8 644.6,468.2 639.4,470.3 634.1,467.7 628.9,470.0 623.6,466.6 631.9,460.4" fill="#1c5d44" />
<polygon points="642.0,450.4 651.2,459.9 658.2,466.1 653.5,464.5 648.9,467.1 644.3,465.5 639.7,467.6 635.1,465.0 630.5,466.6 625.8,464.0 632.8,459.9" fill="#2b8457" />
<polygon points="642.0,450.4 644.2,460.4 644.3,465.5 639.7,467.6 635.1,465.0 630.5,466.6 625.8,464.0 632.8,459.9" fill="#3aa167" />
<polygon points="642.0,444.2 650.7,452.2 657.8,458.8 652.6,456.8 647.3,459.9 642.0,457.9 636.7,459.7 631.4,457.1 626.2,459.5 633.3,452.2" fill="#1c5d44" />
<polygon points="642.0,444.2 649.9,451.8 655.9,455.9 651.3,454.4 646.6,457.1 642.0,455.6 637.4,457.1 632.7,454.4 628.1,455.9 634.1,451.8" fill="#2b8457" />
<polygon points="642.0,444.2 643.9,452.2 642.0,455.6 637.4,457.1 632.7,454.4 628.1,455.9 634.1,451.8" fill="#3aa167" />
<polygon points="642.0,438.0 649.2,444.0 655.0,448.7 649.8,446.4 644.6,449.9 639.4,447.6 634.2,449.3 629.0,445.7 634.8,444.0" fill="#1c5d44" />
<polygon points="642.0,438.0 648.5,443.6 653.4,445.7 648.9,444.3 644.3,447.1 639.7,445.0 635.1,446.4 630.6,443.6 635.5,443.6" fill="#2b8457" />
<polygon points="642.0,438.0 643.6,444.0 644.3,447.1 639.7,445.0 635.1,446.4 630.6,443.6 635.5,443.6" fill="#3aa167" />
<ellipse cx="687.0" cy="487.9" rx="18.4" ry="4.1" fill="#2a7d48" opacity=".5"/>
<rect x="683.3" y="480.2" width="7.4" height="8.8" fill="#4a2f2b"/>
<polygon points="687.0,457.5 699.6,470.8 710.0,483.3 704.9,480.9 699.8,483.3 694.7,481.6 689.6,483.9 684.4,481.6 679.3,483.9 674.2,480.5 669.1,483.8 664.0,480.2 674.4,470.8" fill="#1c5d44" />
<polygon points="687.0,457.5 698.5,470.4 707.2,480.0 702.7,478.4 698.2,480.8 693.7,479.1 689.2,481.5 684.8,479.5 680.3,481.1 675.8,478.8 671.3,480.4 666.8,478.0 675.5,470.4" fill="#2b8457" />
<polygon points="687.0,457.5 689.8,470.8 689.2,481.5 684.8,479.5 680.3,481.1 675.8,478.8 671.3,480.4 666.8,478.0 675.5,470.4" fill="#3aa167" />
<polygon points="687.0,451.6 698.4,463.0 707.7,473.4 702.6,471.0 697.4,473.6 692.2,471.3 687.0,475.3 681.8,472.4 676.6,474.1 671.4,471.2 666.3,472.8 675.6,463.0" fill="#1c5d44" />
<polygon points="687.0,451.6 697.4,462.6 705.3,470.3 700.7,468.8 696.1,471.2 691.6,469.6 687.0,472.0 682.4,469.6 677.9,471.2 673.3,468.8 668.7,470.3 676.6,462.6" fill="#2b8457" />
<polygon points="687.0,451.6 689.5,463.0 687.0,472.0 682.4,469.6 677.9,471.2 673.3,468.8 668.7,470.3 676.6,462.6" fill="#3aa167" />
<polygon points="687.0,445.7 697.1,455.2 705.4,464.1 700.1,461.1 694.9,464.3 689.6,462.3 684.4,465.4 679.1,462.4 673.9,464.3 668.6,461.1 676.9,455.2" fill="#1c5d44" />
<polygon points="687.0,445.7 696.2,454.8 703.2,460.7 698.5,459.2 693.9,461.6 689.3,460.1 684.7,462.1 680.1,459.6 675.5,461.1 670.8,458.7 677.8,454.8" fill="#2b8457" />
<polygon points="687.0,445.7 689.2,455.2 689.3,460.1 684.7,462.1 680.1,459.6 675.5,461.1 670.8,458.7 677.8,454.8" fill="#3aa167" />
<polygon points="687.0,439.9 695.7,447.4 702.8,453.7 697.6,451.4 692.3,454.6 687.0,453.3 681.7,455.0 676.4,451.5 671.2,454.3 678.3,447.4" fill="#1c5d44" />
<polygon points="687.0,439.9 694.9,447.0 700.9,451.0 696.3,449.6 691.6,452.1 687.0,450.7 682.4,452.1 677.7,449.6 673.1,451.0 679.1,447.0" fill="#2b8457" />
<polygon points="687.0,439.9 688.9,447.4 687.0,450.7 682.4,452.1 677.7,449.6 673.1,451.0 679.1,447.0" fill="#3aa167" />
<polygon points="687.0,434.0 694.2,439.7 700.0,444.2 694.8,442.0 689.6,445.3 684.4,442.7 679.2,444.9 674.0,441.6 679.8,439.7" fill="#1c5d44" />
<polygon points="687.0,434.0 693.5,439.3 698.4,441.3 693.9,440.0 689.3,442.6 684.7,440.6 680.1,442.0 675.6,439.3 680.5,439.3" fill="#2b8457" />
<polygon points="687.0,434.0 688.6,439.7 689.3,442.6 684.7,440.6 680.1,442.0 675.6,439.3 680.5,439.3" fill="#3aa167" />
<ellipse cx="490.0" cy="504.3" rx="25.6" ry="5.8" fill="#2a7d48" opacity=".5"/>
<rect x="484.9" y="492.7" width="10.2" height="13.3" fill="#4a2f2b"/>
<polygon points="490.0,458.4 507.6,478.5 522.0,497.1 514.9,494.1 507.8,498.4 500.7,493.7 493.6,499.1 486.4,495.2 479.3,498.5 472.2,493.9 465.1,498.2 458.0,492.7 472.4,478.5" fill="#1c5d44" />
<polygon points="490.0,458.4 506.0,477.9 518.2,492.5 511.9,490.0 505.6,493.6 499.4,491.1 493.1,494.7 486.9,491.7 480.6,494.1 474.4,490.6 468.1,493.0 461.8,489.5 474.0,477.9" fill="#2b8457" />
<polygon points="490.0,458.4 493.8,478.5 493.1,494.7 486.9,491.7 480.6,494.1 474.4,490.6 468.1,493.0 461.8,489.5 474.0,477.9" fill="#3aa167" />
<polygon points="490.0,449.6 505.9,466.7 518.9,482.5 511.6,479.4 504.4,482.7 497.2,479.9 490.0,485.4 482.8,480.1 475.6,484.2 468.4,478.9 461.1,481.7 474.1,466.7" fill="#1c5d44" />
<polygon points="490.0,449.6 504.4,466.1 515.4,477.8 509.0,475.5 502.7,479.1 496.3,476.7 490.0,480.3 483.7,476.7 477.3,479.1 471.0,475.5 464.6,477.8 475.6,466.1" fill="#2b8457" />
<polygon points="490.0,449.6 493.5,466.7 490.0,480.3 483.7,476.7 477.3,479.1 471.0,475.5 464.6,477.8 475.6,466.1" fill="#3aa167" />
<polygon points="490.0,440.7 504.1,455.0 515.6,466.9 508.3,464.5 501.0,468.4 493.7,465.7 486.3,469.2 479.0,465.1 471.7,468.8 464.4,463.9 475.9,455.0" fill="#1c5d44" />
<polygon points="490.0,440.7 502.8,454.4 512.5,463.2 506.1,461.0 499.6,464.7 493.2,462.4 486.8,465.4 480.4,461.7 473.9,463.9 467.5,460.3 477.2,454.4" fill="#2b8457" />
<polygon points="490.0,440.7 493.1,455.0 493.2,462.4 486.8,465.4 480.4,461.7 473.9,463.9 467.5,460.3 477.2,454.4" fill="#3aa167" />
<polygon points="490.0,431.9 502.1,443.3 512.0,452.4 504.7,449.4 497.3,454.6 490.0,451.7 482.7,455.0 475.3,449.4 468.0,452.9 477.9,443.3" fill="#1c5d44" />
<polygon points="490.0,431.9 501.0,442.7 509.4,448.6 502.9,446.5 496.5,450.3 490.0,448.1 483.5,450.3 477.1,446.5 470.6,448.6 479.0,442.7" fill="#2b8457" />
<polygon points="490.0,431.9 492.6,443.3 490.0,448.1 483.5,450.3 477.1,446.5 470.6,448.6 479.0,442.7" fill="#3aa167" />
<polygon points="490.0,423.0 500.0,431.5 508.1,437.6 500.9,435.5 493.6,439.8 486.4,436.5 479.1,439.9 471.9,434.1 480.0,431.5" fill="#1c5d44" />
<polygon points="490.0,423.0 499.0,431.0 505.9,434.0 499.6,432.0 493.2,436.0 486.8,433.0 480.4,435.0 474.1,431.0 481.0,431.0" fill="#2b8457" />
<polygon points="490.0,423.0 492.2,431.5 493.2,436.0 486.8,433.0 480.4,435.0 474.1,431.0 481.0,431.0" fill="#3aa167" />
<ellipse cx="517.0" cy="515.5" rx="28.0" ry="6.3" fill="#2a7d48" opacity=".5"/>
<rect x="511.4" y="504.7" width="11.2" height="12.3" fill="#4a2f2b"/>
<polygon points="517.0,472.8 536.2,491.5 552.0,508.8 544.2,505.7 536.4,508.9 528.7,506.1 520.9,510.4 513.1,507.3 505.3,509.9 497.6,505.3 489.8,509.1 482.0,504.6 497.8,491.5" fill="#1c5d44" />
<polygon points="517.0,472.8 534.5,490.9 547.8,504.4 541.0,502.2 534.1,505.5 527.3,503.2 520.4,506.5 513.6,503.7 506.7,506.0 499.9,502.7 493.0,504.9 486.2,501.7 499.5,490.9" fill="#2b8457" />
<polygon points="517.0,472.8 521.2,491.5 520.4,506.5 513.6,503.7 506.7,506.0 499.9,502.7 493.0,504.9 486.2,501.7 499.5,490.9" fill="#3aa167" />
<polygon points="517.0,464.6 534.4,480.6 548.6,494.7 540.7,491.6 532.8,495.4 524.9,492.7 517.0,497.5 509.1,492.7 501.2,495.4 493.3,492.5 485.4,495.5 499.6,480.6" fill="#1c5d44" />
<polygon points="517.0,464.6 532.8,480.0 544.8,490.9 537.8,488.7 530.9,492.0 523.9,489.8 517.0,493.2 510.1,489.8 503.1,492.0 496.2,488.7 489.2,490.9 501.2,480.0" fill="#2b8457" />
<polygon points="517.0,464.6 520.8,480.6 517.0,493.2 510.1,489.8 503.1,492.0 496.2,488.7 489.2,490.9 501.2,480.0" fill="#3aa167" />
<polygon points="517.0,456.4 532.4,469.7 545.0,481.1 537.0,477.9 529.0,482.0 521.0,479.9 513.0,483.6 505.0,478.8 497.0,482.2 489.0,478.3 501.6,469.7" fill="#1c5d44" />
<polygon points="517.0,456.4 531.0,469.1 541.6,477.3 534.6,475.2 527.5,478.6 520.5,476.5 513.5,479.3 506.5,475.9 499.4,478.0 492.4,474.6 503.0,469.1" fill="#2b8457" />
<polygon points="517.0,456.4 520.4,469.7 520.5,476.5 513.5,479.3 506.5,475.9 499.4,478.0 492.4,474.6 503.0,469.1" fill="#3aa167" />
<polygon points="517.0,448.2 530.2,458.8 541.1,468.5 533.1,465.7 525.0,470.1 517.0,466.5 509.0,470.0 500.9,465.4 492.9,468.3 503.8,458.8" fill="#1c5d44" />
<polygon points="517.0,448.2 529.0,458.3 538.2,463.8 531.1,461.8 524.1,465.3 517.0,463.3 509.9,465.3 502.9,461.8 495.8,463.8 505.0,458.3" fill="#2b8457" />
<polygon points="517.0,448.2 519.9,458.8 517.0,463.3 509.9,465.3 502.9,461.8 495.8,463.8 505.0,458.3" fill="#3aa167" />
<polygon points="517.0,440.0 527.9,447.9 536.8,454.7 528.9,451.2 521.0,455.8 513.0,452.9 505.1,454.9 497.2,450.8 506.1,447.9" fill="#1c5d44" />
<polygon points="517.0,440.0 526.9,447.4 534.4,450.2 527.5,448.4 520.5,452.1 513.5,449.3 506.5,451.1 499.6,447.5 507.1,447.4" fill="#2b8457" />
<polygon points="517.0,440.0 519.4,447.9 520.5,452.1 513.5,449.3 506.5,451.1 499.6,447.5 507.1,447.4" fill="#3aa167" />
<ellipse cx="598.0" cy="511.2" rx="29.6" ry="6.7" fill="#2a7d48" opacity=".5"/>
<rect x="592.1" y="498.4" width="11.8" height="14.6" fill="#4a2f2b"/>
<polygon points="598.0,460.8 618.4,482.8 635.0,503.5 626.8,498.6 618.6,503.4 610.3,500.7 602.1,504.9 593.9,501.6 585.7,504.4 577.4,499.9 569.2,503.9 561.0,498.4 577.6,482.8" fill="#1c5d44" />
<polygon points="598.0,460.8 616.5,482.2 630.6,498.1 623.3,495.5 616.1,499.4 608.9,496.7 601.6,500.6 594.4,497.3 587.1,500.0 579.9,496.1 572.7,498.8 565.4,494.9 579.5,482.2" fill="#2b8457" />
<polygon points="598.0,460.8 602.4,482.8 601.6,500.6 594.4,497.3 587.1,500.0 579.9,496.1 572.7,498.8 565.4,494.9 579.5,482.2" fill="#3aa167" />
<polygon points="598.0,451.1 616.4,470.0 631.4,487.0 623.0,482.7 614.7,487.8 606.3,484.1 598.0,490.3 589.7,485.1 581.3,487.7 573.0,482.9 564.6,487.2 579.6,470.0" fill="#1c5d44" />
<polygon points="598.0,451.1 614.7,469.3 627.4,482.1 620.0,479.5 612.7,483.5 605.3,480.9 598.0,484.9 590.7,480.9 583.3,483.5 576.0,479.5 568.6,482.1 581.3,469.3" fill="#2b8457" />
<polygon points="598.0,451.1 602.0,470.0 598.0,484.9 590.7,480.9 583.3,483.5 576.0,479.5 568.6,482.1 581.3,469.3" fill="#3aa167" />
<polygon points="598.0,441.4 614.3,457.1 627.6,470.7 619.1,467.6 610.7,472.7 602.2,468.4 593.8,472.6 585.3,467.5 576.9,472.1 568.4,466.8 581.7,457.1" fill="#1c5d44" />
<polygon points="598.0,441.4 612.8,456.4 624.0,466.1 616.6,463.6 609.1,467.7 601.7,465.2 594.3,468.5 586.9,464.4 579.4,466.9 572.0,462.8 583.2,456.4" fill="#2b8457" />
<polygon points="598.0,441.4 601.5,457.1 601.7,465.2 594.3,468.5 586.9,464.4 579.4,466.9 572.0,462.8 583.2,456.4" fill="#3aa167" />
<polygon points="598.0,431.7 612.0,444.2 623.5,454.5 615.0,451.0 606.5,456.3 598.0,453.3 589.5,456.5 581.0,451.5 572.5,455.1 584.0,444.2" fill="#1c5d44" />
<polygon points="598.0,431.7 610.7,443.6 620.4,450.1 612.9,447.7 605.5,451.9 598.0,449.6 590.5,451.9 583.1,447.7 575.6,450.1 585.3,443.6" fill="#2b8457" />
<polygon points="598.0,431.7 601.1,444.2 598.0,449.6 590.5,451.9 583.1,447.7 575.6,450.1 585.3,443.6" fill="#3aa167" />
<polygon points="598.0,422.0 609.5,431.4 618.9,439.6 610.6,435.7 602.2,441.9 593.8,436.3 585.4,440.3 577.1,435.1 586.5,431.4" fill="#1c5d44" />
<polygon points="598.0,422.0 608.5,430.7 616.4,434.1 609.0,431.9 601.7,436.3 594.3,433.0 587.0,435.2 579.6,430.8 587.5,430.7" fill="#2b8457" />
<polygon points="598.0,422.0 600.5,431.4 601.7,436.3 594.3,433.0 587.0,435.2 579.6,430.8 587.5,430.7" fill="#3aa167" />
<path d="M500 666L527 711L540 722L635 722L647 727L675 779L690 787L727 787L920 742L1003 693" fill="none" stroke="#f4f9fd" stroke-width="2.200" stroke-linejoin="round"/>
<polygon points="956.0,503.0 1160.0,598.0 1352.0,556.0 1340.0,636.0 1165.0,696.0 1145.0,693.0 956.0,573.0" fill="#81847a" />
<polygon points="1160.0,600.0 1352.0,556.0 1340.0,636.0 1165.0,696.0" fill="#898b81" />
<polygon points="965.0,536.0 979.0,530.0 1000.0,539.0 994.8,560.0 972.0,557.0" fill="#6b706a" opacity=".35"/>
<polygon points="1000.0,556.8 1015.2,550.0 1038.0,560.2 1032.3,584.0 1007.6,580.6" fill="#6b706a" opacity=".35"/>
<polygon points="1035.0,582.2 1051.0,575.0 1075.0,585.8 1069.0,611.0 1043.0,607.4" fill="#6b706a" opacity=".35"/>
<polygon points="1075.0,607.6 1091.0,600.0 1115.0,611.4 1109.0,638.0 1083.0,634.2" fill="#6b706a" opacity=".35"/>
<polygon points="1115.0,632.6 1130.2,625.0 1153.0,636.4 1147.3,663.0 1122.6,659.2" fill="#6b706a" opacity=".35"/>
<polygon points="990.0,590.0 1002.0,585.0 1020.0,592.5 1015.5,610.0 996.0,607.5" fill="#6b706a" opacity=".35"/>
<polygon points="1040.0,625.6 1054.0,620.0 1075.0,628.4 1069.8,648.0 1047.0,645.2" fill="#6b706a" opacity=".35"/>
<polygon points="1090.0,655.6 1106.0,650.0 1130.0,658.4 1124.0,678.0 1098.0,675.2" fill="#6b706a" opacity=".35"/>
<polygon points="1200.0,628.0 1216.0,620.0 1240.0,632.0 1234.0,660.0 1208.0,656.0" fill="#6b706a" opacity=".35"/>
<polygon points="1250.0,612.6 1266.0,605.0 1290.0,616.4 1284.0,643.0 1258.0,639.2" fill="#6b706a" opacity=".35"/>
<polygon points="1295.0,597.0 1309.0,590.0 1330.0,600.5 1324.8,625.0 1302.0,621.5" fill="#6b706a" opacity=".35"/>
<polygon points="1180.0,656.0 1194.0,650.0 1215.0,659.0 1209.8,680.0 1187.0,677.0" fill="#6b706a" opacity=".35"/>
<path d="M955 568L1145 693.500L1165 696.500L1340 636.500" fill="none" stroke="#f4f9fd" stroke-width="2.200" stroke-linejoin="round"/>
<polygon points="957.0,498.0 1000.0,494.0 1131.0,470.0 1200.0,470.0 1330.0,520.0 1353.0,552.0 1352.0,561.0 1160.0,604.0 1020.0,544.0 956.0,510.0" fill="#62cc65" />
<polygon points="960.0,500.0 1000.0,496.0 1131.0,474.0 1200.0,474.0 1326.0,522.0 1346.0,551.0 1160.0,594.0 1024.0,537.0 957.0,515.0" fill="#46b85e" stroke="#a6f2ee" stroke-width=".8" stroke-opacity=".55"/>
<polygon points="1035.0,523.0 1100.0,509.0 1180.0,506.0 1180.0,524.0 1120.0,537.0 1060.0,541.0" fill="#f4dba8" />
<g stroke="#8ff0e8" stroke-width=".8" fill="none" opacity=".7"><path d="M1020 536l60 20 80 36 20-40M1080 556l70-10 30 40M1290 560l40-12-30-20"/></g>
<polygon points="1058.0,530.0 1096.0,522.0 1128.0,528.0 1150.0,534.0 1140.0,546.0 1100.0,551.0 1066.0,548.0" fill="#3fa55a" />
<polygon points="1062.0,531.0 1096.0,525.0 1124.0,530.0 1118.0,540.0 1080.0,543.0" fill="#4db566" />
<path d="M1070 428L1073 500A27.5 4.0 0 0 0 1128 500L1131 428Z" fill="#664839" />
<path d="M1108.1 433L1106.6 503.5A27.5 4.0 0 0 0 1128 500L1131 428Z" fill="#4c352e" opacity=".55"/>
<ellipse cx="1100.5" cy="428" rx="30.5" ry="5" fill="#d8a792"/>
<ellipse cx="1100.5" cy="428" rx="30.5" ry="5" fill="none" stroke="#8fe0f0" stroke-width=".8" opacity=".6"/>
<path d="M1122 443L1125 520A29.0 4.0 0 0 0 1183 520L1186 443Z" fill="#664839" />
<path d="M1162.0 448L1160.4 523.5A29.0 4.0 0 0 0 1183 520L1186 443Z" fill="#4c352e" opacity=".55"/>
<ellipse cx="1154.0" cy="443" rx="32.0" ry="5" fill="#d8a792"/>
<ellipse cx="1154.0" cy="443" rx="32.0" ry="5" fill="none" stroke="#8fe0f0" stroke-width=".8" opacity=".6"/>
<ellipse cx="1072.0" cy="512.5" rx="25.6" ry="5.8" fill="#2a7d48" opacity=".5"/>
<rect x="1066.9" y="502.2" width="10.2" height="11.8" fill="#4a2f2b"/>
<polygon points="1072.0,471.6 1089.6,489.5 1104.0,505.8 1096.9,503.2 1089.8,506.2 1082.7,503.1 1075.6,507.7 1068.4,504.7 1061.3,507.9 1054.2,503.8 1047.1,505.7 1040.0,502.1 1054.4,489.5" fill="#1c5d44" />
<polygon points="1072.0,471.6 1088.0,488.9 1100.2,501.9 1093.9,499.8 1087.6,502.9 1081.4,500.7 1075.1,503.9 1068.9,501.2 1062.6,503.4 1056.4,500.2 1050.1,502.4 1043.8,499.3 1056.0,488.9" fill="#2b8457" />
<polygon points="1072.0,471.6 1075.8,489.5 1075.1,503.9 1068.9,501.2 1062.6,503.4 1056.4,500.2 1050.1,502.4 1043.8,499.3 1056.0,488.9" fill="#3aa167" />
<polygon points="1072.0,463.7 1087.9,479.0 1100.9,493.1 1093.6,490.4 1086.4,494.5 1079.2,490.7 1072.0,495.3 1064.8,491.1 1057.6,494.5 1050.4,490.1 1043.1,492.9 1056.1,479.0" fill="#1c5d44" />
<polygon points="1072.0,463.7 1086.4,478.5 1097.4,488.9 1091.0,486.8 1084.7,490.0 1078.3,487.9 1072.0,491.1 1065.7,487.9 1059.3,490.0 1053.0,486.8 1046.6,488.9 1057.6,478.5" fill="#2b8457" />
<polygon points="1072.0,463.7 1075.5,479.0 1072.0,491.1 1065.7,487.9 1059.3,490.0 1053.0,486.8 1046.6,488.9 1057.6,478.5" fill="#3aa167" />
<polygon points="1072.0,455.8 1086.1,468.5 1097.6,479.8 1090.3,477.3 1083.0,480.8 1075.7,477.8 1068.3,482.1 1061.0,477.5 1053.7,480.9 1046.4,475.6 1057.9,468.5" fill="#1c5d44" />
<polygon points="1072.0,455.8 1084.8,468.0 1094.5,475.9 1088.1,473.8 1081.6,477.1 1075.2,475.1 1068.8,477.8 1062.4,474.5 1055.9,476.5 1049.5,473.2 1059.2,468.0" fill="#2b8457" />
<polygon points="1072.0,455.8 1075.1,468.5 1075.2,475.1 1068.8,477.8 1062.4,474.5 1055.9,476.5 1049.5,473.2 1059.2,468.0" fill="#3aa167" />
<polygon points="1072.0,447.9 1084.1,458.1 1094.0,466.7 1086.7,464.6 1079.3,468.3 1072.0,465.0 1064.7,468.8 1057.3,463.3 1050.0,467.2 1059.9,458.1" fill="#1c5d44" />
<polygon points="1072.0,447.9 1083.0,457.5 1091.4,462.9 1084.9,460.9 1078.5,464.3 1072.0,462.4 1065.5,464.3 1059.1,460.9 1052.6,462.9 1061.0,457.5" fill="#2b8457" />
<polygon points="1072.0,447.9 1074.6,458.1 1072.0,462.4 1065.5,464.3 1059.1,460.9 1052.6,462.9 1061.0,457.5" fill="#3aa167" />
<polygon points="1072.0,440.0 1082.0,447.6 1090.1,454.4 1082.9,450.7 1075.6,456.2 1068.4,452.4 1061.1,454.4 1053.9,449.7 1062.0,447.6" fill="#1c5d44" />
<polygon points="1072.0,440.0 1081.0,447.1 1087.9,449.8 1081.6,448.1 1075.2,451.6 1068.8,448.9 1062.4,450.7 1056.1,447.2 1063.0,447.1" fill="#2b8457" />
<polygon points="1072.0,440.0 1074.2,447.6 1075.2,451.6 1068.8,448.9 1062.4,450.7 1056.1,447.2 1063.0,447.1" fill="#3aa167" />
<ellipse cx="1310.0" cy="557.7" rx="22.4" ry="5.0" fill="#2a7d48" opacity=".5"/>
<rect x="1305.5" y="541.6" width="9.0" height="18.4" fill="#4a2f2b"/>
<polygon points="1310.0,494.1 1325.4,521.9 1338.0,546.4 1331.8,541.9 1325.6,548.9 1319.3,544.7 1313.1,550.2 1306.9,544.1 1300.7,548.8 1294.4,542.6 1288.2,549.0 1282.0,540.9 1294.6,521.9" fill="#1c5d44" />
<polygon points="1310.0,494.1 1324.0,521.0 1334.6,541.2 1329.2,537.9 1323.7,542.8 1318.2,539.4 1312.7,544.3 1307.3,540.2 1301.8,543.5 1296.3,538.6 1290.8,542.0 1285.4,537.1 1296.0,521.0" fill="#2b8457" />
<polygon points="1310.0,494.1 1313.4,521.9 1312.7,544.3 1307.3,540.2 1301.8,543.5 1296.3,538.6 1290.8,542.0 1285.4,537.1 1296.0,521.0" fill="#3aa167" />
<polygon points="1310.0,481.8 1323.9,505.6 1335.3,527.8 1328.9,522.2 1322.6,529.6 1316.3,523.3 1310.0,531.0 1303.7,523.7 1297.4,529.9 1291.1,523.1 1284.7,527.5 1296.1,505.6" fill="#1c5d44" />
<polygon points="1310.0,481.8 1322.6,504.8 1332.2,521.0 1326.7,517.7 1321.1,522.7 1315.6,519.4 1310.0,524.4 1304.4,519.4 1298.9,522.7 1293.3,517.7 1287.8,521.0 1297.4,504.8" fill="#2b8457" />
<polygon points="1310.0,481.8 1313.0,505.6 1310.0,524.4 1304.4,519.4 1298.9,522.7 1293.3,517.7 1287.8,521.0 1297.4,504.8" fill="#3aa167" />
<polygon points="1310.0,469.5 1322.3,489.3 1332.4,506.8 1326.0,501.8 1319.6,507.7 1313.2,505.3 1306.8,509.6 1300.4,502.9 1294.0,506.8 1287.6,501.6 1297.7,489.3" fill="#1c5d44" />
<polygon points="1310.0,469.5 1321.2,488.5 1329.7,500.8 1324.1,497.6 1318.4,502.7 1312.8,499.6 1307.2,503.7 1301.6,498.6 1295.9,501.7 1290.3,496.6 1298.8,488.5" fill="#2b8457" />
<polygon points="1310.0,469.5 1312.7,489.3 1312.8,499.6 1307.2,503.7 1301.6,498.6 1295.9,501.7 1290.3,496.6 1298.8,488.5" fill="#3aa167" />
<polygon points="1310.0,457.3 1320.6,473.1 1329.3,486.4 1322.8,481.2 1316.4,489.4 1310.0,483.7 1303.6,489.3 1297.2,481.5 1290.7,485.8 1299.4,473.1" fill="#1c5d44" />
<polygon points="1310.0,457.3 1319.6,472.3 1327.0,480.5 1321.3,477.5 1315.7,482.8 1310.0,479.8 1304.3,482.8 1298.7,477.5 1293.0,480.5 1300.4,472.3" fill="#2b8457" />
<polygon points="1310.0,457.3 1312.3,473.1 1310.0,479.8 1304.3,482.8 1298.7,477.5 1293.0,480.5 1300.4,472.3" fill="#3aa167" />
<polygon points="1310.0,445.0 1318.7,456.8 1325.8,466.9 1319.5,463.2 1313.2,468.7 1306.8,463.8 1300.5,468.7 1294.2,460.5 1301.3,456.8" fill="#1c5d44" />
<polygon points="1310.0,445.0 1317.9,456.0 1323.9,460.3 1318.4,457.5 1312.8,463.0 1307.2,458.9 1301.6,461.7 1296.1,456.1 1302.1,456.0" fill="#2b8457" />
<polygon points="1310.0,445.0 1311.9,456.8 1312.8,463.0 1307.2,458.9 1301.6,461.7 1296.1,456.1 1302.1,456.0" fill="#3aa167" />
<polygon points="1197.0,388.0 1190.0,415.0 1181.0,471.0 1172.0,527.0 1169.0,560.0 1186.0,577.0 1210.0,590.0 1213.0,610.0 1222.0,640.0 1227.0,646.0 1241.0,635.0 1263.0,602.0 1277.0,566.0 1291.0,504.0 1302.0,452.0 1319.0,402.0 1322.0,388.0" fill="#5f4337" />
<polygon points="1197.0,388.0 1190.0,415.0 1181.0,471.0 1172.0,527.0 1169.0,560.0 1186.0,577.0 1210.0,590.0 1213.0,610.0 1222.0,640.0 1227.0,646.0 1228.0,600.0 1215.0,540.0 1208.0,480.0 1212.0,420.0 1218.0,392.0" fill="#45312b" opacity=".6"/>
<clipPath id="pc"><polygon points="1197.0,388.0 1190.0,415.0 1181.0,471.0 1172.0,527.0 1169.0,560.0 1186.0,577.0 1210.0,590.0 1213.0,610.0 1222.0,640.0 1227.0,646.0 1241.0,635.0 1263.0,602.0 1277.0,566.0 1291.0,504.0 1302.0,452.0 1319.0,402.0 1322.0,388.0"/></clipPath><g clip-path="url(#pc)">
<polygon points="1222.0,402.9 1252.0,400.0 1250.5,436.0 1223.5,434.2" fill="#725141" opacity=".75"/>
<polygon points="1258.0,401.2 1288.0,398.0 1286.5,438.0 1259.5,436.0" fill="#725141" opacity=".75"/>
<polygon points="1292.0,405.0 1314.0,402.0 1312.9,440.0 1293.1,438.1" fill="#725141" opacity=".75"/>
<polygon points="1216.0,449.2 1244.0,446.0 1242.6,486.0 1217.4,484.0" fill="#725141" opacity=".75"/>
<polygon points="1250.0,451.4 1278.0,448.0 1276.6,490.0 1251.4,487.9" fill="#725141" opacity=".75"/>
<polygon points="1282.0,455.2 1300.0,452.0 1299.1,492.0 1282.9,490.0" fill="#725141" opacity=".75"/>
<polygon points="1212.0,499.0 1238.0,496.0 1236.7,534.0 1213.3,532.1" fill="#725141" opacity=".75"/>
<polygon points="1244.0,503.2 1270.0,500.0 1268.7,540.0 1245.3,538.0" fill="#725141" opacity=".75"/>
<polygon points="1272.0,506.9 1288.0,504.0 1287.2,540.0 1272.8,538.2" fill="#725141" opacity=".75"/>
<polygon points="1214.0,546.7 1238.0,544.0 1236.8,578.0 1215.2,576.3" fill="#725141" opacity=".75"/>
<polygon points="1242.0,550.7 1266.0,548.0 1264.8,582.0 1243.2,580.3" fill="#725141" opacity=".75"/>
<polygon points="1224.0,592.4 1246.0,590.0 1244.9,620.0 1225.1,618.5" fill="#725141" opacity=".75"/>
</g>
<ellipse cx="1259.500" cy="386" rx="62.500" ry="6.500" fill="#d8a792"/>
<g stroke="#6fd0e8" stroke-width=".7" fill="none" opacity=".45"><path d="M1205 400l15 220M1235 395l5 240M1265 395l-12 225M1297 395l-32 205M1188 440l118 6M1178 500l114 5M1172 550l106 4"/></g>
<rect x="1288.5" y="315.0" width="6.5" height="68.0" rx="3.2" fill="#8a8672" stroke="#15150f" stroke-width="1.800"/>
<rect x="1295.5" y="332.0" width="5.0" height="51.0" rx="2.5" fill="#8a8672" stroke="#15150f" stroke-width="1.800"/>
<rect x="1301.0" y="351.0" width="4.5" height="32.0" rx="2.2" fill="#8a8672" stroke="#15150f" stroke-width="1.800"/>
<rect x="1277.0" y="321.0" width="6.0" height="30.0" rx="3.0" fill="#8a8672" stroke="#15150f" stroke-width="1.800"/>
<polygon points="1182.0,379.0 1188.0,379.0 1188.0,400.0 1182.0,400.0" fill="#8a8672" stroke="#15150f" stroke-width="2" stroke-linejoin="round"/>
<polygon points="1188.0,390.0 1188.0,367.0 1197.0,367.0 1212.0,352.0 1216.0,352.0 1216.0,390.0" fill="#8a8672" stroke="#15150f" stroke-width="2" stroke-linejoin="round"/>
<polygon points="1220.0,388.0 1220.0,365.0 1228.0,365.0 1231.0,361.0 1233.0,361.0 1233.0,388.0" fill="#8a8672" stroke="#15150f" stroke-width="2" stroke-linejoin="round"/>
<polygon points="1232.0,348.0 1248.0,348.0 1248.0,367.0 1232.0,367.0" fill="#8a8672" stroke="#15150f" stroke-width="2" stroke-linejoin="round"/>
<polygon points="1248.0,349.0 1254.0,349.0 1275.0,370.0 1269.0,374.0" fill="#8a8672" stroke="#15150f" stroke-width="1.8" stroke-linejoin="round"/>
<polygon points="1248.0,361.0 1253.0,359.0 1270.0,378.0 1265.0,382.0" fill="#8a8672" stroke="#15150f" stroke-width="1.8" stroke-linejoin="round"/>
<polygon points="1232.0,336.0 1243.0,336.0 1243.0,346.0 1232.0,346.0" fill="#8a8672" stroke="#15150f" stroke-width="2" stroke-linejoin="round"/>
<polygon points="1243.0,349.0 1243.0,329.0 1249.0,328.0 1268.0,313.0 1272.0,313.0 1272.0,349.0" fill="#8a8672" stroke="#15150f" stroke-width="2" stroke-linejoin="round"/>
<rect x="1263" y="333" width="17" height="16" fill="#d98a55"/>
<rect x="1262" y="349" width="21" height="17" fill="#d98a55"/>
<rect x="1238" y="368" width="17" height="15" fill="#d98a55"/>
<rect x="1275" y="368" width="16" height="15" fill="#d98a55"/>
<ellipse cx="1259.500" cy="386.500" rx="62.500" ry="5.500" fill="#ddab99"/>
<polygon points="1070.0,422.0 1070.0,410.2 1073.5,410.2 1091.0,394.0 1095.0,394.0 1095.0,422.0" fill="#8a8672" stroke="#15150f" stroke-width="2" stroke-linejoin="round"/>
<rect x="1097.0" y="406.0" width="4.0" height="18.0" rx="2.0" fill="#8a8672" stroke="#15150f" stroke-width="1.800"/>
<rect x="1104.0" y="397.0" width="8.0" height="27.0" rx="4.0" fill="#8a8672" stroke="#15150f" stroke-width="1.800"/>
<rect x="1114.0" y="399.0" width="4.0" height="26.0" rx="2.0" fill="#8a8672" stroke="#15150f" stroke-width="1.800"/>
<rect x="1082" y="417" width="13" height="6" fill="#d98a55"/>
<polygon points="1134.0,441.0 1134.0,428.4 1137.9,428.4 1157.5,411.0 1162.0,411.0 1162.0,441.0" fill="#8a8672" stroke="#15150f" stroke-width="2" stroke-linejoin="round"/>
<rect x="1168.0" y="426.0" width="6.0" height="16.0" rx="3.0" fill="#8a8672" stroke="#15150f" stroke-width="1.800"/>
<rect x="1179.0" y="414.0" width="6.0" height="27.0" rx="3.0" fill="#8a8672" stroke="#15150f" stroke-width="1.800"/>
<circle cx="1160" cy="436" r="4.500" fill="#e0603a"/>
<polygon points="647.0,690.0 668.0,672.0 720.0,640.0 790.0,610.0 900.0,580.0 937.0,570.0 1002.0,668.0 1003.0,692.0 920.0,741.0 727.0,786.0 690.0,786.0 675.0,778.0 647.0,726.0" fill="#81847a" />
<polygon points="647.0,690.0 668.0,672.0 720.0,640.0 790.0,610.0 900.0,580.0 937.0,570.0 1002.0,668.0 1003.0,676.0 920.0,722.0 815.0,746.0 727.0,766.0 690.0,766.0 675.0,759.0 648.0,700.0" fill="#62cc65" />
<polygon points="652.0,690.0 668.0,674.0 720.0,642.0 790.0,612.0 900.0,582.0 935.0,573.0 996.0,668.0 918.0,712.0 815.0,736.0 727.0,756.0 692.0,756.0 680.0,750.0 655.0,700.0" fill="#46b85e" stroke="#a6f2ee" stroke-width=".8" stroke-opacity=".55"/>
<polygon points="745.0,627.0 800.0,612.0 890.0,600.0 935.0,600.0 960.0,640.0 940.0,670.0 880.0,690.0 815.0,700.0 760.0,715.0 700.0,712.0 690.0,700.0 720.0,660.0" fill="#f4dba8" />
<polygon points="745.0,627.0 790.0,620.0 800.0,650.0 760.0,680.0 720.0,690.0 700.0,700.0 720.0,660.0" fill="#e6c795" opacity=".6"/>
<path d="M765 540L770 575A36.0 11.2 0 0 0 842 575L847 540Z" fill="#664839" />
<path d="M816.2 554L814.2 584.8A36.0 11.2 0 0 0 842 575L847 540Z" fill="#4c352e" opacity=".55"/>
<ellipse cx="806.0" cy="540" rx="41.0" ry="14" fill="#d8a792"/>
<ellipse cx="806.0" cy="540" rx="41.0" ry="14" fill="none" stroke="#8fe0f0" stroke-width=".8" opacity=".6"/>
<path d="M880 520L884 572A29.5 8.0 0 0 0 943 572L947 520Z" fill="#664839" />
<path d="M921.9 530L920.2 579.0A29.5 8.0 0 0 0 943 572L947 520Z" fill="#4c352e" opacity=".55"/>
<ellipse cx="913.5" cy="520" rx="33.5" ry="10" fill="#d8a792"/>
<ellipse cx="913.5" cy="520" rx="33.5" ry="10" fill="none" stroke="#8fe0f0" stroke-width=".8" opacity=".6"/>
<path d="M701 582L707 610A41.0 13.6 0 0 0 789 610L795 582Z" fill="#664839" />
<path d="M759.8 599L757.4 621.9A41.0 13.6 0 0 0 789 610L795 582Z" fill="#4c352e" opacity=".55"/>
<ellipse cx="748.0" cy="582" rx="47.0" ry="17" fill="#d8a792"/>
<ellipse cx="748.0" cy="582" rx="47.0" ry="17" fill="none" stroke="#8fe0f0" stroke-width=".8" opacity=".6"/>
<path d="M692 628L698 660A31.0 12.8 0 0 0 760 660L766 628Z" fill="#664839" />
<path d="M738.2 644L736.4 671.2A31.0 12.8 0 0 0 760 660L766 628Z" fill="#4c352e" opacity=".55"/>
<ellipse cx="729.0" cy="628" rx="37.0" ry="16" fill="#d8a792"/>
<ellipse cx="729.0" cy="628" rx="37.0" ry="16" fill="none" stroke="#8fe0f0" stroke-width=".8" opacity=".6"/>
<ellipse cx="832.0" cy="620.6" rx="24.8" ry="5.6" fill="#2a7d48" opacity=".5"/>
<rect x="827.0" y="610.5" width="9.9" height="11.5" fill="#4a2f2b"/>
<polygon points="832.0,580.7 849.0,598.1 863.0,614.2 856.1,610.4 849.2,614.6 842.3,611.5 835.4,615.6 828.6,612.6 821.7,615.3 814.8,612.1 807.9,615.0 801.0,610.6 815.0,598.1" fill="#1c5d44" />
<polygon points="832.0,580.7 847.5,597.6 859.3,610.2 853.2,608.1 847.2,611.2 841.1,609.1 835.0,612.2 829.0,609.6 822.9,611.7 816.8,608.6 810.8,610.7 804.7,607.7 816.5,597.6" fill="#2b8457" />
<polygon points="832.0,580.7 835.7,598.1 835.0,612.2 829.0,609.6 822.9,611.7 816.8,608.6 810.8,610.7 804.7,607.7 816.5,597.6" fill="#3aa167" />
<polygon points="832.0,573.0 847.4,587.9 860.0,600.7 853.0,599.1 846.0,602.2 839.0,599.6 832.0,603.4 825.0,599.1 818.0,602.6 811.0,599.1 804.0,601.8 816.6,587.9" fill="#1c5d44" />
<polygon points="832.0,573.0 846.0,587.4 856.6,597.6 850.5,595.5 844.3,598.7 838.2,596.6 832.0,599.7 825.8,596.6 819.7,598.7 813.5,595.5 807.4,597.6 818.0,587.4" fill="#2b8457" />
<polygon points="832.0,573.0 835.4,587.9 832.0,599.7 825.8,596.6 819.7,598.7 813.5,595.5 807.4,597.6 818.0,587.4" fill="#3aa167" />
<polygon points="832.0,565.4 845.6,577.8 856.8,588.1 849.7,585.6 842.6,589.6 835.5,587.7 828.5,591.1 821.4,587.2 814.3,588.7 807.2,585.1 818.4,577.8" fill="#1c5d44" />
<polygon points="832.0,565.4 844.4,577.2 853.8,584.9 847.6,582.9 841.3,586.1 835.1,584.2 828.9,586.8 822.7,583.5 816.4,585.5 810.2,582.3 819.6,577.2" fill="#2b8457" />
<polygon points="832.0,565.4 835.0,577.8 835.1,584.2 828.9,586.8 822.7,583.5 816.4,585.5 810.2,582.3 819.6,577.2" fill="#3aa167" />
<polygon points="832.0,557.7 843.7,567.6 853.3,576.3 846.2,572.8 839.1,577.8 832.0,574.1 824.9,577.0 817.8,573.9 810.7,575.4 820.3,567.6" fill="#1c5d44" />
<polygon points="832.0,557.7 842.7,567.1 850.8,572.2 844.5,570.4 838.3,573.7 832.0,571.8 825.7,573.7 819.5,570.4 813.2,572.2 821.3,567.1" fill="#2b8457" />
<polygon points="832.0,557.7 834.6,567.6 832.0,571.8 825.7,573.7 819.5,570.4 813.2,572.2 821.3,567.1" fill="#3aa167" />
<polygon points="832.0,550.0 841.6,557.4 849.5,562.7 842.5,560.7 835.5,565.3 828.5,561.9 821.5,564.8 814.5,559.8 822.4,557.4" fill="#1c5d44" />
<polygon points="832.0,550.0 840.8,556.9 847.4,559.6 841.3,557.8 835.1,561.3 828.9,558.7 822.7,560.4 816.6,557.0 823.2,556.9" fill="#2b8457" />
<polygon points="832.0,550.0 834.1,557.4 835.1,561.3 828.9,558.7 822.7,560.4 816.6,557.0 823.2,556.9" fill="#3aa167" />
<ellipse cx="683.0" cy="692.7" rx="21.6" ry="4.9" fill="#2a7d48" opacity=".5"/>
<rect x="678.7" y="683.8" width="8.6" height="10.2" fill="#4a2f2b"/>
<polygon points="683.0,657.3 697.9,672.8 710.0,687.2 704.0,684.6 698.0,687.3 692.0,685.5 686.0,688.4 680.0,685.7 674.0,687.8 668.0,685.1 662.0,687.4 656.0,683.8 668.1,672.8" fill="#1c5d44" />
<polygon points="683.0,657.3 696.5,672.3 706.8,683.6 701.5,681.7 696.2,684.4 690.9,682.5 685.6,685.3 680.4,683.0 675.1,684.8 669.8,682.1 664.5,684.0 659.2,681.3 669.5,672.3" fill="#2b8457" />
<polygon points="683.0,657.3 686.2,672.8 685.6,685.3 680.4,683.0 675.1,684.8 669.8,682.1 664.5,684.0 659.2,681.3 669.5,672.3" fill="#3aa167" />
<polygon points="683.0,650.5 696.4,663.7 707.4,675.6 701.3,672.8 695.2,677.0 689.1,673.8 683.0,677.8 676.9,674.6 670.8,676.3 664.7,673.0 658.6,675.9 669.6,663.7" fill="#1c5d44" />
<polygon points="683.0,650.5 695.2,663.3 704.4,672.3 699.1,670.5 693.7,673.3 688.4,671.4 683.0,674.2 677.6,671.4 672.3,673.3 666.9,670.5 661.6,672.3 670.8,663.3" fill="#2b8457" />
<polygon points="683.0,650.5 685.9,663.7 683.0,674.2 677.6,671.4 672.3,673.3 666.9,670.5 661.6,672.3 670.8,663.3" fill="#3aa167" />
<polygon points="683.0,643.6 694.9,654.7 704.6,663.9 698.4,661.4 692.2,665.7 686.1,663.5 679.9,666.5 673.8,662.5 667.6,665.3 661.4,660.9 671.1,654.7" fill="#1c5d44" />
<polygon points="683.0,643.6 693.8,654.2 702.0,661.0 696.6,659.3 691.1,662.1 685.7,660.4 680.3,662.7 674.9,659.8 669.4,661.6 664.0,658.7 672.2,654.2" fill="#2b8457" />
<polygon points="683.0,643.6 685.6,654.7 685.7,660.4 680.3,662.7 674.9,659.8 669.4,661.6 664.0,658.7 672.2,654.2" fill="#3aa167" />
<polygon points="683.0,636.8 693.2,645.6 701.6,652.7 695.4,651.2 689.2,654.3 683.0,652.4 676.8,653.8 670.6,651.1 664.4,653.7 672.8,645.6" fill="#1c5d44" />
<polygon points="683.0,636.8 692.3,645.2 699.4,649.8 693.9,648.1 688.5,651.0 683.0,649.4 677.5,651.0 672.1,648.1 666.6,649.8 673.7,645.2" fill="#2b8457" />
<polygon points="683.0,636.8 685.2,645.6 683.0,649.4 677.5,651.0 672.1,648.1 666.6,649.8 673.7,645.2" fill="#3aa167" />
<polygon points="683.0,630.0 691.4,636.6 698.3,641.4 692.2,640.2 686.1,643.3 679.9,640.9 673.8,642.5 667.7,638.3 674.6,636.6" fill="#1c5d44" />
<polygon points="683.0,630.0 690.6,636.1 696.4,638.5 691.1,637.0 685.7,640.0 680.3,637.7 674.9,639.3 669.6,636.2 675.4,636.1" fill="#2b8457" />
<polygon points="683.0,630.0 684.8,636.6 685.7,640.0 680.3,637.7 674.9,639.3 669.6,636.2 675.4,636.1" fill="#3aa167" />
<ellipse cx="775.0" cy="648.7" rx="16.0" ry="3.6" fill="#2a7d48" opacity=".5"/>
<rect x="771.8" y="639.6" width="6.4" height="10.4" fill="#4a2f2b"/>
<polygon points="775.0,612.7 786.0,628.4 795.0,643.1 790.6,640.1 786.1,644.0 781.7,641.4 777.2,644.7 772.8,641.9 768.3,643.6 763.9,640.0 759.4,643.1 755.0,640.1 764.0,628.4" fill="#1c5d44" />
<polygon points="775.0,612.7 785.0,628.0 792.6,639.4 788.7,637.5 784.8,640.3 780.9,638.4 777.0,641.1 773.0,638.8 769.1,640.7 765.2,637.9 761.3,639.8 757.4,637.1 765.0,628.0" fill="#2b8457" />
<polygon points="775.0,612.7 777.4,628.4 777.0,641.1 773.0,638.8 769.1,640.7 765.2,637.9 761.3,639.8 757.4,637.1 765.0,628.0" fill="#3aa167" />
<polygon points="775.0,605.8 784.9,619.3 793.0,631.7 788.5,628.6 784.0,632.0 779.5,630.3 775.0,633.4 770.5,629.5 766.0,631.8 761.5,628.2 757.0,631.9 765.1,619.3" fill="#1c5d44" />
<polygon points="775.0,605.8 784.0,618.8 790.9,628.0 786.9,626.1 782.9,628.9 779.0,627.1 775.0,629.9 771.0,627.1 767.1,628.9 763.1,626.1 759.1,628.0 766.0,618.8" fill="#2b8457" />
<polygon points="775.0,605.8 777.2,619.3 775.0,629.9 771.0,627.1 767.1,628.9 763.1,626.1 759.1,628.0 766.0,618.8" fill="#3aa167" />
<polygon points="775.0,598.9 783.8,610.1 791.0,619.9 786.4,617.7 781.8,621.6 777.3,618.0 772.7,621.0 768.2,617.9 763.6,620.4 759.0,616.2 766.2,610.1" fill="#1c5d44" />
<polygon points="775.0,598.9 783.0,609.6 789.1,616.5 785.0,614.7 781.0,617.6 777.0,615.8 773.0,618.2 769.0,615.3 765.0,617.1 760.9,614.2 767.0,609.6" fill="#2b8457" />
<polygon points="775.0,598.9 776.9,610.1 777.0,615.8 773.0,618.2 769.0,615.3 765.0,617.1 760.9,614.2 767.0,609.6" fill="#3aa167" />
<polygon points="775.0,591.9 782.6,600.9 788.8,608.2 784.2,606.1 779.6,609.9 775.0,606.9 770.4,609.5 765.8,605.5 761.2,609.1 767.4,600.9" fill="#1c5d44" />
<polygon points="775.0,591.9 781.9,600.4 787.1,605.1 783.1,603.4 779.0,606.4 775.0,604.7 771.0,606.4 766.9,603.4 762.9,605.1 768.1,600.4" fill="#2b8457" />
<polygon points="775.0,591.9 776.7,600.9 775.0,604.7 771.0,606.4 766.9,603.4 762.9,605.1 768.1,600.4" fill="#3aa167" />
<polygon points="775.0,585.0 781.2,591.7 786.3,597.1 781.8,594.1 777.3,598.5 772.7,595.2 768.2,598.3 763.7,594.2 768.8,591.7" fill="#1c5d44" />
<polygon points="775.0,585.0 780.7,591.2 785.0,593.6 781.0,592.1 777.0,595.2 773.0,592.9 769.0,594.4 765.0,591.3 769.3,591.2" fill="#2b8457" />
<polygon points="775.0,585.0 776.4,591.7 777.0,595.2 773.0,592.9 769.0,594.4 765.0,591.3 769.3,591.2" fill="#3aa167" />
<ellipse cx="920.0" cy="709.3" rx="28.8" ry="6.5" fill="#2a7d48" opacity=".5"/>
<rect x="914.2" y="690.6" width="11.5" height="21.4" fill="#4a2f2b"/>
<polygon points="920.0,635.2 939.8,667.5 956.0,696.9 948.0,691.8 940.0,697.9 932.0,694.6 924.0,700.9 916.0,694.6 908.0,699.3 900.0,691.4 892.0,698.9 884.0,690.4 900.2,667.5" fill="#1c5d44" />
<polygon points="920.0,635.2 938.0,666.6 951.7,690.1 944.6,686.2 937.6,691.9 930.6,688.0 923.5,693.7 916.5,688.9 909.4,692.8 902.4,687.1 895.4,691.0 888.3,685.3 902.0,666.6" fill="#2b8457" />
<polygon points="920.0,635.2 924.3,667.5 923.5,693.7 916.5,688.9 909.4,692.8 902.4,687.1 895.4,691.0 888.3,685.3 902.0,666.6" fill="#3aa167" />
<polygon points="920.0,620.9 937.9,648.6 952.5,673.4 944.4,667.8 936.2,676.2 928.1,670.0 920.0,677.1 911.9,669.0 903.8,675.0 895.6,668.3 887.5,673.6 902.1,648.6" fill="#1c5d44" />
<polygon points="920.0,620.9 936.2,647.6 948.6,666.5 941.4,662.7 934.3,668.6 927.1,664.7 920.0,670.6 912.9,664.7 905.7,668.6 898.6,662.7 891.4,666.5 903.8,647.6" fill="#2b8457" />
<polygon points="920.0,620.9 923.9,648.6 920.0,670.6 912.9,664.7 905.7,668.6 898.6,662.7 891.4,666.5 903.8,647.6" fill="#3aa167" />
<polygon points="920.0,606.6 935.8,629.7 948.8,650.8 940.5,644.2 932.3,652.0 924.1,648.0 915.9,652.4 907.7,646.1 899.5,651.0 891.2,644.2 904.2,629.7" fill="#1c5d44" />
<polygon points="920.0,606.6 934.4,628.7 945.3,643.0 938.1,639.3 930.8,645.3 923.6,641.6 916.4,646.4 909.2,640.4 901.9,644.1 894.7,638.1 905.6,628.7" fill="#2b8457" />
<polygon points="920.0,606.6 923.5,629.7 923.6,641.6 916.4,646.4 909.2,640.4 901.9,644.1 894.7,638.1 905.6,628.7" fill="#3aa167" />
<polygon points="920.0,592.3 933.6,610.7 944.8,626.5 936.5,621.5 928.3,630.1 920.0,624.0 911.7,628.1 903.5,622.6 895.2,625.5 906.4,610.7" fill="#1c5d44" />
<polygon points="920.0,592.3 932.4,609.8 941.8,619.4 934.5,615.9 927.3,622.1 920.0,618.6 912.7,622.1 905.5,615.9 898.2,619.4 907.6,609.8" fill="#2b8457" />
<polygon points="920.0,592.3 923.0,610.7 920.0,618.6 912.7,622.1 905.5,615.9 898.2,619.4 907.6,609.8" fill="#3aa167" />
<polygon points="920.0,578.0 931.2,591.8 940.4,601.7 932.2,598.1 924.1,606.2 915.9,600.1 907.8,605.1 899.6,596.6 908.8,591.8" fill="#1c5d44" />
<polygon points="920.0,578.0 930.2,590.8 937.9,595.8 930.8,592.6 923.6,599.0 916.4,594.2 909.2,597.4 902.1,591.0 909.8,590.8" fill="#2b8457" />
<polygon points="920.0,578.0 922.4,591.8 923.6,599.0 916.4,594.2 909.2,597.4 902.1,591.0 909.8,590.8" fill="#3aa167" />
<ellipse cx="725.0" cy="711.0" rx="20.0" ry="11.0" fill="#3ea35a"/>
<ellipse cx="722.0" cy="708.0" rx="15.0" ry="6.0" fill="#4db566"/>
<ellipse cx="780.0" cy="719.0" rx="25.0" ry="11.0" fill="#3ea35a"/>
<ellipse cx="777.0" cy="716.0" rx="20.0" ry="6.0" fill="#4db566"/>
<ellipse cx="873.0" cy="680.0" rx="25.0" ry="12.0" fill="#3ea35a"/>
<ellipse cx="870.0" cy="677.0" rx="20.0" ry="7.0" fill="#4db566"/>
<ellipse cx="834.0" cy="701.0" rx="22.0" ry="11.0" fill="#3ea35a"/>
<ellipse cx="831.0" cy="698.0" rx="17.0" ry="6.0" fill="#4db566"/>
<ellipse cx="702.0" cy="683.0" rx="12.0" ry="11.0" fill="#3ea35a"/>
<ellipse cx="699.0" cy="680.0" rx="7.0" ry="6.0" fill="#4db566"/>
<polygon points="965.0,477.4 971.6,477.4 990.5,456.0 993.6,456.0 993.6,507.0 990.5,507.0 971.6,493.7 965.0,493.7" fill="#8a8672" stroke="#15150f" stroke-width="2" stroke-linejoin="round"/>
<rect x="999.7" y="472.3" width="5.1" height="23.5" rx="2.6" fill="#8a8672" stroke="#15150f" stroke-width="1.800"/>
<rect x="1010.9" y="459.1" width="6.6" height="46.9" rx="3.3" fill="#8a8672" stroke="#15150f" stroke-width="1.800"/>
<polygon points="855.0,511.0 861.5,511.0 882.0,490.0 885.0,490.0 885.0,540.0 882.0,540.0 861.5,527.0 855.0,527.0" fill="#8a8672" stroke="#15150f" stroke-width="2" stroke-linejoin="round"/>
<rect x="900.0" y="500.0" width="6.0" height="25.0" rx="3.0" fill="#8a8672" stroke="#15150f" stroke-width="1.800"/>
<rect x="907.5" y="490.0" width="5.0" height="31.0" rx="2.5" fill="#8a8672" stroke="#15150f" stroke-width="1.800"/>
<rect x="912.5" y="491.0" width="4.0" height="29.0" rx="2.0" fill="#8a8672" stroke="#15150f" stroke-width="1.800"/>
<polygon points="715.0,530.4 722.5,530.4 726.6,506.0 730.1,506.0 730.1,564.0 726.6,564.0 722.5,548.9 715.0,548.9" fill="#8a8672" stroke="#15150f" stroke-width="2" stroke-linejoin="round"/>
<rect x="737.0" y="526.3" width="5.2" height="49.3" rx="2.6" fill="#8a8672" stroke="#15150f" stroke-width="1.800"/>
<rect x="746.9" y="507.2" width="5.8" height="63.8" rx="2.9" fill="#8a8672" stroke="#15150f" stroke-width="1.800"/>
<rect x="754.4" y="523.4" width="4.6" height="46.4" rx="2.3" fill="#8a8672" stroke="#15150f" stroke-width="1.800"/>
<rect x="720" y="526" width="16" height="28" fill="#d98a55"/>
<rect x="880" y="513" width="11" height="10" fill="#d98a55"/>
<polygon points="855.0,573.9 860.9,573.9 877.5,555.0 880.2,555.0 880.2,600.0 877.5,600.0 860.9,588.3 855.0,588.3" fill="#8a8672" stroke="#15150f" stroke-width="2" stroke-linejoin="round"/>
<rect x="887.4" y="559.5" width="5.4" height="45.0" rx="2.7" fill="#8a8672" stroke="#15150f" stroke-width="1.800"/>
<rect x="897.8" y="555.0" width="5.4" height="56.2" rx="2.7" fill="#8a8672" stroke="#15150f" stroke-width="1.800"/>
<polygon points="861.0,608.0 865.0,608.0 887.0,595.0 888.9,595.0 888.9,626.0 887.0,626.0 865.0,617.9 861.0,617.9" fill="#8a8672" stroke="#15150f" stroke-width="2" stroke-linejoin="round"/>
<polygon points="1099.0,514.0 1099.0,501.4 1102.6,501.4 1120.8,484.0 1125.0,484.0 1125.0,514.0" fill="#8a8672" stroke="#15150f" stroke-width="2" stroke-linejoin="round"/>
<rect x="1140.0" y="485.0" width="6.0" height="29.0" rx="3.0" fill="#8a8672" stroke="#15150f" stroke-width="1.800"/>
<rect x="1129.0" y="498.0" width="5.0" height="16.0" rx="2.5" fill="#8a8672" stroke="#15150f" stroke-width="1.800"/>
<polygon points="1125.0,550.0 1125.0,537.0 1129.1,537.0 1149.4,519.0 1154.0,519.0 1154.0,550.0" fill="#8a8672" stroke="#15150f" stroke-width="2" stroke-linejoin="round"/>
<rect x="1160.0" y="528.0" width="5.0" height="22.0" rx="2.5" fill="#8a8672" stroke="#15150f" stroke-width="1.800"/>
<rect x="1169.0" y="522.0" width="5.0" height="28.0" rx="2.5" fill="#8a8672" stroke="#15150f" stroke-width="1.800"/>
<circle cx="1127" cy="508" r="4.500" fill="#e0603a"/><circle cx="1155" cy="544" r="4.500" fill="#e0603a"/>
<polygon points="711.0,684.3 717.0,684.3 733.5,665.0 736.3,665.0 736.3,711.0 733.5,711.0 717.0,699.0 711.0,699.0" fill="#8a8672" stroke="#15150f" stroke-width="2" stroke-linejoin="round"/>
<rect x="740.9" y="676.5" width="4.6" height="34.5" rx="2.3" fill="#8a8672" stroke="#15150f" stroke-width="1.800"/>
<rect x="747.8" y="665.0" width="4.6" height="46.0" rx="2.3" fill="#8a8672" stroke="#15150f" stroke-width="1.800"/>
<rect x="754.7" y="674.2" width="4.6" height="36.8" rx="2.3" fill="#8a8672" stroke="#15150f" stroke-width="1.800"/>
<rect x="761.6" y="669.6" width="4.6" height="41.4" rx="2.3" fill="#8a8672" stroke="#15150f" stroke-width="1.800"/>
<rect x="770.8" y="671.9" width="5.5" height="39.1" rx="2.8" fill="#8a8672" stroke="#15150f" stroke-width="1.800"/>
<rect x="737" y="682" width="15" height="30" fill="#d98a55"/>
<path d="M715 665A88 88 0 0 1 790 539A88 88 0 0 1 877 588" fill="none" stroke="#3b8eea" stroke-width="2.600"/>
<path d="M706 626C706 655 745 671 790 671C840 671 882 652 882 625" fill="none" stroke="#a4e02b" stroke-width="2.600"/>
<path d="M763.500 144L769 240L780 400L787 512" stroke="#a4e02b" stroke-width="1.400" fill="none"/>
<path d="M787 512L790 628" stroke="#a4e02b" stroke-width="3"/>
<polygon points="786.0,486.0 795.0,514.0 778.0,514.0" fill="#a4e02b" />
<path d="M790 630L680 634" stroke="#ef3a5d" stroke-width="2.600"/>
<polygon points="649.0,635.0 682.0,626.0 682.0,642.0" fill="#ef3a5d" />
<path d="M790 628L800 719" stroke="#e8466a" stroke-width="2.200"/>
<rect x="752" y="589" width="17" height="17" fill="#3b8eea"/><rect x="757" y="611" width="15" height="6" fill="#a4e02b"/><ellipse cx="796" cy="584" rx="4" ry="6" fill="#3b8eea"/>
<g fill="none" stroke="#e8eef2" stroke-width=".7" opacity=".35"><circle cx="1000" cy="560" r="120"/><ellipse cx="1000" cy="560" rx="60" ry="120"/><circle cx="1000" cy="560" r="170"/><ellipse cx="1000" cy="560" rx="120" ry="40"/></g>
<path d="M1421 196.500L1446 195.500" stroke="#f0365a" stroke-width="2.500"/><path d="M1446 170L1446 196" stroke="#8ad014" stroke-width="2.500"/>
<circle cx="1441" cy="183" r="8.500" fill="#6aa8ec" opacity=".75"/>
<circle cx="1446" cy="165.500" r="8.500" fill="#8ad014"/><circle cx="1416" cy="196.500" r="8.500" fill="#f0365a"/><circle cx="1475.500" cy="193" r="8.500" fill="#b8263f" stroke="#f0365a" stroke-width="1"/><circle cx="1450.500" cy="206" r="8.500" fill="#1f5fae" stroke="#3b8eea" stroke-width="1"/><circle cx="1446" cy="224" r="8.500" fill="#5e900e" stroke="#8ad014" stroke-width="1"/>
<text x="1446" y="170" font-size="11" text-anchor="middle" fill="#1b2a05" font-family="Liberation Sans, sans-serif">Y</text><text x="1416" y="200.500" font-size="11" text-anchor="middle" fill="#3a0a14" font-family="Liberation Sans, sans-serif">X</text><text x="1441" y="187" font-size="11" text-anchor="middle" fill="#3f78c4" opacity=".8" font-family="Liberation Sans, sans-serif">Z</text>
</svg>
</div>
<div class="b " style="left:315px;top:154px;width:104px;height:29px;background:rgba(38,46,56,0.5);border-radius:3px"></div>
<svg class="ic" style="left:319.0px;top:161.5px" width="14" height="14" viewBox="0 0 16 16" ><g fill="#e0e0e0"><circle cx="8" cy="2.5" r="1.9"/><circle cx="8" cy="8" r="1.9"/><circle cx="8" cy="13.5" r="1.9"/></g></svg>
<div class="t " style="left:339px;top:158.5px;color:#dfe8ef;font-size:14.6px;">Perspective</div>
<div class="b " style="left:305px;top:1030px;width:1191px;height:41px;background:#3b4146;border-radius:3px"></div>
<div class="b " style="left:314px;top:1047px;width:9.5px;height:9.5px;background:#f7dc6f;border-radius:50%"></div>
<div class="t " style="left:327px;top:1042px;color:#dfe1e4;font-size:14.8px;">Output</div>
<div class="t " style="left:390px;top:1042px;color:#dfe1e4;font-size:14.8px;">Debugger</div>
<div class="t " style="left:473px;top:1042px;color:#dfe1e4;font-size:14.8px;">Audio</div>
<div class="t " style="left:528px;top:1042px;color:#dfe1e4;font-size:14.8px;">Animation</div>
<div class="t " style="left:612px;top:1042px;color:#dfe1e4;font-size:14.8px;">Shader Editor</div>
<svg class="ic" style="left:1415.0px;top:1044.5px" width="15" height="15" viewBox="0 0 16 16" ><path d="M8 1.200c-.7 0-1.200.5-1.200 1.200v.3C4.800 3.300 3.700 5 3.700 7v3.300L2 12.500v.8h12v-.8l-1.700-2.200V7c0-2-1.100-3.700-3.100-4.300v-.3c0-.7-.5-1.200-1.200-1.200zM6.500 14a1.500 1.500 0 0 0 3 0z" fill="#e0e0e0" transform="rotate(-18 8 8)"/></svg>
<div class="t " style="left:1440px;top:1042px;color:#b3b7bc;font-size:14.8px;">4.3.1.rc</div>
<div class="b " style="left:1500px;top:74px;width:412px;height:998px;background:#3b4146;border-radius:3px"></div>
<div class="b " style="left:1500px;top:74px;width:412px;height:30px;background:#2a2d33;border-radius:3px 3px 0 0"></div>
<div class="b " style="left:1500px;top:74px;width:85px;height:30px;background:#3b4146;border-top:2px solid #6b69d6;box-sizing:border-box;border-radius:3px 0 0 0"></div>
<div class="t " style="left:1510px;top:79.5px;color:#dfe1e4;font-size:14.8px;">Inspector</div>
<div class="t " style="left:1596px;top:79.5px;color:#8f949b;font-size:14.8px;">Node</div>
<div class="t " style="left:1654px;top:79.5px;color:#8f949b;font-size:14.8px;">History</div>
<svg class="ic" style="left:1896.0px;top:81.5px" width="16" height="16" viewBox="0 0 16 16" ><g fill="#7f848b"><circle cx="8" cy="2.5" r="1.8"/><circle cx="8" cy="8" r="1.8"/><circle cx="8" cy="13.5" r="1.8"/></g></svg>
<svg class="ic" style="left:1510.0px;top:115.5px" width="16" height="16" viewBox="0 0 16 16" ><path d="M2.500 1v14h5.500v-2H6v-3h2V8h3V6h2V5L9 1zM9 2.500L11.500 5H9z" fill="#e0e0e0"/><path d="M10 9v2H8v2h2v2h2v-2h2v-2h-2V9z" fill="#8eef97"/></svg>
<svg class="ic" style="left:1541.5px;top:115.5px" width="16" height="16" viewBox="0 0 16 16" ><path d="M1.500 3a1 1 0 0 1 1-1h3.500l1.500 2h5a1 1 0 0 1 1 1v1H5L2.500 11.500v2a1 1 0 0 1-1-1z" fill="#e0e0e0"/><path d="M5.500 7H15.500L13 14H2.500z" fill="#e0e0e0"/></svg>
<svg class="ic" style="left:1574.0px;top:115.5px" width="16" height="16" viewBox="0 0 16 16" ><path d="M2 1.500h9.500L14.500 4.500V14.500H1.500v-12.500zM4 2.500v4h7v-4H9.500v3H7.500v-3zM8 9a2 2 0 0 0 0 4 2 2 0 0 0 0-4z" fill="#7d8289" fill-rule="evenodd"/></svg>
<svg class="ic" style="left:1605.5px;top:115.5px" width="16" height="16" viewBox="0 0 16 16" ><g fill="#e0e0e0"><circle cx="8" cy="2.5" r="1.9"/><circle cx="8" cy="8" r="1.9"/><circle cx="8" cy="13.5" r="1.9"/></g></svg>
<svg class="ic" style="left:1834.0px;top:115.5px" width="16" height="16" viewBox="0 0 16 16" ><path d="M10 1.5L5.5 8l4.500 6.500" fill="none" stroke="#e0e0e0" stroke-width="2" stroke-linecap="round" stroke-linejoin="round"/></svg>
<svg class="ic" style="left:1858.0px;top:115.5px" width="16" height="16" viewBox="0 0 16 16" ><path d="M6 1.5L10.500 8 6 14.500" fill="none" stroke="#6d7279" stroke-width="2" stroke-linecap="round" stroke-linejoin="round"/></svg>
<svg class="ic" style="left:1886.0px;top:115.5px" width="16" height="16" viewBox="0 0 16 16" ><path d="M8.500 1.500a6.500 6.500 0 1 1-6.300 8" fill="none" stroke="#e0e0e0" stroke-width="2"/><path d="M0 6.500h5.500L2.700 10.500z" fill="#e0e0e0"/><path d="M8.500 4.500v4l2.500 1.500" fill="none" stroke="#e0e0e0" stroke-width="1.800"/></svg>
<div class="b " style="left:1504px;top:142px;width:372px;height:30px;background:#25282e;border-radius:3px"></div>
<svg class="ic" style="left:1508.0px;top:149.0px" width="16" height="16" viewBox="0 0 16 16" ><g fill="#fc7f7f" opacity="1"><circle cx="8" cy="8" r="3.200"/><circle cx="8" cy="1.800" r="1.100"/><circle cx="8" cy="14.200" r="1.100"/><circle cx="1.800" cy="8" r="1.100"/><circle cx="14.200" cy="8" r="1.100"/><circle cx="3.600" cy="3.600" r="1.100"/><circle cx="12.400" cy="3.600" r="1.100"/><circle cx="3.600" cy="12.400" r="1.100"/><circle cx="12.400" cy="12.400" r="1.100"/></g></svg>
<div class="t " style="left:1532px;top:147px;color:#dfe1e4;font-size:14.8px;">DirectionalLight3d</div>
<svg class="ic" style="left:1856.0px;top:149.0px" width="16" height="16" viewBox="0 0 16 16" ><path d="M3.500 6l4.500 4.500L12.500 6" fill="none" stroke="#e0e0e0" stroke-width="2" stroke-linecap="round" stroke-linejoin="round"/></svg>
<svg class="ic" style="left:1886.0px;top:149.0px" width="16" height="16" viewBox="0 0 16 16" ><circle cx="9.500" cy="4" r="2.800" fill="none" stroke="#e0e0e0" stroke-width="1.800"/><path d="M7.500 6L4 9.300" stroke="#e0e0e0" stroke-width="2" stroke-linecap="round"/><text x="8" y="15.600" font-size="6.800" font-weight="bold" text-anchor="middle" fill="#e0e0e0" font-family="Liberation Sans, sans-serif" letter-spacing="-.2">DOC</text></svg>
<div class="b " style="left:1504px;top:177px;width:372px;height:29px;background:#25282e;border-radius:3px"></div>
<div class="t " style="left:1510px;top:181.5px;color:#c8cbcf;font-size:14.8px;">Filter Properties</div>
<svg class="ic" style="left:1854.0px;top:183.5px" width="15" height="15" viewBox="0 0 16 16" ><path d="M6.5 1.5a5 5 0 1 0 2.9 9.1l4 4 1.5-1.5-4-4A5 5 0 0 0 6.5 1.5zm0 2a3 3 0 0 1 0 6 3 3 0 0 1 0-6z" fill="#e0e0e0"/></svg>
<svg class="ic" style="left:1886.0px;top:183.5px" width="16" height="16" viewBox="0 0 16 16" ><path d="M3.700 1h1.800v6.500H3.700z" fill="#e0e0e0"/><path d="M2.600 8.600a1.100 1.100 0 0 1 1.100-1.100h1.800a1.100 1.100 0 0 1 1.100 1.100v4.600a2 2 0 0 1-4 0z" fill="#e0e0e0"/><path d="M9.300 1v3.600a2.400 2.400 0 0 0 1.500 2.200V15h1.900V6.800a2.400 2.400 0 0 0 1.500-2.200V1h-1.500v3.200h-1.900V1z" fill="#e0e0e0"/></svg>
<div class="b " style="left:1504px;top:211px;width:404px;height:856px;background:#212329;border-radius:3px"></div>
<div class="b " style="left:1895.5px;top:219px;width:5.5px;height:507px;background:#5a5f66;border-radius:3px"></div>
<div class="b " style="left:1895.5px;top:726px;width:5.5px;height:336px;background:#2f3338;border-radius:3px"></div>
<div class="b " style="left:1508px;top:215.5px;width:384px;height:24px;background:#3e4247;border-radius:2px"></div>
<svg class="ic" style="left:1623.0px;top:219.5px" width="16" height="16" viewBox="0 0 16 16" ><g fill="#fc7f7f" opacity="1"><circle cx="8" cy="8" r="3.200"/><circle cx="8" cy="1.800" r="1.100"/><circle cx="8" cy="14.200" r="1.100"/><circle cx="1.800" cy="8" r="1.100"/><circle cx="14.200" cy="8" r="1.100"/><circle cx="3.600" cy="3.600" r="1.100"/><circle cx="12.400" cy="3.600" r="1.100"/><circle cx="3.600" cy="12.400" r="1.100"/><circle cx="12.400" cy="12.400" r="1.100"/></g></svg>
<div class="t " style="left:1645px;top:217.5px;color:#e6e7e9;font-size:14.8px;font-weight:bold">DirectionalLight3D</div>
<div class="b " style="left:1508px;top:241px;width:384px;height:29px;background:#24272d;"></div>
<div class="t " style="left:1516px;top:244.5px;color:#c5c8cc;font-size:14.8px;">Sky Mode</div>
<div class="b " style="left:1700px;top:241px;width:192px;height:29px;background:#1d1f24;border-radius:2px"></div>
<div class="t " style="left:1706px;top:245px;color:#dfe1e4;font-size:14.8px;">Light and Sky</div>
<svg class="ic" style="left:1873.0px;top:247.0px" width="16" height="16" viewBox="0 0 16 16" ><path d="M3.500 6l4.500 4.500L12.500 6" fill="none" stroke="#e0e0e0" stroke-width="2" stroke-linecap="round" stroke-linejoin="round"/></svg>
<div class="b " style="left:1508px;top:271px;width:384px;height:24px;background:#272a30;"></div>
<svg class="ic" style="left:1509.0px;top:276.5px" width="14" height="14" viewBox="0 0 16 16" ><path d="M6 4l4 4-4 4" fill="none" stroke="#8c9097" stroke-width="1.800" stroke-linecap="round" stroke-linejoin="round"/></svg>
<div class="t " style="left:1524px;top:273.0px;color:#e6e7e9;font-size:14.8px;font-weight:bold">Directional Shadow</div>
<div class="b " style="left:1508px;top:296px;width:384px;height:24.5px;background:#3e4247;border-radius:2px"></div>
<svg class="ic" style="left:1660.5px;top:300.2px" width="16" height="16" viewBox="0 0 16 16" ><circle cx="8" cy="8" r="5" fill="none" stroke="#9a9ea4" stroke-width="2"/></svg>
<div class="t " style="left:1683px;top:298.25px;color:#e6e7e9;font-size:14.8px;font-weight:bold">Light3D</div>
<div class="b " style="left:1508px;top:321px;width:384px;height:24.5px;background:#272a30;"></div>
<svg class="ic" style="left:1509.0px;top:326.8px" width="14" height="14" viewBox="0 0 16 16" ><path d="M4 6l4 4 4-4" fill="none" stroke="#8c9097" stroke-width="1.800" stroke-linecap="round" stroke-linejoin="round"/></svg>
<div class="t " style="left:1524px;top:323.25px;color:#e6e7e9;font-size:14.8px;font-weight:bold">Light</div>
<div class="b " style="left:1508px;top:344.0px;width:384px;height:32px;background:#24272d;"></div>
<div class="t " style="left:1528px;top:349px;color:#c5c8cc;font-size:14.8px;">Color</div>
<svg class="ic" style="left:1681.0px;top:352.0px" width="16" height="16" viewBox="0 0 16 16" ><path d="M8.500 3A5.500 5.500 0 1 1 4 11.500" fill="none" stroke="#e0e0e0" stroke-width="2"/><path d="M0.500 7.500L6.500 8.500 3.500 3z" fill="#e0e0e0"/><path d="M8.500 3A5.500 5.500 0 0 0 3.800 5.700" fill="none" stroke="#e0e0e0" stroke-width="2"/></svg>
<div class="b " style="left:1711.5px;top:351px;width:174.5px;height:19.5px;background:#fff2ed;border-radius:1px"></div>
<div class="b " style="left:1508px;top:376.5px;width:384px;height:32px;background:#24272d;"></div>
<div class="t " style="left:1528px;top:381.5px;color:#c5c8cc;font-size:14.8px;">Energy</div>
<svg class="ic" style="left:1681.0px;top:384.5px" width="16" height="16" viewBox="0 0 16 16" ><path d="M8.500 3A5.500 5.500 0 1 1 4 11.500" fill="none" stroke="#e0e0e0" stroke-width="2"/><path d="M0.500 7.500L6.500 8.500 3.500 3z" fill="#e0e0e0"/><path d="M8.500 3A5.500 5.500 0 0 0 3.800 5.700" fill="none" stroke="#e0e0e0" stroke-width="2"/></svg>
<div class="b " style="left:1706px;top:378.0px;width:186px;height:31px;background:#1d1f24;border-radius:2px"></div>
<div class="t " style="left:1723px;top:381.5px;color:#dfe1e4;font-size:14.8px;">1.5</div>
<div class="b " style="left:1712px;top:403.5px;width:170px;height:2px;background:#3d4148;border-radius:1px"></div>
<div class="b " style="left:1712px;top:403.5px;width:16.15px;height:2px;background:#a9acb0;border-radius:1px"></div>
<div class="b " style="left:1725.65px;top:402.0px;width:5px;height:5px;background:#e0e0e0;border-radius:1px"></div>
<div class="b " style="left:1508px;top:410.5px;width:384px;height:32px;background:#24272d;"></div>
<div class="t " style="left:1528px;top:415.5px;color:#c5c8cc;font-size:14.8px;">Indirect Energy</div>
<div class="b " style="left:1706px;top:412.0px;width:186px;height:31px;background:#1d1f24;border-radius:2px"></div>
<div class="t " style="left:1723px;top:415.5px;color:#dfe1e4;font-size:14.8px;">1</div>
<div class="b " style="left:1712px;top:437.5px;width:170px;height:2px;background:#3d4148;border-radius:1px"></div>
<div class="b " style="left:1712px;top:437.5px;width:11.05px;height:2px;background:#a9acb0;border-radius:1px"></div>
<div class="b " style="left:1720.55px;top:436.0px;width:5px;height:5px;background:#e0e0e0;border-radius:1px"></div>
<div class="b " style="left:1508px;top:445.0px;width:384px;height:32px;background:#24272d;"></div>
<div class="t " style="left:1528px;top:450px;color:#c5c8cc;font-size:14.8px;">Volumetric Fog Energy</div>
<div class="b " style="left:1706px;top:446.5px;width:186px;height:31px;background:#1d1f24;border-radius:2px"></div>
<div class="t " style="left:1723px;top:450px;color:#dfe1e4;font-size:14.8px;">1</div>
<div class="b " style="left:1712px;top:472px;width:170px;height:2px;background:#3d4148;border-radius:1px"></div>
<div class="b " style="left:1712px;top:472px;width:11.05px;height:2px;background:#a9acb0;border-radius:1px"></div>
<div class="b " style="left:1720.55px;top:470.5px;width:5px;height:5px;background:#e0e0e0;border-radius:1px"></div>
<div class="b " style="left:1508px;top:479.0px;width:384px;height:32px;background:#24272d;"></div>
<div class="t " style="left:1528px;top:484px;color:#c5c8cc;font-size:14.8px;">Angular Distance</div>
<div class="b " style="left:1706px;top:480.5px;width:186px;height:31px;background:#1d1f24;border-radius:2px"></div>
<div class="t " style="left:1723px;top:484px;color:#dfe1e4;font-size:14.8px;">0</div>
<div class="b " style="left:1712px;top:506px;width:170px;height:2px;background:#3d4148;border-radius:1px"></div>
<div class="b " style="left:1712px;top:506px;width:2.04px;height:2px;background:#a9acb0;border-radius:1px"></div>
<div class="b " style="left:1711.54px;top:504.5px;width:5px;height:5px;background:#e0e0e0;border-radius:1px"></div>
<div class="t " style="left:1733px;top:481.5px;color:#8f949b;font-size:12px;">°</div>
<div class="b " style="left:1508px;top:513.5px;width:384px;height:32px;background:#24272d;"></div>
<div class="t " style="left:1528px;top:518.5px;color:#c5c8cc;font-size:14.8px;">Negative</div>
<div class="b " style="left:1706px;top:515.0px;width:186px;height:31px;background:#1d1f24;border-radius:2px"></div>
<div class="b " style="left:1710.5px;top:522.5px;width:14.5px;height:14.5px;background:#45494f;border-radius:2.500px"></div>
<div class="t " style="left:1734px;top:520.0px;color:#dfe1e4;font-size:14.8px;">On</div>
<div class="b " style="left:1508px;top:548.0px;width:384px;height:32px;background:#24272d;"></div>
<div class="t " style="left:1528px;top:553px;color:#c5c8cc;font-size:14.8px;">Bake Mode</div>
<div class="b " style="left:1706px;top:549.0px;width:186px;height:31px;background:#1d1f24;border-radius:2px"></div>
<div class="t " style="left:1712px;top:554.5px;color:#dfe1e4;font-size:14.8px;">Dynamic</div>
<svg class="ic" style="left:1873.0px;top:556.5px" width="16" height="16" viewBox="0 0 16 16" ><path d="M3.500 6l4.500 4.500L12.500 6" fill="none" stroke="#e0e0e0" stroke-width="2" stroke-linecap="round" stroke-linejoin="round"/></svg>
<div class="b " style="left:1508px;top:580.0px;width:384px;height:32px;background:#24272d;"></div>
<div class="t " style="left:1528px;top:585px;color:#c5c8cc;font-size:14.8px;">Cull Mask</div>
<div class="b " style="left:1520px;top:613px;width:372px;height:63px;background:#1f2126;"></div>
<div class="b g" style="left:1524px;top:619px;width:24px;height:25px;background:#5a55ad;color:#e4e3f6">1</div>
<div class="b g" style="left:1549px;top:619px;width:24px;height:25px;background:#5a55ad;color:#e4e3f6">2</div>
<div class="b g" style="left:1574px;top:619px;width:24px;height:25px;background:#5a55ad;color:#e4e3f6">3</div>
<div class="b g" style="left:1599px;top:619px;width:24px;height:25px;background:#5a55ad;color:#e4e3f6">4</div>
<div class="b g" style="left:1624px;top:619px;width:24px;height:25px;background:#5a55ad;color:#e4e3f6">5</div>
<div class="b g" style="left:1524px;top:645px;width:24px;height:25px;background:#5a55ad;color:#e4e3f6">6</div>
<div class="b g" style="left:1549px;top:645px;width:24px;height:25px;background:#5a55ad;color:#e4e3f6">7</div>
<div class="b g" style="left:1574px;top:645px;width:24px;height:25px;background:#5a55ad;color:#e4e3f6">8</div>
<div class="b g" style="left:1599px;top:645px;width:24px;height:25px;background:#5a55ad;color:#e4e3f6">9</div>
<div class="b g" style="left:1624px;top:645px;width:24px;height:25px;background:#5a55ad;color:#e4e3f6">10</div>
<div class="b g" style="left:1652px;top:619px;width:24px;height:25px;background:#5a55ad;color:#e4e3f6">11</div>
<div class="b g" style="left:1677px;top:619px;width:24px;height:25px;background:#5a55ad;color:#e4e3f6">12</div>
<div class="b g" style="left:1702px;top:619px;width:24px;height:25px;background:#5a55ad;color:#e4e3f6">13</div>
<div class="b g" style="left:1727px;top:619px;width:24px;height:25px;background:#5a55ad;color:#e4e3f6">14</div>
<div class="b g" style="left:1752px;top:619px;width:24px;height:25px;background:#5a55ad;color:#e4e3f6">15</div>
<div class="b g" style="left:1652px;top:645px;width:24px;height:25px;background:#5a55ad;color:#e4e3f6">16</div>
<div class="b g" style="left:1677px;top:645px;width:24px;height:25px;background:#5a55ad;color:#e4e3f6">17</div>
<div class="b g" style="left:1702px;top:645px;width:24px;height:25px;background:#5a55ad;color:#e4e3f6">18</div>
<div class="b g" style="left:1727px;top:645px;width:24px;height:25px;background:#5a55ad;color:#e4e3f6">19</div>
<div class="b g" style="left:1752px;top:645px;width:24px;height:25px;background:#5a55ad;color:#e4e3f6">20</div>
<svg class="ic" style="left:1876.0px;top:637.0px" width="16" height="16" viewBox="0 0 16 16" ><g fill="#e0e0e0"><circle cx="8" cy="2.5" r="1.9"/><circle cx="8" cy="8" r="1.9"/><circle cx="8" cy="13.5" r="1.9"/></g></svg>
<div class="b " style="left:1508px;top:676.5px;width:384px;height:24px;background:#272a30;"></div>
<svg class="ic" style="left:1509.0px;top:682.0px" width="14" height="14" viewBox="0 0 16 16" ><path d="M4 6l4 4 4-4" fill="none" stroke="#8c9097" stroke-width="1.800" stroke-linecap="round" stroke-linejoin="round"/></svg>
<div class="t " style="left:1524px;top:678.5px;color:#e6e7e9;font-size:14.8px;font-weight:bold">Shadow</div>
<div class="b " style="left:1508px;top:699.0px;width:384px;height:32px;background:#24272d;"></div>
<div class="t " style="left:1528px;top:704px;color:#c5c8cc;font-size:14.8px;">Enabled</div>
<svg class="ic" style="left:1681.0px;top:707.0px" width="16" height="16" viewBox="0 0 16 16" ><path d="M8.500 3A5.500 5.500 0 1 1 4 11.500" fill="none" stroke="#e0e0e0" stroke-width="2"/><path d="M0.500 7.500L6.500 8.500 3.500 3z" fill="#e0e0e0"/><path d="M8.500 3A5.500 5.500 0 0 0 3.800 5.700" fill="none" stroke="#e0e0e0" stroke-width="2"/></svg>
<div class="b " style="left:1706px;top:700.5px;width:186px;height:31px;background:#1d1f24;border-radius:2px"></div>
<div class="b " style="left:1710.5px;top:708px;width:14.5px;height:14.5px;background:#6b69d6;border-radius:2.500px"></div>
<svg class="ic" style="left:1711.3px;top:708.8px" width="13" height="13" viewBox="0 0 16 16" ><path d="M3.500 8.500l3 3 6-7" fill="none" stroke="#fff" stroke-width="2.200" stroke-linecap="round" stroke-linejoin="round"/></svg>
<div class="t " style="left:1734px;top:705.5px;color:#8a88e6;font-size:14.8px;">On</div>
<div class="b " style="left:1508px;top:731.5px;width:384px;height:32px;background:#24272d;"></div>
<div class="t " style="left:1528px;top:736.5px;color:#c5c8cc;font-size:14.8px;">Bias</div>
<div class="b " style="left:1706px;top:733.0px;width:186px;height:31px;background:#1d1f24;border-radius:2px"></div>
<div class="t " style="left:1723px;top:736.5px;color:#dfe1e4;font-size:14.8px;">0.1</div>
<div class="b " style="left:1712px;top:758.5px;width:170px;height:2px;background:#3d4148;border-radius:1px"></div>
<div class="b " style="left:1712px;top:758.5px;width:2.04px;height:2px;background:#a9acb0;border-radius:1px"></div>
<div class="b " style="left:1711.54px;top:757.0px;width:5px;height:5px;background:#e0e0e0;border-radius:1px"></div>
<div class="b " style="left:1508px;top:766.0px;width:384px;height:32px;background:#24272d;"></div>
<div class="t " style="left:1528px;top:771px;color:#c5c8cc;font-size:14.8px;">Normal Bias</div>
<div class="b " style="left:1706px;top:767.5px;width:186px;height:31px;background:#1d1f24;border-radius:2px"></div>
<div class="t " style="left:1723px;top:771px;color:#dfe1e4;font-size:14.8px;">2</div>
<div class="b " style="left:1712px;top:793px;width:170px;height:2px;background:#3d4148;border-radius:1px"></div>
<div class="b " style="left:1712px;top:793px;width:34.85px;height:2px;background:#a9acb0;border-radius:1px"></div>
<div class="b " style="left:1744.35px;top:791.5px;width:5px;height:5px;background:#e0e0e0;border-radius:1px"></div>
<div class="b " style="left:1508px;top:800.5px;width:384px;height:32px;background:#24272d;"></div>
<div class="t " style="left:1528px;top:805.5px;color:#c5c8cc;font-size:14.8px;">Reverse Cull Face</div>
<div class="b " style="left:1706px;top:802.0px;width:186px;height:31px;background:#1d1f24;border-radius:2px"></div>
<div class="b " style="left:1710.5px;top:809.5px;width:14.5px;height:14.5px;background:#45494f;border-radius:2.500px"></div>
<div class="t " style="left:1734px;top:807.0px;color:#dfe1e4;font-size:14.8px;">On</div>
<div class="b " style="left:1508px;top:833.5px;width:384px;height:32px;background:#24272d;"></div>
<div class="t " style="left:1528px;top:838.5px;color:#c5c8cc;font-size:14.8px;">Transmittance Bias</div>
<div class="b " style="left:1706px;top:835.0px;width:186px;height:31px;background:#1d1f24;border-radius:2px"></div>
<div class="t " style="left:1723px;top:838.5px;color:#dfe1e4;font-size:14.8px;">0.05</div>
<div class="b " style="left:1712px;top:860.5px;width:170px;height:2px;background:#3d4148;border-radius:1px"></div>
<div class="b " style="left:1712px;top:860.5px;width:86.7px;height:2px;background:#a9acb0;border-radius:1px"></div>
<div class="b " style="left:1796.2px;top:859.0px;width:5px;height:5px;background:#e0e0e0;border-radius:1px"></div>
<div class="b " style="left:1508px;top:868.0px;width:384px;height:32px;background:#24272d;"></div>
<div class="t " style="left:1528px;top:873px;color:#c5c8cc;font-size:14.8px;">Opacity</div>
<div class="b " style="left:1706px;top:869.5px;width:186px;height:31px;background:#1d1f24;border-radius:2px"></div>
<div class="t " style="left:1723px;top:873px;color:#dfe1e4;font-size:14.8px;">1</div>
<div class="b " style="left:1712px;top:895px;width:170px;height:2px;background:#3d4148;border-radius:1px"></div>
<div class="b " style="left:1712px;top:895px;width:170.0px;height:2px;background:#a9acb0;border-radius:1px"></div>
<div class="b " style="left:1879.5px;top:893.5px;width:5px;height:5px;background:#e0e0e0;border-radius:1px"></div>
<div class="b " style="left:1508px;top:902.0px;width:384px;height:32px;background:#24272d;"></div>
<div class="t " style="left:1528px;top:907px;color:#c5c8cc;font-size:14.8px;">Blur</div>
<div class="b " style="left:1706px;top:903.5px;width:186px;height:31px;background:#1d1f24;border-radius:2px"></div>
<div class="t " style="left:1723px;top:907px;color:#dfe1e4;font-size:14.8px;">1</div>
<div class="b " style="left:1712px;top:929px;width:170px;height:2px;background:#3d4148;border-radius:1px"></div>
<div class="b " style="left:1712px;top:929px;width:18.7px;height:2px;background:#a9acb0;border-radius:1px"></div>
<div class="b " style="left:1728.2px;top:927.5px;width:5px;height:5px;background:#e0e0e0;border-radius:1px"></div>
<div class="b " style="left:1508px;top:935.5px;width:384px;height:23.5px;background:#272a30;"></div>
<svg class="ic" style="left:1509.0px;top:940.8px" width="14" height="14" viewBox="0 0 16 16" ><path d="M6 4l4 4-4 4" fill="none" stroke="#8c9097" stroke-width="1.800" stroke-linecap="round" stroke-linejoin="round"/></svg>
<div class="t " style="left:1524px;top:937.25px;color:#e6e7e9;font-size:14.8px;font-weight:bold">Editor</div>
<div class="b " style="left:1508px;top:960px;width:384px;height:24.5px;background:#3e4247;border-radius:2px"></div>
<svg class="ic" style="left:1628.0px;top:964.2px" width="16" height="16" viewBox="0 0 16 16" ><g fill="#b56d6d"><circle cx="3" cy="3" r="1.800"/><circle cx="13" cy="3" r="1.800"/><circle cx="3" cy="13" r="1.800"/><circle cx="13" cy="13" r="1.800"/></g></svg>
<div class="t " style="left:1650px;top:962.25px;color:#e6e7e9;font-size:14.8px;font-weight:bold">VisualInstance3D</div>
<div class="b " style="left:1508px;top:985px;width:384px;height:82px;background:#24272d;"></div>
<div class="t " style="left:1516px;top:986px;color:#c5c8cc;font-size:14.8px;">Layers</div>
<div class="b " style="left:1508px;top:1011px;width:384px;height:56px;background:#1f2126;"></div>
<div class="b" style="left:1508px;top:1011px;width:300px;height:56px;overflow:hidden">
<div class="b g" style="left:4px;top:7px;width:24px;height:25px;background:#5a55ad;color:#e4e3f6">1</div>
<div class="b g" style="left:29px;top:7px;width:24px;height:25px;background:#34335a;color:#a9a9c4">2</div>
<div class="b g" style="left:54px;top:7px;width:24px;height:25px;background:#34335a;color:#a9a9c4">3</div>
<div class="b g" style="left:79px;top:7px;width:24px;height:25px;background:#34335a;color:#a9a9c4">4</div>
<div class="b g" style="left:104px;top:7px;width:24px;height:25px;background:#34335a;color:#a9a9c4">5</div>
<div class="b g" style="left:4px;top:33px;width:24px;height:25px;background:#34335a;color:#a9a9c4">6</div>
<div class="b g" style="left:29px;top:33px;width:24px;height:25px;background:#34335a;color:#a9a9c4">7</div>
<div class="b g" style="left:54px;top:33px;width:24px;height:25px;background:#34335a;color:#a9a9c4">8</div>
<div class="b g" style="left:79px;top:33px;width:24px;height:25px;background:#34335a;color:#a9a9c4">9</div>
<div class="b g" style="left:104px;top:33px;width:24px;height:25px;background:#34335a;color:#a9a9c4">10</div>
<div class="b g" style="left:132px;top:7px;width:24px;height:25px;background:#34335a;color:#a9a9c4">11</div>
<div class="b g" style="left:157px;top:7px;width:24px;height:25px;background:#34335a;color:#a9a9c4">12</div>
<div class="b g" style="left:182px;top:7px;width:24px;height:25px;background:#34335a;color:#a9a9c4">13</div>
<div class="b g" style="left:207px;top:7px;width:24px;height:25px;background:#34335a;color:#a9a9c4">14</div>
<div class="b g" style="left:232px;top:7px;width:24px;height:25px;background:#34335a;color:#a9a9c4">15</div>
<div class="b g" style="left:132px;top:33px;width:24px;height:25px;background:#34335a;color:#a9a9c4">16</div>
<div class="b g" style="left:157px;top:33px;width:24px;height:25px;background:#34335a;color:#a9a9c4">17</div>
<div class="b g" style="left:182px;top:33px;width:24px;height:25px;background:#34335a;color:#a9a9c4">18</div>
<div class="b g" style="left:207px;top:33px;width:24px;height:25px;background:#34335a;color:#a9a9c4">19</div>
<div class="b g" style="left:232px;top:33px;width:24px;height:25px;background:#34335a;color:#a9a9c4">20</div>
</div>
<svg class="ic" style="left:1876.0px;top:1037.0px" width="16" height="16" viewBox="0 0 16 16" ><g fill="#e0e0e0"><circle cx="8" cy="2.5" r="1.9"/><circle cx="8" cy="8" r="1.9"/><circle cx="8" cy="13.5" r="1.9"/></g></svg></div></body></html>
